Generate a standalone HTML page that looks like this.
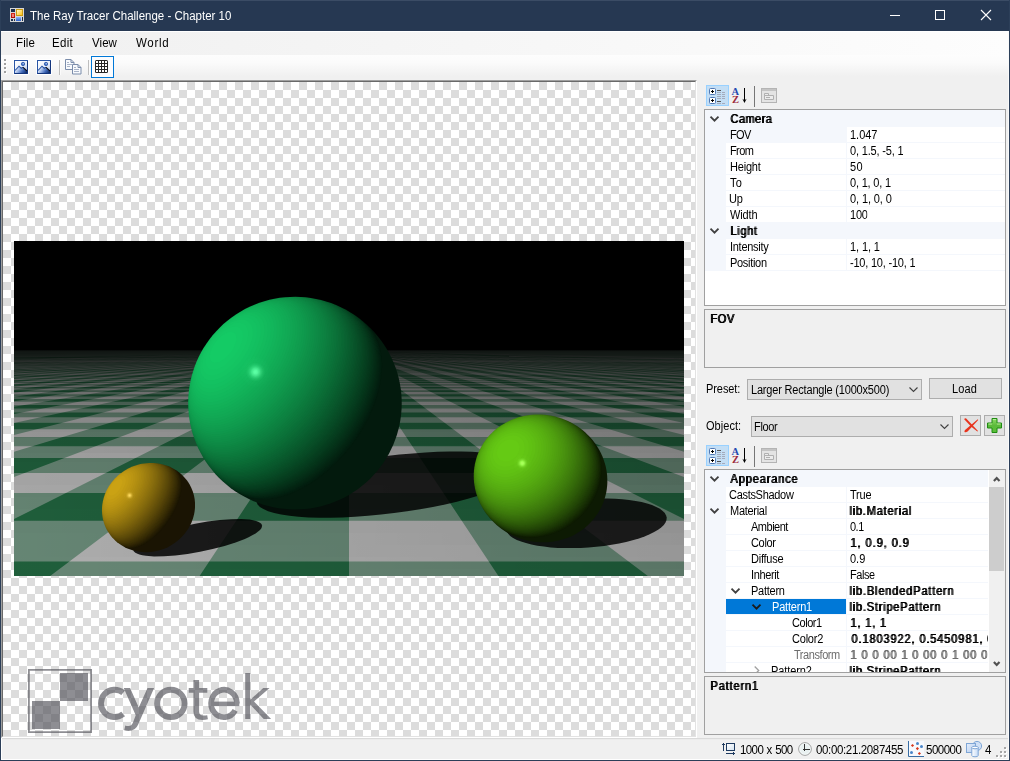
<!DOCTYPE html><html><head><meta charset="utf-8"><title>The Ray Tracer Challenge - Chapter 10</title><style>
html,body{margin:0;padding:0}
body{width:1010px;height:761px;position:relative;overflow:hidden;background:#f0f0f0;font-family:"Liberation Sans",sans-serif;font-size:12px;color:#000}
.a,.t,.g,.v,.l{position:absolute;white-space:nowrap}
.t{font-size:12px;line-height:16px;height:16px;transform:scaleX(.9583);transform-origin:0 0}
.g{font-size:12px;line-height:15px;height:15px;transform:scaleX(.9167);transform-origin:0 0}
.b{text-shadow:1.090px 0 0}
.l{left:730px}
.v{left:850px}
svg{position:absolute;overflow:visible}
.pg{position:absolute;left:704px;width:302px;box-sizing:border-box;border:1px solid #a0a0a0;background:#fff;overflow:hidden}
.dp{position:absolute;left:704px;width:302px;box-sizing:border-box;border:1px solid #a0a0a0;background:#f0f0f0}
.cb{position:absolute;box-sizing:border-box;border:1px solid #adadad;background:#e1e1e1}
.ln{position:absolute;left:0;width:300px;height:1px;background:#f4f7fc}
</style></head><body><div class="a" style="left:0;top:0;width:1010px;height:31px;background:#263852"></div><div class="a" style="left:0;top:0;width:1010px;height:1px;background:#3b4c65"></div><div class="a" style="left:0;top:0;width:1px;height:761px;background:#2c3f59"></div><div class="a" style="left:1009px;top:0;width:1px;height:761px;background:#2c3f59"></div><div class="a" style="left:0;top:760px;width:1010px;height:1px;background:#2c3f59"></div><svg style="left:10px;top:8px" width="14" height="14" viewBox="0 0 14 14"><defs><linearGradient id="iy" x1="0" y1="0" x2="1" y2="1"><stop offset="0" stop-color="#fff8c8"/><stop offset="1" stop-color="#ffc418"/></linearGradient><linearGradient id="ib" x1="0" y1="0" x2="0" y2="1"><stop offset="0" stop-color="#8db8ff"/><stop offset="1" stop-color="#2f62c8"/></linearGradient><linearGradient id="ir" x1="0" y1="0" x2="0" y2="1"><stop offset="0" stop-color="#d82a18"/><stop offset="1" stop-color="#a80c08"/></linearGradient></defs>
<rect width="14" height="14" fill="#d6d6d6"/><rect x="1" y="1" width="4" height="3" fill="#1b2f4e"/><rect x="6" y="1" width="7" height="7" fill="#c99a10"/><rect x="7" y="2" width="5" height="5" fill="url(#iy)"/><rect x="1" y="5" width="4" height="5" fill="url(#ir)"/><rect x="2" y="6" width="2" height="3" fill="#f08078"/><rect x="6" y="9" width="5" height="4" fill="url(#ib)"/><rect x="1" y="11" width="2" height="2" fill="#1b2f4e"/><rect x="4" y="11" width="1" height="2" fill="#1b2f4e"/><rect x="12" y="9" width="1" height="4" fill="#1b2f4e"/></svg><div class="t" style="left:30.06px;top:8px;letter-spacing:-0px;color:#fff">The Ray Tracer Challenge - Chapter 10</div><svg style="left:880px;top:5px" width="120" height="20" viewBox="880 5 120 20" fill="none" stroke="#fff" stroke-width="1"><path d="M890 15.5h10"/><rect x="935.5" y="10.5" width="9" height="9"/><path d="M981 10l10 10M991 10l-10 10" stroke-width="1.1"/></svg><div class="a" style="left:1px;top:31px;width:1008px;height:24px;background:linear-gradient(90deg,#f0f0f0,#fdfdfd)"></div><div class="a" style="left:1px;top:31px;width:1008px;height:1px;background:#fff"></div><div class="t" style="left:15.7px;top:35px;letter-spacing:0.14px;">File</div><div class="t" style="left:52.4px;top:35px;letter-spacing:0.33px;">Edit</div><div class="t" style="left:92.05px;top:35px;letter-spacing:0.07px;">View</div><div class="t" style="left:136.18px;top:35px;letter-spacing:0.71px;">World</div><div class="a" style="left:1px;top:55px;width:1008px;height:25px;background:linear-gradient(#fdfdfd 0,#fbfbfb 30%,#f0f0f0 85%)"></div><div class="a" style="left:1008px;top:59px;width:1px;height:19px;background:#a9a9a9"></div><svg style="left:4px;top:59px" width="3" height="16" viewBox="0 0 3 16"><path d="M1 1h2v2h-2zM1 5h2v2h-2zM1 9h2v2h-2zM1 13h2v2h-2z" fill="#fff"/><path d="M0 0h2v2h-2zM0 4h2v2h-2zM0 8h2v2h-2zM0 12h2v2h-2z" fill="#a0a0a0"/></svg><svg style="left:13px;top:59px" width="16" height="16" viewBox="0 0 16 16"><defs><linearGradient id="ga" x1="0" y1="0" x2="1" y2="1"><stop offset="0" stop-color="#fff"/><stop offset=".55" stop-color="#eaf0fb"/><stop offset="1" stop-color="#9db8e6"/></linearGradient><linearGradient id="gam" x1="0" y1=".55" x2="1" y2=".95"><stop offset="0" stop-color="#eef3fc"/><stop offset=".3" stop-color="#9ab4e4"/><stop offset=".62" stop-color="#3c64b4"/><stop offset="1" stop-color="#0a2660"/></linearGradient></defs><rect width="16" height="16" rx="1" fill="#fff"/><rect x="1.5" y="1.5" width="13" height="13" fill="url(#ga)" stroke="#2a55a5"/><circle cx="10" cy="5" r="1.700" fill="#4a78cc" stroke="#2a55a5" stroke-width=".8"/><path d="M9.400 4.300h1.800l-.9 1.300z" fill="#c9d9f5"/><path d="M2 11.5L6 7.2L8.2 9.2L9.8 8.2L14 12.2V14H2z" fill="url(#gam)"/><path d="M2 11.500L6 7.200L8.200 9.200L9.800 8.200" fill="none" stroke="#2450a2" stroke-width="1.100"/><path d="M9.8 8.2L14 12" stroke="#0a0a14" stroke-width="1.1"/><path d="M14.500 2v12.500h-13" fill="none" stroke="#14357c"/></svg><svg style="left:36px;top:59px" width="16" height="16" viewBox="0 0 16 16"><defs><linearGradient id="gb" x1="0" y1="0" x2="1" y2="1"><stop offset="0" stop-color="#fff"/><stop offset=".55" stop-color="#eaf0fb"/><stop offset="1" stop-color="#9db8e6"/></linearGradient><linearGradient id="gbm" x1="0" y1=".55" x2="1" y2=".95"><stop offset="0" stop-color="#eef3fc"/><stop offset=".3" stop-color="#9ab4e4"/><stop offset=".62" stop-color="#3c64b4"/><stop offset="1" stop-color="#0a2660"/></linearGradient></defs><rect width="16" height="16" rx="1" fill="#fff"/><rect x="1.5" y="1.5" width="13" height="13" fill="url(#gb)" stroke="#2a55a5"/><circle cx="10" cy="5" r="1.700" fill="#4a78cc" stroke="#2a55a5" stroke-width=".8"/><path d="M9.400 4.300h1.800l-.9 1.300z" fill="#c9d9f5"/><path d="M2 11.5L6 7.2L8.2 9.2L9.8 8.2L14 12.2V14H2z" fill="url(#gbm)"/><path d="M2 11.500L6 7.200L8.200 9.200L9.800 8.200" fill="none" stroke="#2450a2" stroke-width="1.100"/><path d="M9.8 8.2L14 12" stroke="#0a0a14" stroke-width="1.1"/><path d="M14.500 2v12.500h-13" fill="none" stroke="#14357c"/></svg><div class="a" style="left:59px;top:60px;width:1px;height:15px;background:#bebebe"></div><div class="a" style="left:60px;top:60px;width:1px;height:15px;background:#fbfbfb"></div><svg style="left:65px;top:59px" width="17" height="17" viewBox="0 0 17 17"><g fill="#f8fafd" stroke="#7b8dab" stroke-width="1"><path d="M.5 .5h5.500l3 3v7h-8.500z"/><path d="M6 .5v3h3" fill="none"/><path d="M7.500 5.500h5.500l3 3v6.500h-8.500z"/><path d="M13 5.500v3h3" fill="none"/></g><path d="M2 3.500h2M2 5.500h5M2 7.500h3M9 8.500h2M9 10.500h5M9 12.500h5" stroke="#a9b4c8" stroke-width="1"/></svg><div class="a" style="left:88px;top:60px;width:1px;height:15px;background:#bebebe"></div><div class="a" style="left:89px;top:60px;width:1px;height:15px;background:#fbfbfb"></div><div class="a" style="left:91px;top:56px;width:23px;height:22px;box-sizing:border-box;border:1px solid #0078d7;background:#fbfcfe"></div><svg style="left:95px;top:60px" width="13" height="13" viewBox="0 0 13 13"><rect width="13" height="13" rx="1.500" fill="#262626"/><path d="M1 1h2v2h-2zM4 1h2v2h-2zM7 1h2v2h-2zM10 1h2v2h-2zM1 4h2v2h-2zM4 4h2v2h-2zM7 4h2v2h-2zM10 4h2v2h-2zM1 7h2v2h-2zM4 7h2v2h-2zM7 7h2v2h-2zM10 7h2v2h-2zM1 10h2v2h-2zM4 10h2v2h-2zM7 10h2v2h-2zM10 10h2v2h-2z" fill="#fff"/></svg><div class="a" style="left:1px;top:80px;width:696px;height:658px;box-sizing:border-box;border:1px solid;border-color:#a0a0a0 #fff #fff #a0a0a0"></div><div class="a" style="left:2px;top:81px;width:694px;height:656px;box-sizing:border-box;border:1px solid;border-color:#696969 #e3e3e3 #e3e3e3 #696969"></div><div class="a" style="left:3px;top:82px;width:692px;height:654px;background:conic-gradient(#dcdcdc 25%,#fff 0 50%,#dcdcdc 0 75%,#fff 0) 0 0/16px 16px"></div><svg width="670" height="335" viewBox="0 0 670 335" style="position:absolute;left:14px;top:241px;background:#000;overflow:hidden"><defs><linearGradient id="L0"><stop offset="0" stop-opacity="0.9"/><stop offset="0.17" stop-opacity="0.9"/><stop offset="0.33" stop-opacity="0.9"/><stop offset="0.5" stop-opacity="0.9"/><stop offset="0.67" stop-opacity="0.9"/><stop offset="0.83" stop-opacity="0.9"/><stop offset="1" stop-opacity="0.9"/></linearGradient><linearGradient id="L1"><stop offset="0" stop-opacity="0.89"/><stop offset="0.17" stop-opacity="0.89"/><stop offset="0.33" stop-opacity="0.89"/><stop offset="0.5" stop-opacity="0.89"/><stop offset="0.67" stop-opacity="0.89"/><stop offset="0.83" stop-opacity="0.89"/><stop offset="1" stop-opacity="0.89"/></linearGradient><linearGradient id="L2"><stop offset="0" stop-opacity="0.88"/><stop offset="0.17" stop-opacity="0.88"/><stop offset="0.33" stop-opacity="0.88"/><stop offset="0.5" stop-opacity="0.88"/><stop offset="0.67" stop-opacity="0.88"/><stop offset="0.83" stop-opacity="0.88"/><stop offset="1" stop-opacity="0.88"/></linearGradient><linearGradient id="L3"><stop offset="0" stop-opacity="0.88"/><stop offset="0.17" stop-opacity="0.87"/><stop offset="0.33" stop-opacity="0.87"/><stop offset="0.5" stop-opacity="0.87"/><stop offset="0.67" stop-opacity="0.87"/><stop offset="0.83" stop-opacity="0.87"/><stop offset="1" stop-opacity="0.88"/></linearGradient><linearGradient id="L4"><stop offset="0" stop-opacity="0.87"/><stop offset="0.17" stop-opacity="0.86"/><stop offset="0.33" stop-opacity="0.86"/><stop offset="0.5" stop-opacity="0.86"/><stop offset="0.67" stop-opacity="0.86"/><stop offset="0.83" stop-opacity="0.87"/><stop offset="1" stop-opacity="0.87"/></linearGradient><linearGradient id="L5"><stop offset="0" stop-opacity="0.86"/><stop offset="0.17" stop-opacity="0.85"/><stop offset="0.33" stop-opacity="0.85"/><stop offset="0.5" stop-opacity="0.85"/><stop offset="0.67" stop-opacity="0.85"/><stop offset="0.83" stop-opacity="0.86"/><stop offset="1" stop-opacity="0.86"/></linearGradient><linearGradient id="L6"><stop offset="0" stop-opacity="0.85"/><stop offset="0.17" stop-opacity="0.85"/><stop offset="0.33" stop-opacity="0.84"/><stop offset="0.5" stop-opacity="0.84"/><stop offset="0.67" stop-opacity="0.84"/><stop offset="0.83" stop-opacity="0.85"/><stop offset="1" stop-opacity="0.85"/></linearGradient><linearGradient id="L7"><stop offset="0" stop-opacity="0.84"/><stop offset="0.17" stop-opacity="0.84"/><stop offset="0.33" stop-opacity="0.83"/><stop offset="0.5" stop-opacity="0.83"/><stop offset="0.67" stop-opacity="0.84"/><stop offset="0.83" stop-opacity="0.84"/><stop offset="1" stop-opacity="0.84"/></linearGradient><linearGradient id="L8"><stop offset="0" stop-opacity="0.83"/><stop offset="0.17" stop-opacity="0.83"/><stop offset="0.33" stop-opacity="0.82"/><stop offset="0.5" stop-opacity="0.82"/><stop offset="0.67" stop-opacity="0.83"/><stop offset="0.83" stop-opacity="0.83"/><stop offset="1" stop-opacity="0.84"/></linearGradient><linearGradient id="L9"><stop offset="0" stop-opacity="0.82"/><stop offset="0.17" stop-opacity="0.82"/><stop offset="0.33" stop-opacity="0.81"/><stop offset="0.5" stop-opacity="0.81"/><stop offset="0.67" stop-opacity="0.82"/><stop offset="0.83" stop-opacity="0.82"/><stop offset="1" stop-opacity="0.83"/></linearGradient><linearGradient id="L10"><stop offset="0" stop-opacity="0.81"/><stop offset="0.17" stop-opacity="0.81"/><stop offset="0.33" stop-opacity="0.81"/><stop offset="0.5" stop-opacity="0.81"/><stop offset="0.67" stop-opacity="0.81"/><stop offset="0.83" stop-opacity="0.81"/><stop offset="1" stop-opacity="0.82"/></linearGradient><linearGradient id="L11"><stop offset="0" stop-opacity="0.8"/><stop offset="0.17" stop-opacity="0.8"/><stop offset="0.33" stop-opacity="0.8"/><stop offset="0.5" stop-opacity="0.8"/><stop offset="0.67" stop-opacity="0.8"/><stop offset="0.83" stop-opacity="0.81"/><stop offset="1" stop-opacity="0.81"/></linearGradient><linearGradient id="L12"><stop offset="0" stop-opacity="0.8"/><stop offset="0.17" stop-opacity="0.79"/><stop offset="0.33" stop-opacity="0.79"/><stop offset="0.5" stop-opacity="0.79"/><stop offset="0.67" stop-opacity="0.79"/><stop offset="0.83" stop-opacity="0.8"/><stop offset="1" stop-opacity="0.81"/></linearGradient><linearGradient id="L13"><stop offset="0" stop-opacity="0.79"/><stop offset="0.17" stop-opacity="0.78"/><stop offset="0.33" stop-opacity="0.78"/><stop offset="0.5" stop-opacity="0.78"/><stop offset="0.67" stop-opacity="0.78"/><stop offset="0.83" stop-opacity="0.79"/><stop offset="1" stop-opacity="0.8"/></linearGradient><linearGradient id="L14"><stop offset="0" stop-opacity="0.78"/><stop offset="0.17" stop-opacity="0.77"/><stop offset="0.33" stop-opacity="0.77"/><stop offset="0.5" stop-opacity="0.77"/><stop offset="0.67" stop-opacity="0.78"/><stop offset="0.83" stop-opacity="0.78"/><stop offset="1" stop-opacity="0.79"/></linearGradient><linearGradient id="L15"><stop offset="0" stop-opacity="0.77"/><stop offset="0.17" stop-opacity="0.76"/><stop offset="0.33" stop-opacity="0.76"/><stop offset="0.5" stop-opacity="0.76"/><stop offset="0.67" stop-opacity="0.77"/><stop offset="0.83" stop-opacity="0.78"/><stop offset="1" stop-opacity="0.79"/></linearGradient><linearGradient id="L16"><stop offset="0" stop-opacity="0.76"/><stop offset="0.17" stop-opacity="0.76"/><stop offset="0.33" stop-opacity="0.75"/><stop offset="0.5" stop-opacity="0.75"/><stop offset="0.67" stop-opacity="0.76"/><stop offset="0.83" stop-opacity="0.77"/><stop offset="1" stop-opacity="0.78"/></linearGradient><linearGradient id="L17"><stop offset="0" stop-opacity="0.75"/><stop offset="0.17" stop-opacity="0.75"/><stop offset="0.33" stop-opacity="0.74"/><stop offset="0.5" stop-opacity="0.75"/><stop offset="0.67" stop-opacity="0.75"/><stop offset="0.83" stop-opacity="0.76"/><stop offset="1" stop-opacity="0.77"/></linearGradient><linearGradient id="L18"><stop offset="0" stop-opacity="0.75"/><stop offset="0.17" stop-opacity="0.74"/><stop offset="0.33" stop-opacity="0.74"/><stop offset="0.5" stop-opacity="0.74"/><stop offset="0.67" stop-opacity="0.75"/><stop offset="0.83" stop-opacity="0.76"/><stop offset="1" stop-opacity="0.77"/></linearGradient><linearGradient id="L19"><stop offset="0" stop-opacity="0.74"/><stop offset="0.17" stop-opacity="0.73"/><stop offset="0.33" stop-opacity="0.73"/><stop offset="0.5" stop-opacity="0.73"/><stop offset="0.67" stop-opacity="0.74"/><stop offset="0.83" stop-opacity="0.75"/><stop offset="1" stop-opacity="0.76"/></linearGradient><linearGradient id="L20"><stop offset="0" stop-opacity="0.73"/><stop offset="0.17" stop-opacity="0.72"/><stop offset="0.33" stop-opacity="0.72"/><stop offset="0.5" stop-opacity="0.72"/><stop offset="0.67" stop-opacity="0.73"/><stop offset="0.83" stop-opacity="0.74"/><stop offset="1" stop-opacity="0.75"/></linearGradient><linearGradient id="L21"><stop offset="0" stop-opacity="0.72"/><stop offset="0.17" stop-opacity="0.71"/><stop offset="0.33" stop-opacity="0.71"/><stop offset="0.5" stop-opacity="0.72"/><stop offset="0.67" stop-opacity="0.72"/><stop offset="0.83" stop-opacity="0.74"/><stop offset="1" stop-opacity="0.75"/></linearGradient><linearGradient id="L22"><stop offset="0" stop-opacity="0.71"/><stop offset="0.17" stop-opacity="0.71"/><stop offset="0.33" stop-opacity="0.71"/><stop offset="0.5" stop-opacity="0.71"/><stop offset="0.67" stop-opacity="0.72"/><stop offset="0.83" stop-opacity="0.73"/><stop offset="1" stop-opacity="0.74"/></linearGradient><linearGradient id="L23"><stop offset="0" stop-opacity="0.7"/><stop offset="0.17" stop-opacity="0.7"/><stop offset="0.33" stop-opacity="0.7"/><stop offset="0.5" stop-opacity="0.7"/><stop offset="0.67" stop-opacity="0.71"/><stop offset="0.83" stop-opacity="0.72"/><stop offset="1" stop-opacity="0.74"/></linearGradient><linearGradient id="L24"><stop offset="0" stop-opacity="0.7"/><stop offset="0.17" stop-opacity="0.69"/><stop offset="0.33" stop-opacity="0.69"/><stop offset="0.5" stop-opacity="0.7"/><stop offset="0.67" stop-opacity="0.7"/><stop offset="0.83" stop-opacity="0.72"/><stop offset="1" stop-opacity="0.73"/></linearGradient><linearGradient id="L25"><stop offset="0" stop-opacity="0.69"/><stop offset="0.17" stop-opacity="0.68"/><stop offset="0.33" stop-opacity="0.68"/><stop offset="0.5" stop-opacity="0.69"/><stop offset="0.67" stop-opacity="0.7"/><stop offset="0.83" stop-opacity="0.71"/><stop offset="1" stop-opacity="0.72"/></linearGradient><linearGradient id="L26"><stop offset="0" stop-opacity="0.68"/><stop offset="0.17" stop-opacity="0.68"/><stop offset="0.33" stop-opacity="0.68"/><stop offset="0.5" stop-opacity="0.68"/><stop offset="0.67" stop-opacity="0.69"/><stop offset="0.83" stop-opacity="0.71"/><stop offset="1" stop-opacity="0.72"/></linearGradient><linearGradient id="L27"><stop offset="0" stop-opacity="0.67"/><stop offset="0.17" stop-opacity="0.67"/><stop offset="0.33" stop-opacity="0.67"/><stop offset="0.5" stop-opacity="0.68"/><stop offset="0.67" stop-opacity="0.69"/><stop offset="0.83" stop-opacity="0.7"/><stop offset="1" stop-opacity="0.71"/></linearGradient><linearGradient id="L28"><stop offset="0" stop-opacity="0.67"/><stop offset="0.17" stop-opacity="0.66"/><stop offset="0.33" stop-opacity="0.66"/><stop offset="0.5" stop-opacity="0.67"/><stop offset="0.67" stop-opacity="0.68"/><stop offset="0.83" stop-opacity="0.69"/><stop offset="1" stop-opacity="0.71"/></linearGradient><linearGradient id="L29"><stop offset="0" stop-opacity="0.66"/><stop offset="0.17" stop-opacity="0.65"/><stop offset="0.33" stop-opacity="0.66"/><stop offset="0.5" stop-opacity="0.66"/><stop offset="0.67" stop-opacity="0.67"/><stop offset="0.83" stop-opacity="0.69"/><stop offset="1" stop-opacity="0.7"/></linearGradient><linearGradient id="L30"><stop offset="0" stop-opacity="0.65"/><stop offset="0.17" stop-opacity="0.64"/><stop offset="0.33" stop-opacity="0.65"/><stop offset="0.5" stop-opacity="0.65"/><stop offset="0.67" stop-opacity="0.67"/><stop offset="0.83" stop-opacity="0.68"/><stop offset="1" stop-opacity="0.7"/></linearGradient><linearGradient id="L31"><stop offset="0" stop-opacity="0.64"/><stop offset="0.17" stop-opacity="0.63"/><stop offset="0.33" stop-opacity="0.63"/><stop offset="0.5" stop-opacity="0.64"/><stop offset="0.67" stop-opacity="0.66"/><stop offset="0.83" stop-opacity="0.67"/><stop offset="1" stop-opacity="0.69"/></linearGradient><linearGradient id="L32"><stop offset="0" stop-opacity="0.62"/><stop offset="0.17" stop-opacity="0.62"/><stop offset="0.33" stop-opacity="0.62"/><stop offset="0.5" stop-opacity="0.63"/><stop offset="0.67" stop-opacity="0.65"/><stop offset="0.83" stop-opacity="0.66"/><stop offset="1" stop-opacity="0.68"/></linearGradient><linearGradient id="L33"><stop offset="0" stop-opacity="0.61"/><stop offset="0.17" stop-opacity="0.61"/><stop offset="0.33" stop-opacity="0.61"/><stop offset="0.5" stop-opacity="0.62"/><stop offset="0.67" stop-opacity="0.64"/><stop offset="0.83" stop-opacity="0.65"/><stop offset="1" stop-opacity="0.67"/></linearGradient><linearGradient id="L34"><stop offset="0" stop-opacity="0.6"/><stop offset="0.17" stop-opacity="0.59"/><stop offset="0.33" stop-opacity="0.6"/><stop offset="0.5" stop-opacity="0.61"/><stop offset="0.67" stop-opacity="0.63"/><stop offset="0.83" stop-opacity="0.64"/><stop offset="1" stop-opacity="0.66"/></linearGradient><linearGradient id="L35"><stop offset="0" stop-opacity="0.58"/><stop offset="0.17" stop-opacity="0.58"/><stop offset="0.33" stop-opacity="0.59"/><stop offset="0.5" stop-opacity="0.6"/><stop offset="0.67" stop-opacity="0.62"/><stop offset="0.83" stop-opacity="0.63"/><stop offset="1" stop-opacity="0.65"/></linearGradient><linearGradient id="L36"><stop offset="0" stop-opacity="0.57"/><stop offset="0.17" stop-opacity="0.57"/><stop offset="0.33" stop-opacity="0.58"/><stop offset="0.5" stop-opacity="0.59"/><stop offset="0.67" stop-opacity="0.61"/><stop offset="0.83" stop-opacity="0.63"/><stop offset="1" stop-opacity="0.64"/></linearGradient><linearGradient id="L37"><stop offset="0" stop-opacity="0.56"/><stop offset="0.17" stop-opacity="0.56"/><stop offset="0.33" stop-opacity="0.57"/><stop offset="0.5" stop-opacity="0.58"/><stop offset="0.67" stop-opacity="0.6"/><stop offset="0.83" stop-opacity="0.62"/><stop offset="1" stop-opacity="0.64"/></linearGradient><linearGradient id="L38"><stop offset="0" stop-opacity="0.55"/><stop offset="0.17" stop-opacity="0.55"/><stop offset="0.33" stop-opacity="0.56"/><stop offset="0.5" stop-opacity="0.57"/><stop offset="0.67" stop-opacity="0.59"/><stop offset="0.83" stop-opacity="0.61"/><stop offset="1" stop-opacity="0.63"/></linearGradient><linearGradient id="L39"><stop offset="0" stop-opacity="0.54"/><stop offset="0.17" stop-opacity="0.54"/><stop offset="0.33" stop-opacity="0.55"/><stop offset="0.5" stop-opacity="0.56"/><stop offset="0.67" stop-opacity="0.58"/><stop offset="0.83" stop-opacity="0.6"/><stop offset="1" stop-opacity="0.62"/></linearGradient><linearGradient id="L40"><stop offset="0" stop-opacity="0.52"/><stop offset="0.17" stop-opacity="0.53"/><stop offset="0.33" stop-opacity="0.54"/><stop offset="0.5" stop-opacity="0.55"/><stop offset="0.67" stop-opacity="0.57"/><stop offset="0.83" stop-opacity="0.59"/><stop offset="1" stop-opacity="0.61"/></linearGradient><linearGradient id="L41"><stop offset="0" stop-opacity="0.51"/><stop offset="0.17" stop-opacity="0.52"/><stop offset="0.33" stop-opacity="0.53"/><stop offset="0.5" stop-opacity="0.54"/><stop offset="0.67" stop-opacity="0.56"/><stop offset="0.83" stop-opacity="0.58"/><stop offset="1" stop-opacity="0.6"/></linearGradient><linearGradient id="L42"><stop offset="0" stop-opacity="0.5"/><stop offset="0.17" stop-opacity="0.5"/><stop offset="0.33" stop-opacity="0.52"/><stop offset="0.5" stop-opacity="0.53"/><stop offset="0.67" stop-opacity="0.55"/><stop offset="0.83" stop-opacity="0.57"/><stop offset="1" stop-opacity="0.59"/></linearGradient><linearGradient id="L43"><stop offset="0" stop-opacity="0.48"/><stop offset="0.17" stop-opacity="0.49"/><stop offset="0.33" stop-opacity="0.5"/><stop offset="0.5" stop-opacity="0.52"/><stop offset="0.67" stop-opacity="0.54"/><stop offset="0.83" stop-opacity="0.56"/><stop offset="1" stop-opacity="0.58"/></linearGradient><linearGradient id="L44"><stop offset="0" stop-opacity="0.47"/><stop offset="0.17" stop-opacity="0.48"/><stop offset="0.33" stop-opacity="0.49"/><stop offset="0.5" stop-opacity="0.51"/><stop offset="0.67" stop-opacity="0.53"/><stop offset="0.83" stop-opacity="0.55"/><stop offset="1" stop-opacity="0.57"/></linearGradient><linearGradient id="L45"><stop offset="0" stop-opacity="0.46"/><stop offset="0.17" stop-opacity="0.47"/><stop offset="0.33" stop-opacity="0.48"/><stop offset="0.5" stop-opacity="0.5"/><stop offset="0.67" stop-opacity="0.52"/><stop offset="0.83" stop-opacity="0.54"/><stop offset="1" stop-opacity="0.56"/></linearGradient><linearGradient id="L46"><stop offset="0" stop-opacity="0.44"/><stop offset="0.17" stop-opacity="0.45"/><stop offset="0.33" stop-opacity="0.47"/><stop offset="0.5" stop-opacity="0.49"/><stop offset="0.67" stop-opacity="0.51"/><stop offset="0.83" stop-opacity="0.53"/><stop offset="1" stop-opacity="0.55"/></linearGradient><linearGradient id="L47"><stop offset="0" stop-opacity="0.43"/><stop offset="0.17" stop-opacity="0.44"/><stop offset="0.33" stop-opacity="0.46"/><stop offset="0.5" stop-opacity="0.48"/><stop offset="0.67" stop-opacity="0.5"/><stop offset="0.83" stop-opacity="0.52"/><stop offset="1" stop-opacity="0.54"/></linearGradient><linearGradient id="L48"><stop offset="0" stop-opacity="0.42"/><stop offset="0.17" stop-opacity="0.43"/><stop offset="0.33" stop-opacity="0.45"/><stop offset="0.5" stop-opacity="0.47"/><stop offset="0.67" stop-opacity="0.49"/><stop offset="0.83" stop-opacity="0.51"/><stop offset="1" stop-opacity="0.53"/></linearGradient><linearGradient id="L49"><stop offset="0" stop-opacity="0.4"/><stop offset="0.17" stop-opacity="0.42"/><stop offset="0.33" stop-opacity="0.44"/><stop offset="0.5" stop-opacity="0.46"/><stop offset="0.67" stop-opacity="0.48"/><stop offset="0.83" stop-opacity="0.5"/><stop offset="1" stop-opacity="0.52"/></linearGradient><linearGradient id="L50"><stop offset="0" stop-opacity="0.39"/><stop offset="0.17" stop-opacity="0.41"/><stop offset="0.33" stop-opacity="0.42"/><stop offset="0.5" stop-opacity="0.44"/><stop offset="0.67" stop-opacity="0.46"/><stop offset="0.83" stop-opacity="0.48"/><stop offset="1" stop-opacity="0.5"/></linearGradient><linearGradient id="L51"><stop offset="0" stop-opacity="0.38"/><stop offset="0.17" stop-opacity="0.39"/><stop offset="0.33" stop-opacity="0.41"/><stop offset="0.5" stop-opacity="0.43"/><stop offset="0.67" stop-opacity="0.45"/><stop offset="0.83" stop-opacity="0.47"/><stop offset="1" stop-opacity="0.49"/></linearGradient><linearGradient id="L52"><stop offset="0" stop-opacity="0.37"/><stop offset="0.17" stop-opacity="0.38"/><stop offset="0.33" stop-opacity="0.4"/><stop offset="0.5" stop-opacity="0.42"/><stop offset="0.67" stop-opacity="0.44"/><stop offset="0.83" stop-opacity="0.46"/><stop offset="1" stop-opacity="0.48"/></linearGradient><linearGradient id="L53"><stop offset="0" stop-opacity="0.36"/><stop offset="0.17" stop-opacity="0.37"/><stop offset="0.33" stop-opacity="0.39"/><stop offset="0.5" stop-opacity="0.41"/><stop offset="0.67" stop-opacity="0.43"/><stop offset="0.83" stop-opacity="0.45"/><stop offset="1" stop-opacity="0.47"/></linearGradient><linearGradient id="L54"><stop offset="0" stop-opacity="0.35"/><stop offset="0.17" stop-opacity="0.36"/><stop offset="0.33" stop-opacity="0.38"/><stop offset="0.5" stop-opacity="0.4"/><stop offset="0.67" stop-opacity="0.42"/><stop offset="0.83" stop-opacity="0.44"/><stop offset="1" stop-opacity="0.45"/></linearGradient><linearGradient id="L55"><stop offset="0" stop-opacity="0.34"/><stop offset="0.17" stop-opacity="0.36"/><stop offset="0.33" stop-opacity="0.37"/><stop offset="0.5" stop-opacity="0.39"/><stop offset="0.67" stop-opacity="0.41"/><stop offset="0.83" stop-opacity="0.43"/><stop offset="1" stop-opacity="0.44"/></linearGradient><linearGradient id="L56"><stop offset="0" stop-opacity="0.33"/><stop offset="0.17" stop-opacity="0.35"/><stop offset="0.33" stop-opacity="0.37"/><stop offset="0.5" stop-opacity="0.38"/><stop offset="0.67" stop-opacity="0.4"/><stop offset="0.83" stop-opacity="0.42"/><stop offset="1" stop-opacity="0.43"/></linearGradient><linearGradient id="L57"><stop offset="0" stop-opacity="0.33"/><stop offset="0.17" stop-opacity="0.34"/><stop offset="0.33" stop-opacity="0.36"/><stop offset="0.5" stop-opacity="0.38"/><stop offset="0.67" stop-opacity="0.39"/><stop offset="0.83" stop-opacity="0.41"/><stop offset="1" stop-opacity="0.43"/></linearGradient><linearGradient id="L58"><stop offset="0" stop-opacity="0.32"/><stop offset="0.17" stop-opacity="0.34"/><stop offset="0.33" stop-opacity="0.36"/><stop offset="0.5" stop-opacity="0.37"/><stop offset="0.67" stop-opacity="0.39"/><stop offset="0.83" stop-opacity="0.4"/><stop offset="1" stop-opacity="0.42"/></linearGradient><linearGradient id="L59"><stop offset="0" stop-opacity="0.32"/><stop offset="0.17" stop-opacity="0.34"/><stop offset="0.33" stop-opacity="0.35"/><stop offset="0.5" stop-opacity="0.37"/><stop offset="0.67" stop-opacity="0.38"/><stop offset="0.83" stop-opacity="0.4"/><stop offset="1" stop-opacity="0.41"/></linearGradient><linearGradient id="L60"><stop offset="0" stop-opacity="0.32"/><stop offset="0.17" stop-opacity="0.33"/><stop offset="0.33" stop-opacity="0.35"/><stop offset="0.5" stop-opacity="0.36"/><stop offset="0.67" stop-opacity="0.38"/><stop offset="0.83" stop-opacity="0.39"/><stop offset="1" stop-opacity="0.41"/></linearGradient><linearGradient id="L61"><stop offset="0" stop-opacity="0.32"/><stop offset="0.17" stop-opacity="0.33"/><stop offset="0.33" stop-opacity="0.34"/><stop offset="0.5" stop-opacity="0.36"/><stop offset="0.67" stop-opacity="0.37"/><stop offset="0.83" stop-opacity="0.39"/><stop offset="1" stop-opacity="0.4"/></linearGradient><radialGradient id="H0" gradientUnits="userSpaceOnUse" cx="241.57" cy="130.99" r="15.59"><stop offset="0" stop-color="#fff" stop-opacity="0.3"/><stop offset="0.12" stop-color="#fff" stop-opacity="0.27"/><stop offset="0.19" stop-color="#fff" stop-opacity="0.22"/><stop offset="0.26" stop-color="#fff" stop-opacity="0.18"/><stop offset="0.32" stop-color="#fff" stop-opacity="0.13"/><stop offset="0.39" stop-color="#fff" stop-opacity="0.09"/><stop offset="0.47" stop-color="#fff" stop-opacity="0.05"/><stop offset="0.54" stop-color="#fff" stop-opacity="0.03"/><stop offset="0.62" stop-color="#fff" stop-opacity="0.01"/><stop offset="0.7" stop-color="#fff" stop-opacity="0.01"/><stop offset="1" stop-color="#fff" stop-opacity="0"/></radialGradient><radialGradient id="H1" gradientUnits="userSpaceOnUse" cx="508.29" cy="222.22" r="9.27"><stop offset="0" stop-color="#fff" stop-opacity="0.3"/><stop offset="0.12" stop-color="#fff" stop-opacity="0.27"/><stop offset="0.19" stop-color="#fff" stop-opacity="0.22"/><stop offset="0.26" stop-color="#fff" stop-opacity="0.18"/><stop offset="0.32" stop-color="#fff" stop-opacity="0.13"/><stop offset="0.39" stop-color="#fff" stop-opacity="0.09"/><stop offset="0.47" stop-color="#fff" stop-opacity="0.05"/><stop offset="0.54" stop-color="#fff" stop-opacity="0.03"/><stop offset="0.62" stop-color="#fff" stop-opacity="0.01"/><stop offset="0.7" stop-color="#fff" stop-opacity="0.01"/><stop offset="1" stop-color="#fff" stop-opacity="0"/></radialGradient><radialGradient id="H2" gradientUnits="userSpaceOnUse" cx="115.66" cy="254.43" r="6.54"><stop offset="0" stop-color="#fff" stop-opacity="0.3"/><stop offset="0.12" stop-color="#fff" stop-opacity="0.27"/><stop offset="0.19" stop-color="#fff" stop-opacity="0.22"/><stop offset="0.25" stop-color="#fff" stop-opacity="0.18"/><stop offset="0.32" stop-color="#fff" stop-opacity="0.13"/><stop offset="0.39" stop-color="#fff" stop-opacity="0.09"/><stop offset="0.47" stop-color="#fff" stop-opacity="0.05"/><stop offset="0.54" stop-color="#fff" stop-opacity="0.03"/><stop offset="0.62" stop-color="#fff" stop-opacity="0.01"/><stop offset="0.7" stop-color="#fff" stop-opacity="0.01"/><stop offset="1" stop-color="#fff" stop-opacity="0"/></radialGradient></defs><rect x="0" y="109.45" width="670" height="225.55" fill="#97c5ab"/><rect x="0" y="115.78" width="670" height="219.22" fill="#fff"/><path fill="#2e8b57" d="M-2 320.57H672V337H-2zM-2 252.01H672V279.63H-2zM-2 217.1H672V232.11H-2zM-2 195.95H672V205.37H-2zM-2 181.76H672V188.22H-2zM-2 171.58H672V176.28H-2zM-2 163.92H672V167.5H-2zM-2 157.95H672V160.77H-2zM-2 153.17H672V155.44H-2zM-2 149.25H672V151.12H-2zM-2 145.98H672V147.54H-2zM-2 143.21H672V144.54H-2zM-2 140.83H672V141.98H-2zM-2 138.77H672V139.76H-2zM-2 136.96H672V137.84H-2zM-2 135.37H672V136.14H-2zM-2 133.95H672V134.64H-2zM-2 132.68H672V133.3H-2zM-2 131.54H672V132.1H-2zM-2 130.51H672V131.01H-2zM-2 129.57H672V130.03H-2zM-2 128.71H672V129.13H-2zM-2 127.92H672V128.31H-2zM-2 127.2H672V127.55H-2zM-2 126.53H672V126.86H-2zM-2 125.91H672V126.21H-2zM-2 125.33H672V125.62H-2zM-2 124.8H672V125.06H-2zM-2 124.3H672V124.54H-2zM-2 123.83H672V124.06H-2zM-2 123.39H672V123.61H-2zM-2 122.98H672V123.18H-2zM-2 122.59H672V122.78H-2zM-2 122.22H672V122.4H-2zM-2 121.88H672V122.05H-2zM-2 121.55H672V121.71H-2zM-2 121.24H672V121.39H-2zM-2 120.95H672V121.09H-2zM-2 120.67H672V120.8H-2zM-2 120.4H672V120.53H-2zM-2 120.15H672V120.27H-2zM-2 119.91H672V120.03H-2zM-2 119.68H672V119.79H-2zM-2 119.46H672V119.56H-2zM-2 119.25H672V119.35H-2zM-2 119.04H672V119.14H-2zM-2 118.85H672V118.95H-2zM-2 118.66H672V118.76H-2zM-2 118.49H672V118.58H-2zM-2 118.32H672V118.4H-2zM-2 118.15H672V118.23H-2zM-2 117.99H672V118.07H-2zM-2 117.84H672V117.92H-2zM-2 117.69H672V117.77H-2zM-2 117.55H672V117.62H-2zM-2 117.42H672V117.48H-2zM-2 117.28H672V117.35H-2zM-2 117.16H672V117.22H-2zM-2 117.03H672V117.09H-2zM-2 116.91H672V116.97H-2zM-2 116.8H672V116.86H-2zM-2 116.69H672V116.74H-2zM-2 116.58H672V116.63H-2zM-2 116.47H672V116.53H-2zM-2 116.37H672V116.42H-2zM-2 116.27H672V116.32H-2zM-2 116.18H672V116.22H-2zM-2 116.08H672V116.13H-2zM-2 115.99H672V116.04H-2zM-2 115.91H672V115.95H-2zM-2 115.82H672V115.86H-2z"/><g opacity=".5"><rect x="0" y="109.45" width="670" height="225.55" fill="#97c5ab"/><path fill="#fff" d="M335 109.75L-10368.07 337H11038.07z"/><path fill="#2e8b57" d="M335 109.75L-10368.07 337H-10217.32zM335 109.75L-10066.57 337H-9915.82zM335 109.75L-9765.08 337H-9614.33zM335 109.75L-9463.58 337H-9312.83zM335 109.75L-9162.09 337H-9011.34zM335 109.75L-8860.59 337H-8709.84zM335 109.75L-8559.1 337H-8408.35zM335 109.75L-8257.6 337H-8106.85zM335 109.75L-7956.11 337H-7805.36zM335 109.75L-7654.61 337H-7503.87zM335 109.75L-7353.12 337H-7202.37zM335 109.75L-7051.62 337H-6900.88zM335 109.75L-6750.13 337H-6599.38zM335 109.75L-6448.63 337H-6297.89zM335 109.75L-6147.14 337H-5996.39zM335 109.75L-5845.64 337H-5694.9zM335 109.75L-5544.15 337H-5393.4zM335 109.75L-5242.65 337H-5091.91zM335 109.75L-4941.16 337H-4790.41zM335 109.75L-4639.66 337H-4488.92zM335 109.75L-4338.17 337H-4187.42zM335 109.75L-4036.67 337H-3885.93zM335 109.75L-3735.18 337H-3584.43zM335 109.75L-3433.69 337H-3282.94zM335 109.75L-3132.19 337H-2981.44zM335 109.75L-2830.7 337H-2679.95zM335 109.75L-2529.2 337H-2378.45zM335 109.75L-2227.71 337H-2076.96zM335 109.75L-1926.21 337H-1775.46zM335 109.75L-1624.72 337H-1473.97zM335 109.75L-1323.22 337H-1172.47zM335 109.75L-1021.73 337H-870.98zM335 109.75L-720.23 337H-569.48zM335 109.75L-418.74 337H-267.99zM335 109.75L-117.24 337H33.51zM335 109.75L184.25 337H335zM335 109.75L485.75 337H636.49zM335 109.75L787.24 337H937.99zM335 109.75L1088.74 337H1239.48zM335 109.75L1390.23 337H1540.98zM335 109.75L1691.73 337H1842.47zM335 109.75L1993.22 337H2143.97zM335 109.75L2294.72 337H2445.46zM335 109.75L2596.21 337H2746.96zM335 109.75L2897.71 337H3048.45zM335 109.75L3199.2 337H3349.95zM335 109.75L3500.7 337H3651.44zM335 109.75L3802.19 337H3952.94zM335 109.75L4103.69 337H4254.43zM335 109.75L4405.18 337H4555.93zM335 109.75L4706.67 337H4857.42zM335 109.75L5008.17 337H5158.92zM335 109.75L5309.66 337H5460.41zM335 109.75L5611.16 337H5761.91zM335 109.75L5912.65 337H6063.4zM335 109.75L6214.15 337H6364.9zM335 109.75L6515.64 337H6666.39zM335 109.75L6817.14 337H6967.89zM335 109.75L7118.63 337H7269.38zM335 109.75L7420.13 337H7570.88zM335 109.75L7721.62 337H7872.37zM335 109.75L8023.12 337H8173.87zM335 109.75L8324.61 337H8475.36zM335 109.75L8626.11 337H8776.85zM335 109.75L8927.6 337H9078.35zM335 109.75L9229.1 337H9379.84zM335 109.75L9530.59 337H9681.34zM335 109.75L9832.09 337H9982.83zM335 109.75L10133.58 337H10284.33zM335 109.75L10435.08 337H10585.82zM335 109.75L10736.57 337H10887.32z"/></g><rect x="0" y="109" width="670" height="1" fill="url(#L0)"/><rect x="0" y="110" width="670" height="1" fill="url(#L1)"/><rect x="0" y="111" width="670" height="1" fill="url(#L2)"/><rect x="0" y="112" width="670" height="1" fill="url(#L3)"/><rect x="0" y="113" width="670" height="1" fill="url(#L4)"/><rect x="0" y="114" width="670" height="1" fill="url(#L5)"/><rect x="0" y="115" width="670" height="1" fill="url(#L6)"/><rect x="0" y="116" width="670" height="1" fill="url(#L7)"/><rect x="0" y="117" width="670" height="1" fill="url(#L8)"/><rect x="0" y="118" width="670" height="1" fill="url(#L9)"/><rect x="0" y="119" width="670" height="1" fill="url(#L10)"/><rect x="0" y="120" width="670" height="1" fill="url(#L11)"/><rect x="0" y="121" width="670" height="1" fill="url(#L12)"/><rect x="0" y="122" width="670" height="1" fill="url(#L13)"/><rect x="0" y="123" width="670" height="1" fill="url(#L14)"/><rect x="0" y="124" width="670" height="1" fill="url(#L15)"/><rect x="0" y="125" width="670" height="1" fill="url(#L16)"/><rect x="0" y="126" width="670" height="1" fill="url(#L17)"/><rect x="0" y="127" width="670" height="1" fill="url(#L18)"/><rect x="0" y="128" width="670" height="1" fill="url(#L19)"/><rect x="0" y="129" width="670" height="1" fill="url(#L20)"/><rect x="0" y="130" width="670" height="1" fill="url(#L21)"/><rect x="0" y="131" width="670" height="1" fill="url(#L22)"/><rect x="0" y="132" width="670" height="1" fill="url(#L23)"/><rect x="0" y="133" width="670" height="1" fill="url(#L24)"/><rect x="0" y="134" width="670" height="1" fill="url(#L25)"/><rect x="0" y="135" width="670" height="1" fill="url(#L26)"/><rect x="0" y="136" width="670" height="1" fill="url(#L27)"/><rect x="0" y="137" width="670" height="1" fill="url(#L28)"/><rect x="0" y="138" width="670" height="1" fill="url(#L29)"/><rect x="0" y="139" width="670" height="2" fill="url(#L30)"/><rect x="0" y="141" width="670" height="2" fill="url(#L31)"/><rect x="0" y="143" width="670" height="2" fill="url(#L32)"/><rect x="0" y="145" width="670" height="2" fill="url(#L33)"/><rect x="0" y="147" width="670" height="2" fill="url(#L34)"/><rect x="0" y="149" width="670" height="2" fill="url(#L35)"/><rect x="0" y="151" width="670" height="2" fill="url(#L36)"/><rect x="0" y="153" width="670" height="2" fill="url(#L37)"/><rect x="0" y="155" width="670" height="2" fill="url(#L38)"/><rect x="0" y="157" width="670" height="3" fill="url(#L39)"/><rect x="0" y="160" width="670" height="3" fill="url(#L40)"/><rect x="0" y="163" width="670" height="3" fill="url(#L41)"/><rect x="0" y="166" width="670" height="3" fill="url(#L42)"/><rect x="0" y="169" width="670" height="4" fill="url(#L43)"/><rect x="0" y="173" width="670" height="4" fill="url(#L44)"/><rect x="0" y="177" width="670" height="4" fill="url(#L45)"/><rect x="0" y="181" width="670" height="5" fill="url(#L46)"/><rect x="0" y="186" width="670" height="5" fill="url(#L47)"/><rect x="0" y="191" width="670" height="6" fill="url(#L48)"/><rect x="0" y="197" width="670" height="7" fill="url(#L49)"/><rect x="0" y="204" width="670" height="8" fill="url(#L50)"/><rect x="0" y="212" width="670" height="9" fill="url(#L51)"/><rect x="0" y="221" width="670" height="11" fill="url(#L52)"/><rect x="0" y="232" width="670" height="12" fill="url(#L53)"/><rect x="0" y="244" width="670" height="12" fill="url(#L54)"/><rect x="0" y="256" width="670" height="12" fill="url(#L55)"/><rect x="0" y="268" width="670" height="12" fill="url(#L56)"/><rect x="0" y="280" width="670" height="12" fill="url(#L57)"/><rect x="0" y="292" width="670" height="12" fill="url(#L58)"/><rect x="0" y="304" width="670" height="12" fill="url(#L59)"/><rect x="0" y="316" width="670" height="12" fill="url(#L60)"/><rect x="0" y="328" width="670" height="7" fill="url(#L61)"/><path d="M242.5 260.6l0-1.5 0.3-1.5 0.6-1.5 1-1.5 1.2-1.5 1.5-1.5 4.1-3.2 5.3-3.3 6.5-3.2 7.5-3.3 8-3 9.9-3.2 10.3-3 10.7-2.8 11.8-2.7 12.1-2.5 12.8-2.4 13-2 13.3-1.9 13-1.5 13.1-1.2 12.9-1 12.2-0.6 12-0.3 11.5 0 10.8 0.3 10 0.7 8.7 0.9 8.3 1.2 7 1.5 6.2 1.9 4.9 2.1 1.8 1 1.7 1.3 1.3 1.2 1 1.3 0.7 1.2 0.4 1.5 0 1.5-0.3 1.5-0.7 1.5-0.9 1.5-1.3 1.5-1.5 1.5-4.1 3.3-5.3 3.2-6.4 3.3-7.5 3.2-8.3 3.1-9.5 3.1-10.2 3-11 2.9-11.8 2.7-12.2 2.5-12.8 2.3-13 2.1-13 1.8-13 1.5-13 1.2-13 1-12.5 0.6-12 0.3-11.5 0-10.7-0.3-10-0.6-9-1-8.3-1.3-7-1.5-6-1.8-4.7-2.1-1.8-1-1.7-1.2-1.4-1.3-0.9-1.2-0.7-1.3z" fill="#000" fill-opacity="0.83"/><path d="M492.1 288.1l0.1-2.2 0.9-2.5 1.7-2.5 2.6-2.5 3.3-2.5 3.8-2.3 4.5-2.2 4.8-2 5.6-2 6.5-2 6.5-1.7 7-1.5 7.3-1.3 7.7-1.2 7.7-0.9 8-0.7 8-0.4 7.8-0.2 7.7 0 7.5 0.3 7.3 0.5 6.7 0.7 6.5 1 6 1.1 5.5 1.4 4.9 1.6 4.3 1.8 3.6 1.9 2.8 2.1 2.1 2.2 1.3 2.3 0.6 2.2-0.2 2.3-1 2.5-1.7 2.5-2.6 2.5-3.1 2.3-4 2.4-4.5 2.2-5 2.1-5.7 2-6.3 1.9-6.5 1.6-7 1.5-7.5 1.4-7.5 1.1-7.7 0.9-7.8 0.7-7.7 0.4-7.8 0.2-7.7 0-7.5-0.2-7.3-0.5-6.7-0.8-6.5-0.9-6-1.2-5.5-1.4-4.8-1.5-4.3-1.7-3.7-2-2.9-2-2.2-2.3-1.3-2.2z" fill="#000" fill-opacity="0.83"/><path d="M119.3 309.1l0.1-1.5 0.6-1.5 1.2-1.5 1.9-1.7 2.4-1.8 2.9-1.7 3.4-1.8 4.4-2 9.7-3.7 10.7-3.4 12-3.1 12.5-2.7 12.5-2.1 12.3-1.6 11.5-0.8 10-0.1 4.2 0.2 4 0.3 3.5 0.6 3 0.7 2.5 1 1.7 1 1.2 1.2 0.5 1.3-0.1 1.5-0.7 1.5-1.2 1.5-1.9 1.7-2.5 1.8-2.9 1.7-3.6 1.9-4.2 1.9-9.3 3.6-11 3.4-12 3.2-12.5 2.6-12.5 2.2-12.2 1.5-11.3 0.8-10 0.2-8.2-0.6-3.5-0.5-3-0.7-2.5-1-1.8-1-1.2-1.2z" fill="#000" fill-opacity="0.85"/><clipPath id="S0"><path d="M285.62 268.36l-5.24 0.09-5.26-0.16-5.24-0.42-5.26-0.68-5.24-0.95-5.01-1.15-4.99-1.42-5.01-1.68-4.77-1.86-4.73-2.12-4.69-2.39-4.55-2.59-4.51-2.88-4.24-3.02-4.15-3.26-3.85-3.35-3.76-3.59-3.6-3.8-3.43-4.01-3.21-4.14-3.01-4.28-2.72-4.32-2.53-4.51-2.38-4.74-2.12-4.8-1.89-4.96-1.63-4.99-1.36-5.01-1.1-4.99-0.9-5.26-0.59-4.99-0.38-5.26-0.11-5.24 0.15-5.26 0.42-5.24 0.64-5.01 0.93-5.24 1.15-5.01 1.4-4.99 1.68-5.01 1.85-4.75 2.13-4.75 2.42-4.75 2.58-4.5 2.87-4.47 2.99-4.21 3.26-4.12 3.44-3.94 3.55-3.7 3.78-3.56 3.98-3.39 4.24-3.28 4.26-2.96 4.49-2.81 4.57-2.56 4.68-2.32 4.76-2.07 4.99-1.9 5.01-1.62 4.99-1.35 5.01-1.1 5.24-0.89 5.26-0.62 5.24-0.36 5.26-0.1 5.24 0.15 5.26 0.42 4.99 0.63 5.26 0.93 4.99 1.14 5.01 1.39 5.04 1.67 4.95 1.93 4.76 2.12 4.74 2.4 4.51 2.56 4.49 2.87 4.26 3.01 3.99 3.13 4.04 3.49 3.91 3.75 3.55 3.75 3.43 4 3.11 4 2.99 4.25 2.83 4.5 2.54 4.5 2.38 4.75 2.09 4.75 1.89 4.91 1.65 5.08 1.35 4.92 1.12 5.09 0.89 5.24 0.6 5.01 0.37 5.24 0.11 5.26-0.15 5.24-0.41 5.26-0.64 4.99-0.94 5.26-1.14 4.99-1.41 5.01-1.68 4.99-1.85 4.76-2.13 4.74-2.42 4.76-2.58 4.49-2.88 4.51-3.04 4.24-3.16 4.01-3.49 3.99-3.61 3.76-3.82 3.59-3.99 3.4-4.23 3.26-4.27 2.96-4.51 2.81-4.49 2.5-4.76 2.35-4.74 2.07-5.01 1.89-4.99 1.61-5.01 1.35-4.99 1.09-5.26 0.88-5.24 0.61z"/></clipPath><g clip-path="url(#S0)"><rect x="164" y="44" width="237" height="237" fill="#031a0d"/><path d="M164.1 280.9l-0.1-236.8 236.9 0 0 3-12.8 8.1-12.2 8.6-12 9.1-11.8 9.7 0 0.3 2.8 2.7 2.5 3 1.9 2.8 1.8 3 1.8 3.5 1.3 3.2 1.2 3.8 1 4 0.8 4 0.5 4.2 0.3 4.5 0.1 4.5-0.7 9.3-1.6 9.7-2.6 10-3.5 10.3-4.3 10-5.2 10-6 9.7-6.6 9.3-7.2 8.9-7.8 8.3-6.3 6-6.4 5.5-6.7 5-6.6 4.5-6.7 4-6.8 3.4-6.8 2.9-6.7 2.3-6.7 1.7-6.3 1-6.2 0.5-6.3-0.2-5.7-0.8-5.3-1.3-5.1-2-5.2-2.7-6.8 14.7-6 14.8z" fill="#031b0d"/><path d="M164.1 280.9l-0.1-236.8 236.9 0 0 0.6-14.3 9.4-13.7 9.9-11 8.7-10.8 9.1 3.4 3.6 2.1 2.5 2 2.7 1.8 3 1.6 3.3 1.5 3.5 1.3 3.7 0.9 3.8 0.8 4 0.6 4.2 0.3 4.5 0 4.5-0.2 4.8-0.4 4.7-1.6 9.8-2.6 10.1-3.5 10.1-4.3 10-5.2 10-6 9.8-6.7 9.5-7.3 9-7.7 8.3-6.3 5.9-6.5 5.5-6.5 5-6.7 4.5-6.8 4-6.9 3.5-6.8 2.9-6.8 2.3-6.5 1.6-6.5 1.1-6.2 0.4-6-0.1-5.8-0.8-5.3-1.4-4.5-1.7-5.7-3-0.5 0-7.1 15-6.3 15z" fill="#031d0f"/><path d="M164.1 280.9l-0.1-236.8 232.6 0-12.2 8.4-12 9-11.5 9.4-11.1 9.7 0.3 0.5 3.1 3 2.1 2.5 2.1 2.8 1.7 2.7 1.7 3.3 1.5 3.5 1.3 3.7 1.1 3.8 0.8 4 0.6 4.2 0.3 4.5 0.1 4.5-0.5 9.3-1.5 9.7-2.5 10-3.3 10-4.3 10.2-5 9.8-5.9 9.8-6.6 9.5-7.3 9.1-7.7 8.4-6.3 6.1-6.5 5.6-6.7 5.2-6.8 4.7-6.9 4.1-6.9 3.5-6.9 3-7 2.4-6.8 1.8-6.5 1-6.2 0.5-6.3-0.2-5.5-0.8-5.5-1.4-4.5-1.8-3-1.5-3-1.8-0.5 0-7.5 15.3-7 15.8z" fill="#031f10"/><path d="M164.1 280.9l-0.1-236.8 227.7 0-11.3 8.3-11 8.6-10.8 9.2-10.2 9.3 5.2 5.4 2.3 2.9 2 3 1.7 3.2 1.5 3.4 1.3 3.5 1.2 4 0.8 4 0.7 4 0.4 4.2 0.1 4.5-0.4 9.3-1.4 9.5-2.3 10-3.2 10-4.2 10.1-5 10-5.7 9.8-6.5 9.6-7.1 9-7.6 8.5-6.4 6.2-6.8 6-6.9 5.5-6.9 4.8-7.1 4.2-7.2 3.8-7 3-7 2.4-7 1.8-6.5 1.1-6.5 0.4-6.3-0.2-6-1-5.5-1.5-5.2-2.3-5.2-3-8.2 16-7.5 16.3z" fill="#032211"/><path d="M164.1 280.9l-0.1-236.8 223 0-10.4 8.1-10.2 8.4-9.8 8.7-9.6 9.1 0.6 0.7 2.5 2.3 2.6 2.7 2.2 2.8 1.6 2.5 1.9 3.2 1.5 3.3 1.3 3.5 1.2 3.7 0.9 4 0.7 4 0.4 4.3 0.3 4.5-0.1 4.5-0.3 4.7-1.2 9.5-2.2 9.8-3.2 10-4 10-4.8 10-5.6 9.7-6.4 9.6-7 9.1-7.6 8.6-6.4 6.5-6.8 6.1-7 5.6-7 4.9-7.2 4.5-7.3 3.8-7 3.1-7.2 2.6-7.3 1.9-6.7 1.1-6.8 0.4-6.2-0.3-6-0.9-5.4-1.6-5.2-2.2-4.9-3.1-0.7-0.2-8.9 16.5-8 16.8z" fill="#042412"/><path d="M164.1 280.9l-0.1-236.8 218.7 0-9.6 7.8-9.5 8.2-9.2 8.6-8.9 8.7 5.4 5 2.3 2.7 1.9 2.8 1.8 3 1.7 3.5 1.4 3.5 1.2 3.7 1 4 0.7 4 0.5 4.3 0.3 4.2-0.2 9-1.2 9.5-2.1 9.8-3 10-3.8 9.8-4.8 10-5.5 9.8-6.2 9.5-6.9 9.1-7.5 8.8-5.4 5.5-5.7 5.4-5.9 5.1-5.9 4.5-6 4.2-6.2 3.8-6.3 3.4-6.2 2.9-8.4 3.2-8.4 2.2-8 1.3-4 0.3-3.7 0-3.8-0.3-3.5-0.4-3.2-0.7-3.5-0.9-3.4-1.3-2.7-1.2-6.4-3.8-3.4 5.5-5.6 10.3-4.8 9.2-4.5 9.3z" fill="#042613"/><path d="M164.1 280.9l-0.1-236.8 214.6 0-9 7.6-8.7 8-8.5 8.1-8.3 8.5 5.6 5.1 2.1 2.5 2 2.7 1.9 3 1.7 3.4 1.5 3.6 1.2 3.5 0.9 3.8 0.8 4 0.6 4.2 0.3 4.3-0.1 9-1.1 9.2-2 9.8-2.9 9.9-3.7 9.9-4.6 9.9-5.4 9.8-6.3 9.7-6.7 9.1-7.3 8.7-5.5 5.7-5.7 5.5-5.7 5-6.1 4.8-6 4.2-6.3 4-6.3 3.5-6.3 3-8.8 3.4-8.5 2.3-4.3 0.8-4 0.5-4 0.3-4 0-3.7-0.2-3.8-0.5-3.6-0.8-3.4-1-5.8-2.5-6.5-4-5 8.5-5.1 9-4.8 9-4.6 9z" fill="#042914"/><path d="M164.1 280.9l-0.1-236.8 210.6 0-8.2 7.4-8.3 7.8-7.7 7.8-7.8 8.2 3.5 2.8 2.1 2 2.2 2.5 2.1 2.8 1.9 3 1.7 3.2 1.5 3.5 1.3 3.5 1 3.8 0.8 4 0.6 4.2 0.3 4.3 0.1 4.5-0.1 4.5-1 9.2-1.9 9.8-2.8 9.7-3.7 10-4.5 9.8-5.3 9.7-6 9.6-6.7 9.2-7.3 8.7-5.5 5.9-5.8 5.6-5.7 5.1-6 4.8-6.1 4.4-6.3 4-6.2 3.5-6.2 3-8.7 3.5-8.8 2.5-4.2 0.8-4.3 0.6-4.2 0.3-4 0.1-4-0.3-3.8-0.5-3.6-0.8-3.3-1-3.2-1.2-3.1-1.5-2.9-1.8-2.9-2-0.7-0.3-5.6 9.1-5.3 9-5 9-5 9.5z" fill="#042b16"/><path d="M164.1 280.9l-0.1-236.8 206.9 0-7.8 7.3-7.5 7.4-7.2 7.6-7.1 7.7 0.3 0.5 3.1 2.5 2.4 2.3 2.3 2.5 1.9 2.5 1.8 2.7 1.8 3.3 1.4 3.2 1.3 3.6 1.1 3.7 0.9 4 0.6 4 0.4 4.2 0 8.8-0.8 9.2-1.9 9.8-2.7 9.7-3.6 10-4.3 9.8-5.2 9.7-5.9 9.5-6.7 9.3-7.1 8.7-6.7 7.3-7.1 6.7-7.3 6.3-7.4 5.6-7.6 4.9-7.7 4.3-7.7 3.6-7.8 2.9-7.5 2-7.2 1.3-7 0.4-6.8-0.3-6.5-1.2-5.9-2-5.1-2.5-3-2-2-1.6-0.6-0.2-6 9.3-5.6 9.2-5.4 9.5-5.3 9.8z" fill="#052d17"/><path d="M164.1 280.9l-0.1-236.8 203.3 0-7.2 7-7 7.2-6.7 7.4-6.6 7.4 0.3 0.5 3.3 2.5 2.4 2.3 2.1 2.2 2 2.5 2 3 1.7 3 1.5 3.3 1.3 3.5 1.1 3.7 0.9 3.8 0.6 4 0.5 4.2 0.1 8.8-0.7 9-1.7 9.5-2.6 9.5-3.5 10-4.2 9.8-5.2 9.9-5.8 9.5-6.5 9.3-7 8.7-6.9 7.5-7.1 7-7.3 6.3-7.7 5.8-7.8 5.2-8 4.5-7.7 3.6-7.8 2.8-7.5 2.1-7.5 1.3-7.2 0.4-6.8-0.4-6.5-1.3-5.9-2-4.8-2.5-5.7-4-6.2 9.2-6.2 9.8-5.8 9.7-5.7 10.3z" fill="#053018"/><path d="M164.1 280.9l0-236.8 199.7 0-13.2 13.9-12.2 14.1-0.1 0.3 3.3 2.5 2.9 2.5 2.1 2.2 2 2.5 1.9 2.8 1.8 3 1.5 3.2 1.3 3.3 1.2 3.7 0.9 3.8 0.7 4 0.5 4 0.2 4.2 0 4.5-0.7 9-1.5 9.3-2.5 9.7-3.5 10-4.1 9.8-5 9.7-5.7 9.5-6.4 9.3-6.9 8.7-6.9 7.7-7.2 7.1-7.4 6.5-7.7 6-7.9 5.2-7.8 4.5-8 3.8-8 3-7.8 2.2-7.5 1.3-7.2 0.4-7-0.5-6.5-1.3-6-2.1-3-1.5-2.5-1.5-5-3.8-6.8 9.8-6.5 10-6.3 10.2-6 10.3z" fill="#053219"/><path d="M164.1 280.9l0-236.8 196.4 0-12.4 13.6-11.4 13.7 3.8 2.7 2.8 2.5 2.8 3 2.3 3 2.2 3.5 1.9 3.8 1.6 4 1.3 4.2 1 4.5 0.7 4.8 0.4 5 0 5-0.2 5.2-0.6 5.5-0.9 5.5-1.3 5.8-2.1 7.7-2.8 8-3.3 8-3.9 8.1-4.4 7.9-4.9 7.7-5.3 7.6-5.7 7.2-6.8 7.8-7.2 7.2-7.5 6.8-8 6.2-8 5.4-8 4.6-8 3.8-8 3.1-7.7 2.2-7.8 1.3-7.5 0.4-7-0.4-6.5-1.4-3-1-3-1.2-3-1.5-2.4-1.5-5.2-4-7.1 10-7 10.2-6.7 10.5-6.4 10.8z" fill="#05351a"/><path d="M164.1 280.9l0-236.8 193.1 0-11.3 13-10.7 13.3 0.2 0.2 4.2 3 2.3 2 2.7 2.8 2.4 3 2.1 3.2 2 3.8 1.6 3.7 1.4 4.3 1 4.5 0.8 4.5 0.4 5 0.2 5-0.2 5.2-0.5 5.3-0.8 5.2-1.1 5.6-2.1 7.9-2.7 8-3.2 8.1-3.9 8.2-4.3 8-4.8 7.8-5.3 7.7-5.7 7.3-6.9 7.9-7.3 7.5-7.6 6.9-8 6.3-8.2 5.6-8 4.7-8.3 4-8 3-8 2.2-7.5 1.3-7.5 0.5-7-0.5-6.2-1.3-3-1-3-1.2-3-1.5-2.5-1.5-5.8-4.3-7.5 10.1-7.3 10.5-7.3 11-6.7 11z" fill="#05371b"/><path d="M164.1 280.9l0-236.8 190 0-11 13.1-9.5 12.4 3.5 2.3 2.8 2.2 2.8 2.8 2.6 3 2.4 3.5 1.9 3.5 1.7 3.7 1.4 4 1.1 4.3 0.8 4.5 0.5 4.7 0.2 5 0 5-0.5 5.3-0.6 5.2-1.1 5.5-1.9 8-2.6 8-3.2 8.3-3.8 8.2-4.2 8-4.9 8-5.2 7.8-5.7 7.4-6.9 8.1-7.3 7.6-7.8 7.1-7.9 6.3-8.1 5.6-8.2 4.9-8.3 4-8.2 3.2-8 2.3-8 1.4-7.5 0.4-7-0.5-3.5-0.7-3.3-0.8-3-1-3-1.3-2.8-1.5-2.7-1.8-5.2-4.2-8.1 10.5-7.7 10.7-7.7 11.3-7.3 11.5z" fill="#06391d"/><path d="M164.1 280.9l0-236.8 187 0-9.7 12.1-9.3 12.4 4 2.8 2.6 2 2.6 2.5 2.6 3 2.3 3.2 1.9 3.3 1.7 3.7 1.5 4 1.2 4.3 0.9 4.5 0.5 4.5 0.3 4.7 0 5-0.3 5-0.7 5.3-0.9 5.2-1.8 8-2.5 8.3-3.1 8.2-3.7 8.3-4.3 8.2-4.8 8-5.1 7.8-5.6 7.4-7 8.3-7.4 7.8-7.8 7.2-8.1 6.5-8.2 5.8-8.4 5-8.4 4.1-8.2 3.2-8.3 2.3-7.7 1.4-7.5 0.4-3.8-0.2-3.5-0.4-3.2-0.6-3.3-0.8-3.2-1.2-2.9-1.2-5.1-3.1-5.8-4.7-8.6 10.8-8.4 11.2-8 11.5-7.7 11.8z" fill="#063c1e"/><path d="M164.1 280.9l0-236.8 184 0-9 11.7-8.6 12.1 3.6 2.2 2.7 2 2.8 2.5 2.5 2.8 2.3 3 2.1 3.5 1.9 3.7 1.4 3.8 1.2 4 1 4.2 0.6 4.5 0.4 4.8 0.1 4.7-0.3 5-0.5 5.3-0.8 5.2-1.7 8-2.4 8.3-3 8.2-3.6 8.3-4.2 8.2-4.7 8.2-5.1 7.8-5.7 7.7-7 8.5-7.4 7.8-7.8 7.4-8.1 6.6-8.4 6-8.4 5-8.5 4.3-8.4 3.3-8.2 2.4-8 1.4-7.5 0.4-3.8-0.2-3.5-0.4-3.5-0.7-3-0.8-3.2-1.1-3-1.4-2.8-1.5-2.5-1.7-5.7-4.8-9.2 11.1-8.8 11.5-8.5 11.7-8.3 12.3z" fill="#063e1f"/><path d="M164.1 280.9l0-236.8 181.2 0-8.9 12-7.5 11 3.4 2 2.9 2 2.9 2.5 2.5 2.8 2.4 3 2 3.2 1.8 3.5 1.6 3.8 1.2 4 1 4.2 0.8 4.5 0.4 4.5 0.1 4.8-0.1 4.7-0.5 5-0.7 5.3-1.6 8-2.3 8.2-2.9 8.3-3.5 8.2-4.2 8.4-4.6 8.1-5.1 8-5.6 7.8-7.2 8.7-7.4 8-7.9 7.5-8.2 6.8-8.4 6-8.6 5.2-8.5 4.3-8.5 3.3-8.2 2.4-8 1.4-4 0.3-3.8 0.1-3.7-0.2-3.5-0.4-3.5-0.7-3.5-1-3.3-1.2-2.7-1.3-3-1.7-2.5-1.8-5.3-4.6-9.5 11.1-9.2 11.5-8.4 11.3z" fill="#064020"/><path d="M164.1 276.1l0-232 178.4 0-7.9 11.1-7.3 10.9 0.1 0.3 3.5 2 3.2 2.2 2.6 2.3 2.7 2.7 2.1 2.8 2.2 3.2 1.7 3.3 1.6 3.7 1.3 4 1 4 0.8 4.5 0.4 4.5 0.2 4.8-0.1 4.7-0.4 5-0.6 5-1.7 8.3-2.2 8.2-3 8.5-3.6 8.5-4.2 8.5-4.6 8.3-5.2 8-5.7 7.9-7.1 8.6-7.4 8-8 7.5-8.2 6.7-8.4 6-8.7 5.3-8.5 4.2-8.5 3.3-8.2 2.4-8 1.3-4 0.3-3.8 0-3.7-0.2-3.5-0.5-3.3-0.6-3.3-1-3.2-1.2-3-1.5-2.7-1.6-2.5-1.8-2.3-1.9-3-3-0.2 0-9.3 10.5-9.1 11-8.8 11.3z" fill="#074321"/><path d="M164.1 271.5l0-227.4 175.6 0-7.1 10.4-6.9 10.9 0.1 0.2 4.1 2.3 2.5 1.7 2.7 2.3 2.5 2.5 2.3 2.7 2.2 3.3 1.8 3.2 1.7 3.8 1.3 3.7 1.1 4.3 0.8 4.2 0.5 4.5 0.2 4.8-0.1 4.7-0.3 5-0.6 5-1.6 8.3-2.3 8.5-3 8.6-3.6 8.6-4.2 8.5-4.8 8.5-5.4 8.3-5.7 7.9-7.1 8.6-7.5 8-8 7.5-8.3 6.7-8.4 5.9-8.5 5.1-8.6 4.3-8.5 3.2-8.4 2.3-8 1.3-3.7 0.2-3.8 0-3.7-0.2-3.5-0.5-3.5-0.8-3.3-1-3-1.3-3-1.5-2.7-1.7-2.8-2.1-4.8-4.7-8.9 9.8-8.9 10.2-8.6 10.5z" fill="#074522"/><path d="M164.1 267l0-222.9 173 0-6.7 10.2-6.4 10.3 0.1 0.3 3.8 2 3.1 2 2.5 2 2.6 2.5 2.3 2.7 2.3 3.3 1.8 3.2 1.6 3.5 1.4 3.8 1.1 4 0.8 4.2 0.6 4.5 0.2 4.5 0 4.8-0.3 5-0.5 5-1.6 8.5-2.2 8.5-3 8.7-3.6 8.8-4.3 8.7-4.9 8.5-5.4 8.4-5.9 8.1-7.1 8.5-7.5 8-8 7.5-8.3 6.8-8.5 5.9-8.5 5.1-8.7 4.2-8.5 3.2-8.3 2.2-4 0.7-4 0.5-3.7 0.2-3.8 0-3.7-0.3-3.5-0.6-3.5-0.8-3.3-1.1-3-1.2-2.7-1.5-2.8-1.8-2.2-1.7-2.3-2-3-3.2-8.7 9.2-8.3 9.2-8.3 9.8z" fill="#074724"/><path d="M164.1 262.8l0-218.7 170.3 0-7.2 11.5-4.8 8.5 4 2 2.7 1.8 3 2.2 2.3 2.3 2.5 2.7 2.1 3 2 3.3 1.6 3.5 1.4 3.7 1.2 4 0.9 4.3 0.6 4.2 0.3 4.5 0 4.8-0.3 5-0.5 5-1.5 8.5-2.3 8.7-2.9 8.8-3.6 8.7-4.3 8.8-5 8.8-5.4 8.4-6.1 8.3-7.1 8.5-7.6 8.1-8 7.4-8.3 6.7-8.5 5.9-8.5 5-8.5 4.2-8.5 3.2-8.2 2.1-4 0.7-4 0.5-3.8 0.2-3.7 0-3.8-0.4-3.5-0.5-3.2-0.8-3.3-1.1-3.2-1.4-2.8-1.5-2.7-1.9-2.3-1.8-3-2.9-1.7-2-0.5-0.2-8.1 8.2-8.2 8.8-8 9z" fill="#074a25"/><path d="M164.1 258.7l0-214.6 167.7 0-5.9 10-5.3 9.3 3.7 1.7 2.9 1.8 2.8 2 2.8 2.5 2.3 2.5 2.3 3 2 3.2 1.7 3.5 1.5 3.8 1.1 3.7 1 4.3 0.6 4.2 0.4 4.5 0 4.8-0.2 4.7-0.4 5-1.5 8.5-2.2 8.8-2.9 9-3.7 9-4.4 9-4.9 8.7-5.6 8.7-6.2 8.3-5.8 7.1-6.1 6.7-6.4 6.3-6.8 5.9-7 5.5-6.9 4.8-7.1 4.2-7 3.6-5 2.2-5 1.9-5 1.5-4.7 1.2-4.8 0.8-4.7 0.5-4.5 0-4.3-0.2-4-0.6-4-1-3.7-1.3-3.5-1.7-3.3-1.9-3-2.3-2.2-2.1-3.6-3.8-7.9 7.7-8 8.3-7.7 8.2z" fill="#084c26"/><path d="M164.1 254.8l0-210.7 165.2 0-5.4 9.5-5 9 4.1 2 2.6 1.5 2.9 2 2.8 2.5 2.6 2.8 2.1 2.7 1.9 3 1.8 3.5 1.4 3.6 1.3 3.9 0.9 4 0.7 4.3 0.3 4.5 0.2 4.5-0.2 4.7-0.4 5-1.5 8.8-2.1 8.7-3 9-3.7 9.2-4.4 9.1-5.1 8.9-5.7 8.8-6.1 8.3-5.9 7.2-6.3 6.8-6.7 6.5-6.9 6-7.1 5.5-7 4.7-7.3 4.2-7.1 3.6-4.9 2-5 1.8-4.7 1.4-4.8 1.1-4.7 0.7-4.5 0.3-4.3 0-4.2-0.3-4-0.7-4-1-3.5-1.4-3.5-1.7-3-1.9-3-2.4-2.3-2.1-3.2-3.8-0.2 0-7.7 7.2-7.5 7.5-7.5 7.8z" fill="#084e27"/><path d="M164.1 251.1l0-207 162.7 0-9.5 17.8 0 0.2 4 1.8 3.1 1.7 2.8 2 2.6 2.3 2.4 2.5 2.2 2.7 2 3 1.8 3.5 1.5 3.5 1.3 4 0.9 4 0.7 4.3 0.4 4.5 0.2 4.5-0.2 4.7-0.4 4.8-1.3 8.5-2.2 9-3 9.1-3.7 9.3-4.4 9.1-5.1 9-5.7 8.7-6.3 8.5-6 7.3-6.5 7-6.8 6.5-6.9 6-7.3 5.5-7.1 4.7-7.4 4.3-7.3 3.5-4.7 1.9-4.8 1.6-4.7 1.3-4.8 1-4.5 0.7-4.5 0.3-4.2-0.1-4.3-0.4-4-0.8-3.7-1-3.8-1.5-3.2-1.8-3-2-2.8-2.2-2.2-2.3-3.3-3.7-14.7 13.7z" fill="#085128"/><path d="M164.1 247.5l0-203.4 160.2 0-8.8 17.3 4.4 2 2.8 1.5 2.9 2 2.4 2 2.5 2.5 2.3 2.7 2 3 1.8 3.3 1.5 3.5 1.3 3.7 1 4 0.8 4.3 0.4 4.5 0.2 4.5-0.1 4.7-0.3 4.8-1.4 8.7-2.1 9-2.9 9-3.7 9.3-4.4 9.2-5.1 9-5.9 9-6.3 8.6-6.2 7.4-6.5 7-6.8 6.5-7.2 6.2-7.3 5.5-7.4 4.8-7.6 4.3-7.2 3.4-4.8 1.8-5 1.6-4.7 1.3-4.5 0.8-4.5 0.6-4.3 0.2-4.2-0.2-4-0.4-4-0.9-3.8-1.2-3.5-1.5-3.2-1.8-3-2.1-2.8-2.4-2.2-2.4-2.8-3.4-14 12.6z" fill="#08532a"/><path d="M164.1 244l0-199.9 157.8 0-8.2 16.8 3.7 1.5 3 1.5 3.2 2 2.6 2 2.6 2.5 2.3 2.7 2.1 3 1.8 3.3 1.6 3.5 1.3 3.7 1.1 4 0.7 4 0.5 4.3 0.3 4.5-0.1 4.7-0.3 4.8-1.3 8.7-2.1 9-2.9 9.3-3.7 9.2-4.4 9.3-5.2 9.2-5.8 9-6.5 8.8-6.3 7.5-6.5 7-7 6.7-7.3 6.1-7.5 5.6-7.5 4.8-7.5 4.1-7.5 3.4-4.7 1.8-4.8 1.5-4.7 1.1-4.5 0.8-4.5 0.5-4.3 0.1-4-0.2-4-0.5-3.7-0.9-3.6-1.2-3.4-1.5-3.3-1.9-2.7-2-2.8-2.5-2.2-2.4-2.8-3.6-13.5 11.7z" fill="#09552b"/><path d="M164.1 240.6l0-196.5 155.4 0-7.5 16 0 0.3 3.4 1.2 3.2 1.5 3.3 2 2.6 2 2.5 2.3 2.4 2.7 2.2 3 1.9 3.3 1.6 3.5 1.3 3.5 1.1 4 0.8 4 0.5 4.2 0.3 4.5 0 4.8-0.3 4.7-1.3 8.8-2 9-2.9 9.2-3.8 9.5-4.4 9.3-5.3 9.4-5.7 8.8-6.5 8.8-6.3 7.5-6.8 7.2-7.1 6.8-7.3 6.1-7.5 5.6-7.6 4.8-7.7 4.1-7.5 3.4-4.7 1.7-4.8 1.4-4.5 1-4.5 0.8-4.2 0.4-4.3 0-4-0.2-4-0.6-3.7-0.9-3.5-1.3-3.4-1.6-3.1-1.8-2.8-2.1-2.5-2.3-2.2-2.6-2.5-3.2 0-0.2-0.4-0.3-13.1 11z" fill="#09582c"/><path d="M164.1 237.3l0-193.2 153 0-6.9 15.5 0.1 0.3 4.1 1.5 3.2 1.5 2.9 1.7 2.6 2 2.5 2.3 2.3 2.5 2 2.7 2 3.3 1.6 3.5 1.4 3.5 1.1 4 0.8 4 0.6 4.2 0.3 4.5 0 4.5-0.3 4.8-1.2 8.7-2 9.3-2.9 9.2-3.8 9.5-4.5 9.5-5.3 9.3-5.8 9-6.5 8.7-6.5 7.8-6.8 7.1-7 6.6-7.5 6.3-7.6 5.5-7.6 4.8-7.8 4.1-7.7 3.3-4.8 1.7-4.5 1.3-4.5 0.9-4.5 0.7-4.2 0.3-4.3 0-4-0.3-3.7-0.7-3.8-1-3.5-1.3-3.2-1.7-3-1.9-2.8-2.2-2.5-2.5-2.5-3-2-2.9-12.6 10.1z" fill="#095a2d"/><path d="M164.1 234.1l0-190 150.6 0-4.1 9.5-2.2 5.8 0.7 0.1 6 2.4 3.1 1.7 2.9 2 2.6 2.3 2.4 2.5 2.3 3 1.8 3 1.6 3.2 1.5 3.8 1.1 3.7 0.9 4 0.6 4.3 0.3 4.2 0.1 4.5-0.2 4.8-1.1 8.7-2.1 9.3-2.9 9.5-3.7 9.5-4.6 9.5-5.1 9.2-6 9.2-6.6 8.8-6.5 7.8-6.9 7.3-7.2 6.7-7.5 6.2-7.8 5.6-7.7 4.8-7.8 4-7.7 3.3-4.8 1.6-4.5 1.2-4.5 0.9-4.2 0.6-4.3 0.2-4 0-4-0.4-3.7-0.7-3.5-1.1-3.3-1.2-3.2-1.7-3-2-2.8-2.2-2.5-2.6-2.2-2.8-2.3-3.3-12 9.3z" fill="#095c2e"/><path d="M164.1 230.9l0-186.8 148.3 0-4.3 10.5-1.5 4.3 3.9 1.2 3 1.3 2.8 1.5 3 2 2.7 2.2 2.4 2.5 2.2 2.8 1.9 3 1.7 3.2 1.5 3.5 1.1 3.8 1 4 0.6 4.2 0.4 4.3 0.1 4.5-0.2 4.7-1.1 8.8-2 9.2-2.9 9.5-3.7 9.5-4.5 9.5-5.3 9.5-6 9.3-6.5 8.7-6.6 7.8-7.1 7.5-7.2 6.7-7.6 6.3-7.7 5.5-7.9 4.8-7.7 3.9-7.9 3.3-4.6 1.5-4.5 1.1-4.3 0.9-4.2 0.5-4.3 0.2-4-0.1-3.7-0.4-3.8-0.8-3.5-1-3.5-1.5-3-1.6-3-2.1-2.5-2.1-2.5-2.6-4.5-6.2-11.6 8.7z" fill="#095f2f"/><path d="M164.1 227.8l0-183.7 146 0-5.5 14.3 4.1 1.2 3.1 1.3 2.9 1.5 3.1 2 2.4 2 2.5 2.5 2.3 2.7 2 3 1.7 3.3 1.4 3.5 1.3 3.7 0.8 3.8 0.7 4.2 0.4 4.3 0.1 4.5-0.2 4.5-1 8.7-1.9 9.3-2.9 9.5-3.7 9.5-4.6 9.7-5.2 9.4-6 9.3-6.6 8.8-6.7 7.9-7 7.4-7.5 6.9-7.7 6.3-7.8 5.5-7.9 4.8-7.8 3.9-7.8 3.1-4.5 1.4-4.5 1.1-4.2 0.8-4.3 0.5-4 0.1-4-0.1-3.7-0.5-3.8-0.8-3.5-1.1-3.2-1.5-3-1.7-2.8-1.9-2.5-2.2-2.2-2.4-2.3-2.9-2.2-3.6-0.3 0-10.9 7.8z" fill="#0a6131"/><path d="M164.1 224.8l0-180.7 143.6 0-4.9 13.8 0.3 0.2 0.8 0.1 2.9 0.9 3.3 1.3 3 1.5 2.8 1.7 2.5 2 2.6 2.5 2.1 2.5 2.1 3 1.7 3 1.5 3.5 1.2 3.5 1 4 0.8 4.3 0.4 4.2 0.1 4.5-0.1 4.5-1 9-1.9 9.2-2.8 9.3-3.7 9.7-4.5 9.6-5.3 9.5-6 9.2-6.7 9-6.8 8-7 7.3-7.5 7-7.7 6.3-8 5.6-8 4.7-8 4-7.8 3-4.5 1.3-4.2 1-4.3 0.7-4.2 0.5-4 0.1-4-0.3-3.8-0.5-3.5-0.9-3.2-1.1-3.3-1.5-3-1.8-2.7-2-2.5-2.3-2.3-2.5-2-2.8-2.2-3.7-10.7 7.4z" fill="#0a6332"/><path d="M164.1 221.9l0-177.8 141.3 0-4.6 13.5 0.8 0.1 6 1.9 3.3 1.5 3 1.8 2.7 2 2.4 2.2 2.2 2.5 2.2 3 1.7 3 1.6 3.5 1.4 3.8 0.9 3.7 0.8 4 0.4 4.3 0.2 4.5-0.1 4.5-0.9 8.7-1.9 9.3-2.7 9.5-3.7 9.5-4.5 9.6-5.3 9.6-6 9.3-6.7 9-6.7 8-7.3 7.6-7.5 6.9-7.7 6.3-8 5.5-8 4.8-8 3.9-8 3-4.5 1.3-4.3 1-4.2 0.6-4 0.4-4 0-3.8-0.2-3.7-0.6-3.5-0.9-3.3-1.2-3-1.4-3-1.8-2.7-2.1-2.3-2.1-2.2-2.6-2.3-3.2-2-3.5-0.2 0-10.3 6.8z" fill="#0a6633"/><path d="M164.1 219l0-174.9 139 0-4.1 13 0.4 0.3 3.2 0.7 3.7 1.3 2.8 1.2 3.1 1.8 2.7 2 2.5 2.2 2.3 2.5 2 2.8 1.9 3.2 1.5 3.3 1.3 3.5 1 3.7 0.8 4 0.5 4.3 0.2 4.2-0.1 4.5-0.8 8.8-1.9 9.2-2.7 9.5-3.7 9.8-4.6 9.7-5.2 9.5-6 9.3-6.8 9.1-6.9 8.1-7.2 7.5-7.6 7-7.8 6.2-8 5.5-8 4.7-8 3.9-8 2.9-4.5 1.3-4.2 0.9-4.3 0.6-4 0.3-4-0.1-3.7-0.3-3.5-0.6-3.5-1-3.3-1.2-3-1.5-2.7-1.8-2.8-2.2-2.5-2.5-2-2.5-1.7-2.6-2-3.7-0.3-0.2-9.6 6.2z" fill="#0a6834"/><path d="M164.1 216.1l0-172 136.7 0-3.8 12.8 4.1 1 3.2 1 3 1.2 3.1 1.8 2.5 1.7 2.7 2.3 2.3 2.5 2.1 2.7 1.8 3 1.6 3.3 1.3 3.5 1.1 3.7 0.8 4 0.5 4.3 0.2 4.2 0 4.5-0.8 8.8-1.8 9.2-2.8 9.5-3.7 9.8-4.5 9.7-5.3 9.5-6 9.3-6.7 9-6.8 8-7.4 7.7-7.7 7-7.8 6.3-8.1 5.5-8 4.6-8 3.8-8 2.9-4.3 1.1-4.2 0.9-4.3 0.6-4 0.2-3.7 0-3.8-0.4-3.5-0.7-3.5-1-3.2-1.3-3-1.6-2.8-1.9-2.7-2.3-2.3-2.4-2-2.5-1.7-2.8-2-3.8-9.5 5.8z" fill="#0b6b35"/><path d="M164.1 213.3l0-169.2 134.4 0-3.5 12.5 4.6 1 2.5 0.8 3.2 1.2 2.9 1.5 2.7 1.8 2.7 2.2 2.5 2.5 2.1 2.8 1.9 3 1.6 3.2 1.4 3.5 1 3.5 0.8 4 0.6 4 0.2 4.3 0 4.5-0.7 8.7-1.8 9.3-2.7 9.5-3.6 9.6-4.5 9.7-5.3 9.7-6 9.2-6.7 9.1-7 8.2-7.3 7.6-7.7 7-8 6.4-8.1 5.5-8.2 4.6-8 3.7-8 2.8-4.2 1.1-4.3 0.9-4 0.5-4 0.1-3.7-0.1-3.8-0.4-3.5-0.7-3.5-1.1-3-1.3-3-1.7-2.7-2-2.5-2.2-2.3-2.4-2-2.7-3.4-6.1-0.1-0.4z" fill="#0b6d36"/><path d="M164.1 210.5l0-166.4 132.1 0-3.2 12.3 3.9 0.7 3.7 1 3.2 1.3 2.5 1.2 2.8 1.8 2.8 2.2 2.3 2.3 2.2 2.7 1.9 3 1.6 3 1.4 3.5 1.1 3.5 0.9 4 0.5 4 0.3 4.3 0 4.2-0.7 8.8-1.7 9.2-2.6 9.3-3.6 9.7-4.4 9.6-5.3 9.7-6.1 9.5-6.6 9-7 8.2-7.5 7.8-7.7 7-7.9 6.2-8.1 5.6-8.3 4.7-8 3.6-8 2.8-4.2 1-4.3 0.8-4 0.5-4 0.1-3.7-0.1-3.8-0.5-3.5-0.8-3.2-1.1-3-1.4-3-1.8-2.5-1.8-2.5-2.3-2-2.3-2-2.7-1.8-3.1-1.7-3.7-8.1 4.5z" fill="#0b6f38"/><path d="M164.1 207.8l0-163.7 129.8 0-2.9 12 5.3 1 2.7 0.8 2.7 1 3.1 1.5 2.8 1.7 2.5 2 2.3 2.3 2.1 2.5 1.9 2.7 1.7 3.3 1.5 3.5 1.1 3.5 0.9 3.7 0.6 4 0.3 4.3 0 4.2-0.2 4.3-0.4 4.5-1.7 9.2-2.7 9.5-3.5 9.5-4.5 9.8-5.2 9.5-5.9 9.2-6.8 9.2-7 8.2-7.5 7.8-7.7 7-8 6.3-8.2 5.5-8.1 4.6-8.2 3.7-8 2.7-4.3 1-4 0.7-4 0.4-4 0.1-3.7-0.3-3.5-0.5-3.5-0.8-3.3-1.2-3-1.4-2.7-1.7-2.5-1.9-2.5-2.4-2.3-2.7-1.7-2.6-1.5-2.7-1.8-3.9z" fill="#0b7239"/><path d="M164.1 205.1l0-161 127.5 0-2.6 11.8 0.4 0.2 3.7 0.5 3.3 0.8 3 1 3.3 1.5 2.6 1.5 2.7 2 2.4 2.2 2.2 2.5 1.9 2.8 1.8 3.2 1.5 3.3 1.1 3.5 0.9 3.7 0.6 3.8 0.4 4.2 0.1 4.3-0.2 4.2-0.4 4.5-1.6 9-2.6 9.5-3.5 9.8-4.5 9.7-5.2 9.6-6.1 9.4-6.7 9-7 8.3-7.4 7.7-7.8 7-8 6.4-8.3 5.5-8.2 4.6-8.1 3.5-7.9 2.6-4.3 1-4 0.7-4 0.3-3.7 0.1-3.8-0.3-3.5-0.5-3.2-0.9-3.3-1.2-3-1.5-2.7-1.7-2.5-2-2.3-2.2-2-2.4-2-3.1-1.5-2.8-1.7-3.9z" fill="#0c743a"/><path d="M164.1 202.4l0-158.3 125.2 0-2.4 11.8 4 0.5 3.6 0.7 3.2 1 2.9 1.3 2.7 1.5 2.8 2 2.3 2 2.2 2.5 2 2.7 1.8 3 1.5 3.3 1.2 3.5 1 3.7 0.6 3.8 0.4 4.2 0.1 4.3-0.1 4.2-0.4 4.5-1.6 9-2.6 9.5-3.4 9.5-4.4 9.8-5.2 9.5-5.9 9.2-6.7 9.1-7 8.3-7.5 7.8-7.8 7-8 6.3-8.2 5.5-8.3 4.6-8.2 3.6-8 2.6-4.3 0.9-4 0.7-4 0.3-3.7 0-3.5-0.3-3.5-0.6-3.3-0.9-3.2-1.3-2.8-1.4-2.7-1.8-2.5-2.1-2.3-2.3-2-2.6-1.7-2.8-1.8-3.6-0.9-2.5-0.3-0.2 0-0.5-0.3-0.1z" fill="#0c763b"/><path d="M164.1 199.7l0-155.6 122.8 0-2.1 11.5 0.4 0.3 2.7 0.2 4.5 0.8 3.4 1 3 1.2 2.8 1.5 2.5 1.8 2.4 2 2.3 2.5 2.1 2.7 1.8 3 1.5 3.3 1.1 3.2 0.9 3.5 0.7 3.8 0.5 4 0.1 4.2-0.1 4.3-0.3 4.2-1.5 9-2.5 9.5-3.5 9.7-4.3 9.6-5.3 9.7-5.9 9.3-6.7 9.1-7.1 8.4-7.5 7.7-7.9 7.2-8.1 6.3-8.4 5.5-8.2 4.5-8.2 3.5-7.9 2.5-4 0.8-4 0.6-4 0.3-3.7-0.1-3.5-0.4-3.5-0.7-3.3-0.9-3-1.3-2.7-1.5-2.8-1.9-2.2-2-2.3-2.5-2-2.7-1.7-3-1.3-2.6-1.5-4z" fill="#0c793c"/><path d="M164.1 197l0-152.9 120.5 0-1.9 11.5 7.4 1 3 0.8 3.4 1.2 2.9 1.5 2.7 1.8 2.4 2 2.2 2.2 2 2.5 1.9 3 1.5 3.1 1.3 3.4 1 3.5 0.7 3.8 0.5 4 0.2 4.2-0.1 4.3-0.3 4.2-1.5 9-2.4 9.3-3.4 9.6-4.3 9.6-5.2 9.6-5.9 9.4-6.6 9-7 8.3-7.5 7.7-8 7.3-8 6.2-8.2 5.5-8.3 4.5-8.2 3.5-4 1.4-4 1.1-4 0.8-4 0.6-3.8 0.2-3.7-0.1-3.5-0.4-3.5-0.7-3.3-1-3-1.3-2.7-1.6-2.5-1.8-2.3-2-2.2-2.5-1.8-2.5-1.7-3-1.5-3.3-1.3-3.6-0.2-0.2z" fill="#0c7b3d"/><path d="M164.1 194.3l0-150.2 118.1 0-1.7 11.5 5.5 0.5 2.9 0.5 2.8 0.8 2.8 1 2.6 1.2 2.9 1.8 2.5 2 2.3 2.2 2 2.5 1.8 2.8 1.6 3 1.4 3.5 1 3.5 0.7 3.7 0.5 4 0.2 4 0 4.3-0.3 4.2-1.4 9-2.4 9.3-3.4 9.5-4.2 9.5-5.2 9.6-5.9 9.4-6.6 8.9-7 8.3-7.5 7.8-8 7.2-8 6.3-8.4 5.5-8.3 4.5-8 3.4-4 1.3-4 1-4 0.8-3.8 0.5-3.7 0.2-3.8-0.1-3.5-0.4-3.2-0.7-3.3-1.1-3-1.4-2.7-1.6-2.5-1.9-2.3-2.1-2.2-2.7-1.8-2.6-1.5-2.8-2.7-7.1z" fill="#0d7d3f"/><path d="M164.1 191.6l0-147.5 115.7 0-1.5 11.5 7.9 0.8 3.3 0.7 3 1 2.7 1.3 3 1.7 2.6 2 2.3 2.3 1.8 2.2 1.6 2.3 1.5 2.7 1.2 2.8 1.8 6 1 6.7 0.2 7.3-0.6 7.7-1.5 8.3-2.4 8.5-3.1 8.5-3.9 8.7-4.6 8.7-5.1 8.3-5.8 8.3-6.2 7.7-6.9 7.5-7 6.8-6.6 5.7-6.7 5-6.9 4.5-6.8 3.8-6.7 3.1-6.8 2.4-6.5 1.6-6.2 0.9-6.3 0-3-0.3-3-0.6-2.7-0.8-2.8-1.1-2.5-1.3-2.2-1.4-2.3-1.8-2-1.9-1.7-2-1.8-2.5-2.5-4.8-2.2-6.5z" fill="#0d8040"/><path d="M164.1 189l0-144.9 113.2 0-1.2 11.8 1.3-0.1 5.4 0.3 4.2 0.8 3.3 1 2.9 1.2 3.1 1.8 2.6 2 2.6 2.5 1.8 2.2 1.5 2.3 1.4 2.5 1.2 2.7 1.1 3 0.7 3 1.1 6.8 0.1 7.2-0.7 7.8-1.5 8-2.4 8.5-3.1 8.5-3.8 8.5-4.5 8.5-5.3 8.5-5.8 8.2-6.3 7.8-6.9 7.5-7 6.7-6.5 5.5-6.8 5-6.9 4.5-6.8 3.7-6.7 3-6.8 2.3-6.5 1.5-6 0.7-6.2-0.2-3-0.4-2.8-0.6-2.7-0.9-2.5-1-2.5-1.4-2.3-1.5-2-1.7-2-2-1.7-2.2-1.5-2.3-2.5-5.1-2-6.3z" fill="#0d8241"/><path d="M191.6 204.7l-3-1.8-2.5-2-2.5-2.5-2-2.6-1.7-2.8-1.5-3.2-1.3-3.5-0.9-3.2-0.1-0.7-0.2-0.4-11.8 4.3 0-142.2 110.8 0-1.1 11.8 7 0.2 5.5 1 4.8 1.8 2.4 1.2 2.2 1.5 2.2 1.8 1.8 1.7 1.8 2.3 1.5 2.2 1.4 2.5 1.2 2.8 1.1 3 0.7 3 1 6 0.2 6.5-0.5 6.7-1.1 7.3-1.8 7.5-2.6 7.7-3.1 7.8-3.7 7.7-4.8 8.5-5.3 8.3-5.9 8-6.4 7.6-6.8 7-7.1 6.6-7.4 5.9-7.3 5.1-7.4 4.3-7.5 3.6-7.3 2.6-7 1.7-6.7 0.8-6.3-0.2-3-0.5-2.7-0.6-2.8-1z" fill="#0d8442"/><path d="M191.4 203.1l-3-1.7-2.8-2.2-2.5-2.5-2-2.6-2-3.5-1.5-3.4-1.6-5.3-0.4-2.3-11.5 4 0-139.5 108.3 0-0.9 12 6.8 0 5.1 0.8 2.8 0.7 2.6 1 2.6 1.3 2 1.2 2.3 1.8 1.8 1.7 1.8 2 1.6 2.3 1.4 2.5 1.2 2.5 1.9 5.7 1 6 0.3 6.3-0.3 6.7-1 7-1.8 7.5-2.4 7.5-3 7.8-3.6 7.7-4.7 8.5-5.3 8.2-5.9 8.1-6.2 7.5-6.6 7-7 6.6-7.3 5.9-7.4 5.2-7.6 4.5-7.2 3.5-7.3 2.7-7 1.7-6.5 0.8-6.2-0.1-3-0.4-2.8-0.7-2.7-0.9z" fill="#0d8743"/><path d="M190.9 201.4l-3-1.8-2.8-2.1-2.5-2.6-2-2.7-1.7-3-1.5-3.5-1-3.1-1.3-5.3-11 3.6 0-136.8 105.7 0-0.6 12.3 0.7-0.2 5.7 0 2.6 0.2 3.2 0.5 5 1.5 2.8 1.2 2.1 1.3 2 1.5 2 1.7 1.8 2 1.7 2.3 1.5 2.5 1.2 2.5 1.9 5.5 1 5.7 0.4 6.3-0.3 6.5-0.9 7-1.7 7.2-2.3 7.5-2.9 7.5-3.5 7.8-4.6 8.3-5.1 8.2-5.8 8-6.2 7.5-6.6 7.1-7 6.6-7.3 6-7.2 5.1-7.3 4.4-7.5 3.7-7 2.6-7 1.8-6.5 0.9-3.2 0-3-0.1-3-0.5-2.8-0.6-2.7-0.9z" fill="#0e8945"/><path d="M190.6 199.8l-3-1.8-2.7-2.1-2.5-2.6-2.3-3-1.7-3.2-1.5-3.6-1-3.5-1-5.1-10.8 3.2 0-134 103.1 0-0.4 12.5 7.1-0.3 5.2 0.6 3 0.7 2.4 0.8 2.3 1 2.3 1.2 3.9 3 1.9 2 1.6 2 1.4 2.3 1.3 2.5 1.2 2.7 0.9 2.8 1.1 5.5 0.5 6.2-0.2 6.5-0.9 6.8-1.6 7.2-2.1 7.3-2.8 7.5-3.4 7.5-4.5 8.3-5.1 8.2-5.7 8-6 7.4-6.5 7-6.8 6.6-7.2 6-7.2 5.2-7.4 4.5-7.4 3.7-7 2.7-7 1.8-6.5 0.9-3.2 0.1-3-0.1-3-0.4-2.8-0.6-2.5-0.9z" fill="#0e8b46"/><path d="M190.4 198.1l-3.3-1.9-2.7-2.2-2.5-2.6-2.3-3.1-1.7-3.3-1.5-4-1-3.9-0.8-4.6-10.5 2.9 0-131.3 100.4 0-0.1 12.8 7-0.4 5.1 0.4 2.6 0.5 2.7 0.7 2.5 1 2.5 1.3 2.2 1.5 1.9 1.5 1.7 1.7 1.7 2 1.5 2.3 1.2 2.2 2.1 5.3 1.2 5.5 0.6 6-0.1 6.2-0.8 6.8-1.4 7-2.1 7.2-2.7 7.3-3.3 7.5-4.3 8.2-5.1 8.3-5.5 7.8-6 7.5-6.5 7.2-6.7 6.5-7.1 6-7.2 5.2-7.2 4.5-7 3.6-7 2.8-7 1.9-6.5 1-3.3 0.1-3-0.1-3-0.4-2.7-0.6-2.5-0.8z" fill="#0e8e47"/><path d="M190.1 196.3l-3.2-1.8-3-2.4-2.5-2.7-2.3-3.3-1.7-3.4-1.3-3.5-1-4.1-0.7-5.2-10.3 2.7 0-128.5 97.7 0 0.1 13.3 7-0.6 5.2 0.2 2.5 0.4 2.9 0.7 2.6 1 2.2 1 2.1 1.3 2 1.5 1.9 1.7 1.7 2 2.8 4.3 2.1 5 1.3 5.2 0.6 5.8 0 6.2-0.7 6.8-1.3 6.7-2 7.3-2.5 7.2-3.2 7.3-4.2 8.2-4.8 7.9-5.4 7.9-5.9 7.5-6.4 7.2-6.7 6.5-7 6-7.1 5.3-7.1 4.5-7.2 3.7-7.2 2.9-6.7 2-6.5 1-6 0-3-0.3-2.8-0.6-2.5-0.7z" fill="#0e9048"/><path d="M190.1 194.6l-3.5-1.9-3-2.4-2.5-2.6-2.2-3.3-1.8-3.6-1.2-3.6-1-4.4-0.8-5.4-10 2.3 0-125.6 94.9 0 0.4 13.8 5.9-0.8 6.1 0 3 0.4 2.7 0.6 4.6 1.8 4 2.5 2.1 1.7 1.6 1.8 1.6 2 1.4 2.2 1.3 2.5 0.9 2.5 1.4 5.3 0.7 5.5 0.1 6-0.5 6.2-1.2 6.8-1.9 7-2.4 7-3 7.2-4.1 8.3-4.7 8-5.3 7.7-5.8 7.5-6.3 7.1-6.6 6.7-6.9 6-6.9 5.2-7.1 4.6-7 3.7-7 2.9-6.7 2.1-6.5 1.1-6 0.1-3-0.2-2.8-0.6-2.5-0.7z" fill="#0f9249"/><path d="M189.9 192.8l-3.5-1.9-3-2.4-2.5-2.7-2.3-3.3-1.7-3.7-1.5-4.7-0.8-4-0.5-5.4-10 2.1 0-122.7 92 0 0.7 14.3 7.3-1 5 0 5.2 0.7 4.6 1.5 2.5 1.3 1.9 1.2 1.9 1.5 1.8 1.8 1.6 2 1.4 2 2.3 4.7 1.5 5 0.8 5.3 0.2 6-0.5 6.2-1 6.5-1.7 6.8-2.3 7-2.9 7.1-4 8.1-4.6 8-5.2 7.8-5.7 7.5-6.1 7-6.4 6.5-6.8 6-7 5.4-7 4.6-7 3.8-7 3.1-6.7 2-6.5 1.2-6 0.2-2.8-0.3-2.7-0.5-2.5-0.6z" fill="#0f954a"/><path d="M189.9 191l-3.5-1.9-3.3-2.5-2.7-3-2.3-3.5-1.7-4-1.3-4.5-0.7-5-0.3-4.7-10 2 0-119.8 89 0 1 15 0.3-0.2 6.7-1 5-0.2 5.3 0.5 2.7 0.6 2.3 0.8 2.2 1 2.1 1.3 2 1.5 1.7 1.5 1.8 2 1.4 2 2.3 4.5 1.6 4.7 0.9 5.3 0.3 5.5-0.3 6-1 6.5-1.5 6.5-2.1 6.7-2.8 7-3.8 8-4.3 7.8-5 7.7-5.6 7.5-5.9 7-6.5 6.8-6.8 6.1-6.8 5.4-6.9 4.6-7 3.9-6.8 3-6.7 2.2-6.5 1.3-6 0.3-2.8-0.2-2.7-0.5-2.5-0.6z" fill="#0f974c"/><path d="M189.6 189l-3.5-1.8-3.2-2.5-2.8-3.1-2.2-3.7-1.5-3.4-1.3-4.4-0.7-5.1-0.3-5.9-10 1.7 0-116.7 86 0 1.3 15.5 1 0.1 0.2-0.2 6.1-1.1 5.2-0.4 5 0.4 4.8 1.2 4.3 2 2.1 1.5 1.8 1.5 1.7 1.8 1.5 2 2.4 4.2 1.6 4.5 1 5 0.4 5.5-0.2 6-0.9 6.3-1.3 6.2-2.1 6.8-2.5 6.7-3.8 8-4.2 7.8-5 7.7-5.4 7.4-5.9 7.1-6.3 6.6-6.5 6-6.8 5.4-7 4.8-6.7 3.8-6.8 3.1-6.7 2.2-6.3 1.3-6 0.3-2.7-0.1-2.8-0.5-2.5-0.6z" fill="#0f9a4d"/><path d="M189.6 187.1l-3.7-1.9-3.3-2.6-2.7-3.1-2.3-3.8-1.7-4.5-1-4.2-0.5-4.1-0.3-6.7-10 1.5 0-113.6 82.8 0 1.7 16.5 6.5-1.5 5.8-0.6 5 0.2 5 1 2.2 0.8 2.3 1.1 3.7 2.5 1.8 1.8 1.5 1.7 1.3 2 1.3 2.3 1.6 4.2 1.1 4.8 0.6 5.2-0.1 5.8-0.7 6-1.3 6.2-1.8 6.5-2.4 6.5-3.4 7.8-4.2 7.9-4.8 7.6-5.3 7.5-5.7 7-6.3 6.7-6.4 6-6.8 5.5-6.8 4.8-6.9 4-6.8 3.1-6.5 2.3-6.2 1.3-6 0.4-2.8-0.1-2.7-0.4-2.5-0.6z" fill="#109c4e"/><path d="M189.9 185.2l-3.8-1.8-3.5-2.7-2.7-3.1-2.3-3.7-1.7-4.6-1-4.4-0.5-5.1 0-6.7-10.3 1.3 0-110.3 79.4 0 2.2 17.5 6.5-1.7 5.4-0.8 5.5-0.1 5.1 0.9 4.4 1.6 3.8 2.4 1.7 1.5 1.6 1.7 1.5 2 1.2 2.1 1.8 4.2 1.1 4.5 0.6 5 0.1 5.5-0.5 5.7-1.1 6-1.7 6.3-2.2 6.2-3.3 7.8-4 7.7-4.6 7.7-5.1 7.3-5.6 7-6 6.6-6.4 6.2-6.6 5.5-6.6 4.7-6.7 4.1-6.7 3.3-6.5 2.3-6.3 1.5-5.7 0.6-2.8-0.1-2.7-0.3-2.5-0.5z" fill="#109e4f"/><path d="M189.9 183.1l-4-1.9-3.5-2.7-2.8-3.2-2.2-4-1.5-4.1-1-4.8-0.4-4.8 0.1-7.7-10.5 1.2 0-107 75.9 0 2.7 18.5 0.4 0 0.3-0.2 6.3-1.8 5.7-0.9 5.2-0.2 4.7 0.6 2.3 0.6 2.3 0.9 3.9 2.3 3.3 3 2.6 3.7 1.9 4 1.2 4.3 0.8 4.7 0.1 5-0.3 5.5-1 5.8-1.4 6-2 6.2-3.1 7.5-3.8 7.7-4.4 7.6-4.9 7.2-5.4 7-6 6.8-6.3 6.1-6.5 5.6-6.5 4.8-6.7 4.2-6.5 3.3-6.5 2.5-6.3 1.6-5.7 0.6-2.8 0-2.7-0.3-2.5-0.4z" fill="#10a150"/><path d="M213.9 179.4l-4.3 1.3-4 1-3.7 0.5-3.8 0.1-3.5-0.2-3.5-0.8-3-1-2.7-1.5-3-2.4-2.5-2.8-2-3.3-1.5-3.7-1-3.9-0.6-4.8-0.1-4.3 0.4-7-11 1 0-103.5 72.3 0 1.5 10.3 1.7 9.5 7.9-2.5 5.6-1.1 3-0.2 3 0 2.8 0.3 2.7 0.6 2.5 0.8 2.3 1.1 2.2 1.4 2 1.6 1.8 1.9 1.5 2.1 1.4 2.5 1 2.5 0.9 2.7 0.6 3 0.6 6.3-0.4 7-1.3 7.5-2.2 7.7-3.1 8.2-3.9 8.1-4.6 7.9-5.3 7.8-5.9 7.5-6.3 7-6.6 6.3-6.9 5.6-7 4.9-7 3.9z" fill="#10a351"/><path d="M212.9 177.1l-4.3 1.4-4 0.9-3.7 0.5-3.8 0.1-3.5-0.4-3.2-0.7-3-1.2-2.5-1.4-3-2.6-2.5-3.1-1.8-3.2-1.5-4.2-0.8-4.1-0.4-4.7 0.2-5.5 0.4-4 0.2-0.5-0.1-1.3-11.5 0.8 0-99.8 68.4 0 1.8 10.8 2.1 10.5 7.4-2.8 6.4-1.5 3.2-0.3 3-0.1 2.7 0.2 2.8 0.5 2.5 0.7 2.5 1.1 2.2 1.3 2 1.6 1.8 1.8 1.6 2.2 1.4 2.4 1.1 2.6 0.9 2.8 0.5 2.7 0.4 3 0.2 3.3-0.4 6.7-1.3 7.3-2.2 7.7-3 7.8-3.8 8-4.5 7.7-5.2 7.6-5.7 7.3-6.2 6.9-6.6 6.2-6.7 5.5-6.9 4.8-6.9 3.8z" fill="#11a553"/><path d="M212.1 174.8l-4 1.3-4 0.9-3.7 0.5-3.8 0.1-3.5-0.4-3.2-0.8-3-1.2-2.5-1.6-3-2.7-2.3-3-1.7-3.5-1.3-4-0.7-4.7-0.2-4.6 0.2-3.7 0.8-6.8 0.2-0.2 0-1-12.3 0.6 0-95.9 64.2 0 2.2 11.5 2.4 11.3 0.5 0 2.2-1.1 4.9-1.9 6.4-1.8 3.2-0.5 3.3-0.2 3 0.1 2.7 0.4 2.9 0.7 2.4 1 2.2 1.3 2 1.5 1.8 1.7 1.7 2.3 1.3 2.2 1.2 2.8 0.8 2.7 0.6 2.8 0.5 6-0.4 6.7-1.3 7-2.1 7.5-2.9 7.5-3.8 7.8-4.3 7.5-5.1 7.4-5.5 7.1-6.2 6.7-6.2 6-6.6 5.4-6.7 4.6-6.8 3.8z" fill="#11a854"/><path d="M211.4 172.3l-4 1.3-4 0.9-3.8 0.5-3.7 0.1-3.5-0.5-3-0.8-3-1.3-2.5-1.6-2.8-2.7-2.2-3.3-1.7-3.8-1.1-4.2-0.5-4.5 0-5.3 0.5-4.7 0.9-5 0.2-0.3 0-0.7 0.2-0.3 0-0.7-13.3 0.4 0-91.7 59.8 0 2.6 12.5 2.9 12.3 4.2-2.1 4-1.7 6.6-2 3.2-0.6 3.2-0.3 3 0 2.8 0.3 2.8 0.6 2.4 0.9 2.5 1.3 2 1.5 1.9 1.8 1.6 2 1.3 2.3 1.2 2.7 0.8 2.5 0.6 2.8 0.5 6-0.4 6.5-1.2 6.7-2.1 7.3-2.9 7.5-3.7 7.5-4.2 7.2-4.9 7.3-5.5 6.9-5.7 6.4-6.3 5.9-6.4 5.3-6.5 4.5-6.6 3.7z" fill="#11aa55"/><path d="M210.6 169.8l-4 1.3-4 0.9-3.7 0.5-3.5 0-3.5-0.5-3-0.8-2.8-1.3-2.5-1.8-2.7-2.7-2-3.2-1.6-3.8-1-4.8-0.3-4.5 0.1-5 0.8-5.3 1.7-7.7-14.5 0.2 0-87.2 55.1 0 3 13.8 3.2 13 0.5 0 4.7-2.5 3.8-1.8 6.5-2.2 3.2-0.8 3.3-0.4 3-0.2 2.7 0.2 2.8 0.4 2.7 0.9 2.5 1.1 2.2 1.5 2 1.8 1.6 2 1.5 2.4 1.1 2.6 1.3 5 0.5 5.7-0.3 6.3-1.2 6.7-2 7-2.8 7.3-3.5 7.2-4.1 7.2-4.8 7-5.2 6.6-5.8 6.4-6 5.7-6.2 5.2-6.3 4.3-6.2 3.6z" fill="#11ac56"/><path d="M209.9 167.2l-4 1.3-3.8 0.9-3.7 0.4-3.5 0-3.3-0.5-3-0.8-2.7-1.4-2.5-1.8-1.5-1.5-1.3-1.6-2-3.6-1.3-4-0.7-4.7-0.1-5.3 0.6-6.1 1.2-5.6 1.4-5 0.2-0.3 0-0.5 0.2-0.2 0-0.6-16 0.1 0-82.3 49.9 0 3.4 15 3.8 14.5 0.4 0 2.5-1.6 5.8-3.1 6.6-2.8 3.3-1 3.6-0.7 3.2-0.4 3.3 0 3 0.3 2.7 0.7 2.6 1.1 2.2 1.4 2 1.6 1.9 2.3 1.4 2.2 1.2 2.8 1.3 4.7 0.5 5.5-0.4 6-1.1 6.5-1.9 6.8-2.7 7-3.4 7-4.1 7.1-4.7 6.9-5 6.4-5.5 6.1-5.8 5.5-6 4.9-6.1 4.3-6.1 3.5z" fill="#11af57"/><path d="M209.1 164.6l-4 1.2-3.7 0.9-3.8 0.4-3.5-0.1-3.2-0.5-2.8-1-2.7-1.5-2.3-1.8-2.5-3.1-1-1.7-1-2.3-1.1-4.5-0.5-5 0.2-5.2 0.9-5.9 1.7-6.4 2.6-7.3-18.3 0.2 0-76.9 44.2 0 3.7 16 4.4 17 8.2-5.2 3.7-2 3.9-1.8 3.4-1.2 3.8-1.1 3.7-0.6 3.3-0.2 3 0.1 3 0.6 2.6 0.9 2.4 1.3 2.1 1.7 1.9 2.1 1.6 2.4 1.2 2.8 1.3 4.7 0.4 5.3-0.3 5.7-1.1 6.3-1.9 6.5-2.6 6.7-3.3 6.8-3.9 6.7-4.4 6.5-4.9 6.3-5.4 6-5.5 5.3-5.7 4.7-6 4.2-6 3.4z" fill="#12b158"/><path d="M208.6 161.7l-4 1.3-3.7 0.8-3.5 0.4-3.5-0.1-3.3-0.6-2.7-0.9-2.5-1.5-2.3-2-1.5-1.7-1.1-1.8-1-2-0.8-2.2-0.9-5-0.1-5.5 0.7-6 1.5-6.4 2.4-7.1 1.4-3.5 1.2-2.3 0.5-1.5-21.3 0.6 0-70.6 37.8 0 8.7 37.5 0.8-0.2 3.5-2.9 5.5-3.9 3.7-2.2 3.3-1.8 4-1.7 3.6-1.3 3.9-1 3.5-0.4 3.5-0.1 3 0.4 3 0.9 2.5 1.2 2.2 1.7 2 2.1 1.5 2.2 1.3 2.8 1.2 4.5 0.4 5-0.3 5.5-1 6-1.8 6.2-2.5 6.5-3.1 6.5-3.7 6.5-4.3 6.3-4.7 6-5.1 5.7-5.4 5.3-5.5 4.5-5.7 4-5.8 3.3z" fill="#12b35a"/><path d="M208.1 158.7l-5 1.6-4.5 0.8-4.2 0.1-4-0.7-3.3-1.4-3-2.1-2.4-2.9-1.7-3.5-1.2-4.5-0.4-5 0.3-5.5 1.2-6 2-6.6 2.7-6.6 3.6-7.3 3.7-5.9-4.7 1.4-5.8 1.1-7.5 0.9-9.8 0.7 0-63.2 30.6 0 4.2 20 2 11.3 0.9 8.5 0.1 3.5-0.2 3 8.9-8.3 5-4 4-2.7 4.2-2.5 4-2 3.8-1.5 4.3-1.3 4-0.6 3.7-0.1 3.5 0.4 3 1 2.7 1.6 2.3 2 1.9 2.5 1.4 3 1.2 4.2 0.5 4.8-0.3 5.2-1 5.8-1.6 6-2.4 6.2-3 6.3-3.6 6.2-4.1 6.1-4.5 5.8-4.8 5.4-5.2 5-5.3 4.5-5.4 3.8-5.5 3.2z" fill="#12b65b"/><path d="M164.1 98l0-53.9 22.2 0 2.6 15.5 1.1 10.8 0 4.5-0.2 3.7-0.6 3.3-1 3-1.3 2.6-1.8 2.3-2.1 1.8-2.6 1.7-3 1.4-3.8 1.3-4.5 1.1zM185.9 155.1l-2-1.8-1.6-2.2-1.4-2.7-0.9-2.8-0.6-3.2-0.2-3.5 0.2-3.5 0.6-4 0.9-4.2 1.2-4.1 1.8-4.7 2-4.4 2-3.9 2.9-5 3-4.5 3-4 6.3-7.2 4.3-4.3 4-3.5 3.5-2.7 3.7-2.5 3.3-2 3.8-2 3.7-1.5 3.9-1.3 3.3-0.6 3.3-0.3 3 0.2 2.7 0.5 2.5 1 2.4 1.5 1.9 1.7 1.7 2.3 1.2 2.5 1 3 0.5 3.2 0.2 3.5-0.2 3.8-0.6 3.7-0.9 4-1.2 4.3-1.7 4.4-1.9 4.3-2.4 4.5-2.5 4.3-2.8 4.2-3.1 4.3-3.3 4-3.5 3.8-3.5 3.5-3.8 3.3-3.7 3-3.8 2.7-3.7 2.2-3.8 2-3.7 1.6-3.5 1.1-3.5 0.7-3.3 0.3-3-0.1-3-0.6-2.5-1z" fill="#12b85c"/><path d="M164.1 84.7l0-40.6 12.2 0 0.9 9 0.2 7.3-0.4 6-1.1 5-1.7 4.2-2.4 3.5-1.5 1.5-1.8 1.5zM186.4 151.9l-2-1.9-1.5-2.1-1.2-2.5-0.8-2.6-0.5-3-0.2-3.4 0.2-3.5 0.6-3.8 0.9-3.8 1.2-4 1.5-4 2-4.4 2-3.8 2.5-4.2 3-4.5 3-4 4-4.7 2.8-3 3.7-3.6 3.5-3 3.3-2.5 3.7-2.5 3.4-2 3.5-1.7 3.9-1.5 3-0.9 3.2-0.6 3-0.2 2.8 0.2 2.7 0.7 2.3 0.9 2 1.4 1.8 1.7 1.4 2.1 1.2 2.4 0.8 2.8 0.5 3 0.2 3.5-0.3 3.5-0.5 3.7-0.9 3.8-1.3 4-1.5 4-1.9 4.2-2.3 4.3-2.4 4-2.6 4-3 3.9-3.1 3.8-3.2 3.5-3.4 3.4-3.5 3.1-3.5 2.8-3.6 2.5-3.7 2.2-3.5 1.8-3.5 1.4-3.5 1.1-3.2 0.7-3 0.2-2.8-0.1-2.7-0.6-2.5-0.9z" fill="#13ba5d"/><path d="M187.1 148.6l-1.7-1.6-1.5-2-1.2-2.4-0.7-2.5-0.5-2.7-0.1-3.3 0.2-3.5 0.5-3.2 0.8-3.5 1.2-4 1.5-3.9 1.8-3.9 2.2-4.2 2.3-3.8 4.7-6.7 6-7 3.3-3.3 3.3-3 3.1-2.5 3.6-2.5 3.7-2.2 3.4-1.8 3.1-1.3 3.3-1 3.2-0.7 2.8-0.2 2.7 0.2 2.5 0.5 2.3 1 2 1.3 1.5 1.5 1.5 2 1.1 2.2 0.8 2.8 0.5 3 0.1 3-0.2 3.2-0.6 3.5-0.8 3.5-1.2 3.8-1.5 3.9-1.7 3.9-4.3 7.7-5.3 7.5-5.9 6.8-6.5 6.1-3.3 2.6-3.5 2.4-3.3 2.1-3.4 1.7-3.3 1.4-3 0.9-3 0.7-3 0.3-2.7-0.2-2.5-0.5-2.3-0.8z" fill="#13bd5e"/><path d="M188.1 145.2l-1.7-1.6-1.3-1.7-1-1.9-0.7-2.4-0.5-2.6-0.2-2.9 0.2-3.2 0.4-3.3 0.8-3.4 1-3.3 3-7.3 4-7.2 4.8-6.8 5.7-6.7 5.8-5.5 3.5-2.8 3.2-2.2 3.3-2 2.9-1.5 3.1-1.3 3-0.9 2.7-0.6 2.8-0.2 2.5 0.1 2.2 0.5 2.3 0.9 1.7 1.1 1.7 1.6 1.2 1.8 1 2 0.8 2.5 0.4 2.7 0.1 2.8-0.2 3-0.5 3.2-0.7 3.3-1.1 3.5-3 7.2-4.1 7.3-4.8 6.9-5.5 6.3-6 5.7-6.3 4.7-3 1.9-3.2 1.6-3 1.3-3 1-2.8 0.6-2.7 0.3-2.5-0.1-2.3-0.5-2-0.7z" fill="#13bf60"/><path d="M189.1 141.4l-1.5-1.4-1.2-1.6-0.8-1.8-0.8-2.2-0.4-2.5-0.1-2.5 0.1-2.8 0.5-3.1 0.7-3.2 1-3.2 2.8-6.6 3.7-6.7 4.5-6.4 5.3-6 5.3-5 5.7-4.3 5.7-3.2 3-1.3 2.5-0.8 2.5-0.5 2.5-0.2 2.3 0.1 2.2 0.4 1.9 0.8 1.6 1 1.5 1.4 1.2 1.6 1 2 0.7 2.2 0.4 2.5 0.1 2.5-0.2 2.8-0.4 3-1.8 6.2-2.7 6.5-3.6 6.5-4.5 6.5-5.2 6-5.5 5.2-5.7 4.3-5.8 3.3-2.7 1.1-2.8 0.9-2.5 0.5-2.5 0.3-2.2-0.1-2.3-0.5-1.7-0.7z" fill="#13c161"/><path d="M190.6 137.4l-1.4-1.3-1.1-1.5-0.8-1.5-0.6-2-0.4-2.2-0.1-2.3 0.1-2.5 0.4-2.7 1.4-5.5 2.5-6 3.5-6.3 4-5.7 4.8-5.5 4.8-4.5 5.4-4 4.9-2.8 4.9-1.8 2.2-0.4 2.3-0.2 2 0 2 0.4 1.7 0.7 1.5 1 1.3 1.2 1 1.4 0.9 1.7 0.6 2 0.3 2.3 0.1 2.2-0.1 2.5-0.4 2.8-1.6 5.7-2.5 5.8-3.2 5.7-4 5.8-4.5 5.2-4.9 4.7-5 3.8-5.2 3-5 2-2.3 0.5-2.2 0.2-2 0-2-0.4-1.8-0.6z" fill="#14c462"/><path d="M192.4 132.8l-1.1-0.9-1-1.3-0.8-1.5-0.6-1.7-0.3-2-0.1-2 0.5-4.5 1.3-5 2.1-5 3-5.4 3.5-5 4-4.6 4.2-4 4.5-3.4 4.5-2.6 4.3-1.6 2-0.4 2-0.2 1.7 0.1 1.8 0.4 1.5 0.6 1.2 0.8 1.1 1 0.9 1.3 0.7 1.5 0.6 1.7 0.3 2 0 2-0.5 4.5-1.3 4.8-2.2 5.2-2.8 5-3.5 5-4 4.7-4.3 4-4.4 3.3-4.3 2.5-4.3 1.7-4 0.6-1.7 0-1.8-0.3-1.5-0.6z" fill="#14c663"/><path d="M194.6 127.4l-1-0.9-0.7-1-1-2.4-0.4-3.2 0.4-3.8 1-3.8 1.7-4.3 2.3-4.1 3-4.3 3.2-3.8 3.6-3.4 3.7-2.8 3.7-2.2 3.5-1.3 3.3-0.5 2.7 0.3 1.3 0.5 1.1 0.7 1.6 1.9 1.1 2.6 0.3 3.3-0.5 3.7-1.1 4-1.8 4.3-2.4 4.2-2.8 4-3.3 3.7-3.5 3.3-3.6 2.8-3.6 2-3.5 1.4-3.3 0.5-2.7-0.3z" fill="#14c864"/><path d="M198 120.6l-1.2-1.2-0.8-2-0.2-2.3 0.3-2.7 0.8-2.8 1.3-3 1.7-3 2-2.8 2.5-2.9 2.5-2.3 2.6-2 2.6-1.4 2.5-0.9 2.3-0.3 2 0.3 1.5 0.8 1.2 1.5 0.6 1.8 0.2 2.2-0.3 2.5-0.8 2.8-1.2 3-1.7 3-2.1 3-2.4 2.7-2.4 2.3-2.6 1.9-2.5 1.5-2.5 0.9-2.3 0.4-2-0.2z" fill="#14cb65"/><circle cx="241.57" cy="130.99" r="15.59" fill="url(#H0)" style="mix-blend-mode:plus-lighter"/></g><clipPath id="S1"><path d="M544.75 299.49l-3 0.63-3.17 0.52-3 0.35-3.16 0.23-3.17 0.08-3.17-0.06-3.16-0.21-3.17-0.35-3.17-0.49-2.99-0.61-3.17-0.79-3-0.89-3-1.03-3-1.2-2.84-1.27-2.94-1.48-2.72-1.54-2.67-1.66-2.63-1.8-2.54-1.92-2.5-2.08-2.33-2.12-2.22-2.22-2.11-2.31-2-2.4-1.87-2.45-1.72-2.5-1.66-2.67-1.5-2.67-1.41-2.83-1.25-2.83-1.1-2.84-0.94-2.83-0.84-3-0.68-3-0.53-2.99-0.39-3.01-0.23-3-0.09-3 0.06-3 0.21-3 0.36-3 0.52-3 0.63-2.83 0.83-3 0.94-2.84 1.1-2.83 1.22-2.73 1.34-2.62 1.52-2.65 1.6-2.5 1.78-2.5 1.93-2.42 1.97-2.25 2.1-2.16 2.26-2.12 2.34-1.97 2.33-1.79 2.5-1.73 2.67-1.67 2.66-1.49 2.84-1.41 2.83-1.24 2.83-1.09 3.17-1.04 3.17-0.88 3.33-0.74 3.33-0.57 3.34-0.4 3.33-0.24 3.33-0.08 3.5 0.09 3.5 0.27 3.34 0.41 3.33 0.58 3.33 0.75 3.34 0.91 3.16 1.04 3.17 1.2 3.17 1.38 3.01 1.49 3 1.67 2.99 1.85 2.83 1.96 2.67 2.04 2.66 2.26 2.5 2.34 2.31 2.38 2.2 2.5 2.12 2.67 1.91 2.67 1.83 2.83 1.63 2.83 1.53 3 1.35 3 1.23 3.17 1.03 3.17 0.86 3.16 0.69 3.17 0.52 3.17 0.35 3.16 0.19 3.34 0.01 3.33-0.16 3.17-0.35 3.33-0.5 3.17-0.68 3.16-0.87 3.17-0.99 3-1.18 3-1.37 3-1.48 2.83-1.68 2.84-1.79 2.66-1.87 2.51-2.08 2.49-2.26 2.43-2.3 2.24-2.49 2.17-2.54 1.99-2.67 1.88-2.83 1.78-2.83 1.58-3 1.48-3 1.3-3.17 1.18-3.17 1.01z"/></clipPath><g clip-path="url(#S1)"><rect x="451" y="164" width="146" height="145" fill="#0d1a03"/><path d="M451.1 308.9l0-144.9 145.8 0.1 0 17.2-5.8 2.9-5.8 3.2-5.7 3.3-5.5 3.3 3.8 4.6 2.7 3.9 2.3 4.3 2 4.9 1.5 5.2 0.9 5.2 0.3 5.5-0.2 5.6-0.7 5.7-1.4 5.7-1.9 5.6-2.3 5.4-2.8 5.2-3.4 5-3.8 4.9-4.2 4.5-4.4 4-4.8 3.7-4.9 3.4-5.4 2.9-5.3 2.4-5.6 2-5.7 1.5-5.5 0.9-5.5 0.5-5.5 0-5.5-0.6-5.2-1-5-1.5-4.8-2-3.7-2-3.5-2.3-1.9-1.4-0.3 0-3.2 5.7-3 5.9-2.8 5.8-2.6 5.8z" fill="#0e1b03"/><path d="M451.1 308.9l0-144.9 145.8 0.1 0 14.7-6.3 3.4-6 3.4-5.8 3.5-5.9 3.8 4 4.5 2.8 4 2.5 4.4 2.1 4.8 1.5 5.1 1 5.4 0.4 5.5-0.1 5.6-0.7 5.7-1.3 5.7-1.9 5.6-2.4 5.7-2.9 5.3-3.4 5.2-3.8 4.9-4.3 4.6-4.5 4.1-4.8 3.8-5.1 3.3-5.2 2.9-5.6 2.4-5.6 2-5.7 1.4-5.7 1-5.6 0.4-5.7-0.1-5.7-0.7-5.3-1.1-5-1.7-4.5-2-4.3-2.5-3.7-2.6-0.6-0.6-0.5-0.2-3.6 5.9-3.3 6-3.1 6.1-3 6.2z" fill="#0f1e03"/><path d="M451.1 308.9l0-144.9 145.8 0.1 0 11.5-6.7 3.7-6.3 3.8-6.3 4.1-6.2 4.3 4 4.3 3.2 4.1 2.7 4.5 2.1 4.8 1.7 5.2 1.1 5.4 0.5 5.6-0.1 5.7-0.7 5.8-1.3 5.9-1.8 5.7-2.4 5.5-2.9 5.4-3.4 5.3-3.8 4.9-4.4 4.7-4.7 4.3-4.8 3.7-5.2 3.5-5.5 2.9-5.5 2.4-5.8 2-5.8 1.4-5.8 0.9-5.7 0.3-5.7-0.2-5.6-0.7-5.2-1.3-5.2-1.8-4.8-2.3-4.4-2.6-4.5-3.5-4 6.3-3.7 6.3-3.6 6.5-3.2 6.5z" fill="#112103"/><path d="M451.1 308.9l0-144.9 145.8 0.1 0 8.1-7 4.2-6.8 4.3-6.7 4.6-6.5 4.8 0 0.1 4.4 4.4 3.3 4.1 2.6 4.4 1.2 2.3 1.2 2.6 1.7 5.1 1.2 5.5 0.6 5.6-0.1 5.7-0.6 5.9-1.2 5.8-1.8 5.8-2.4 5.7-2.9 5.5-3.4 5.3-4 5.1-4.3 4.8-4.7 4.2-5 3.9-5.1 3.4-5.6 3-5.8 2.5-5.8 1.9-5.8 1.4-6 0.8-5.8 0.3-5.9-0.3-5.6-0.8-5.3-1.4-4.9-1.8-2.5-1.1-2.5-1.4-4.3-2.8-3.7-3-0.9-0.6-4.4 6.4-4.2 6.7-4 6.8-3.7 7z" fill="#122504"/><path d="M451.1 308.9l0-144.9 145.8 0.1 0 4.6-7.5 4.7-7.3 5-7 5.1-6.8 5.3 0.1 0.3 1.3 1.1 3 2.9 1.7 1.9 1.8 2.2 2.9 4.4 2.4 4.8 1.1 2.7 0.8 2.5 0.7 2.6 0.6 2.9 0.7 5.6 0.1 5.9-0.6 6-1.2 5.9-1.7 5.9-2.4 5.9-3 5.6-3.5 5.5-4 5.2-4.3 4.7-4.8 4.3-5.1 3.9-5.3 3.5-5.6 2.9-5.9 2.5-5.8 1.9-6 1.4-6 0.8-5.9 0.2-5.8-0.4-5.7-0.9-5.4-1.5-5-2-4.8-2.5-4.1-2.8-4.8-4-5 6.8-4.7 7-4.4 7.2-4.2 7.3z" fill="#142804"/><path d="M451.1 308.9l0-144.9 145.8 0.1 0 1-8 5.3-7.7 5.4-7.5 5.8-7.1 6 4.5 4 3.5 3.8 1.6 2.2 1.6 2.3 1.4 2.5 1.2 2.4 1.1 2.6 0.9 2.5 0.8 2.8 0.7 2.9 0.5 2.9 0.3 2.9 0.2 3 0 3-0.5 6-0.5 3-0.7 3.1-1.7 6.1-2.4 5.8-3 5.9-3.5 5.4-4 5.2-4.5 4.9-4.7 4.3-5.2 4-5.5 3.5-5.7 3-5.9 2.4-5.9 1.9-6.1 1.4-6 0.7-6 0.1-5.8-0.4-5.7-1-5.5-1.6-5.2-2.2-4.7-2.6-4-2.9-4.8-4.2-5.5 7-5.3 7.4-4.9 7.5-4.7 7.8z" fill="#162b04"/><path d="M451.1 308.9l-0.1-144.8 141.9 0-7.3 5.2-7.2 5.5-6.8 5.6-6.7 5.9 4.7 3.9 3.7 3.9 1.8 2.3 1.5 2.2 1.5 2.4 1.3 2.5 1.2 2.6 1 2.6 1.5 5.4 0.5 2.8 0.4 3 0.3 5.9-0.4 5.9-0.4 3.2-0.6 3-1.7 6-2.3 6-2.8 5.7-3.5 5.6-4 5.4-4.3 4.8-4.9 4.5-5.2 4.2-5.6 3.6-5.7 3.1-6 2.5-6.2 2-6.3 1.4-6.2 0.7-6.1 0.2-6-0.5-3-0.5-2.9-0.7-5.4-1.6-2.8-1.2-2.5-1.2-2.4-1.3-2.4-1.5-4.1-3.2-4.5-4.2-6.2 7.4-5.8 7.6-5.5 8-5.2 8.2z" fill="#172e05"/><path d="M451.1 306.8l-0.1-142.7 136.7 0-6.5 5-6.1 5.2-6 5.3-5.8 5.5 0.1 0.3 0.2 0 4.7 3.9 3.7 3.6 1.8 2.2 1.6 2.1 1.5 2.4 1.3 2.4 1.2 2.5 1.2 2.8 0.8 2.5 0.8 2.8 0.6 2.8 0.4 2.9 0.3 2.8 0.1 3 0 3-0.2 3-0.4 3.1-0.6 3.1-1.5 5.9-2.2 6.1-2.8 5.8-3.3 5.6-4 5.5-4.4 5-4.9 4.7-5.2 4.2-5.7 3.8-5.9 3.2-6.2 2.6-6.2 2-6.3 1.4-3.2 0.5-3.2 0.3-6.2 0.1-3.1-0.2-3-0.4-3-0.5-2.9-0.7-2.8-0.8-2.8-1-2.7-1.1-2.4-1.2-2.6-1.5-2.3-1.5-4.2-3.3-3.6-3.8-1-0.8-6.5 7.2-6 7.5-5.8 7.9z" fill="#193105"/><path d="M451.1 301.3l-0.1-137.2 132 0-5.8 4.8-5.5 5-5.1 4.9-5.2 5.3 4.8 3.5 2.1 1.8 2.1 2 2 2.4 1.7 2.1 1.5 2.2 1.5 2.5 1.3 2.6 1.1 2.6 1 2.6 0.8 2.9 0.6 2.6 0.5 3 0.4 3 0.1 3 0 3-0.2 3.2-0.3 3.1-0.5 3.1-0.8 3.1-0.8 3-1 3.2-1.2 3-2.8 6-3.4 5.6-4 5.4-4.5 5.2-5 4.7-5.3 4.2-2.9 2-3 1.9-5.9 3.1-6.2 2.7-6.3 1.9-6.4 1.3-3.3 0.5-3.2 0.2-3.2 0.1-3-0.1-3.1-0.2-3-0.4-3-0.6-2.9-0.7-3-1-2.6-1-2.6-1.1-2.6-1.4-2.4-1.5-2.4-1.7-2.5-2-1.9-1.6-4.2-4.5-6 6.3-5.7 6.5-5.5 6.9z" fill="#1a3505"/><path d="M451.1 296.3l-0.1-132.2 127.6 0-5 4.6-4.8 4.7-4.7 4.8-4.4 4.7 0 0.2 2.5 1.6 3 2.2 3.9 3.5 1.9 2 1.7 2.2 1.7 2.3 1.5 2.4 1.3 2.5 1.2 2.6 1.1 2.9 0.9 2.8 0.7 2.8 0.5 3 0.4 3 0.2 3 0 3-0.1 3.2-0.4 3-0.5 3.1-0.6 3.2-0.9 3.2-1 3-1.2 3.1-1.3 3.1-1.5 2.9-1.7 3.1-1.8 2.8-4 5.5-4.5 5.1-2.6 2.5-2.5 2.4-5.5 4.3-5.7 3.7-3 1.6-3.2 1.6-3.1 1.4-3.2 1.2-6.3 1.9-3.3 0.8-3.2 0.5-3.3 0.4-3.2 0.2-3.2 0.1-3.1-0.1-3.2-0.4-3-0.4-3-0.6-3-0.9-3-1-2.7-1.1-2.5-1.2-2.7-1.5-2.3-1.5-2.5-1.9-2.3-2-2-1.9-3.1-3.5-0.1-0.2-0.5-0.5 0-0.2-5.6 5.5-5.5 5.9-5.2 6z" fill="#1c3806"/><path d="M451.1 291.8l-0.1-127.7 123.5 0-8.6 8.7-8 9.1 0 0.2 0.5 0.2 2.5 1.6 3.3 2.4 2.4 1.9 2.4 2.4 2.2 2.5 2.1 2.8 1.8 2.9 1.7 3 1.3 3.1 1.2 3.4 0.9 3.4 0.7 3.6 0.4 3.4 0.2 3.7-0.1 3.7-0.3 3.8-0.9 5.2-1.3 5.1-1.8 5.2-2.2 5-2.7 4.9-3.1 4.8-3.5 4.5-3.7 4.1-2.6 2.5-2.5 2.4-2.7 2.2-2.8 2.1-5.9 3.7-3 1.7-3.2 1.5-3.1 1.4-3.2 1.2-3.2 1-3.3 0.9-3.3 0.7-3.2 0.6-3.2 0.3-3.3 0.2-3.3 0-3.2-0.2-3.1-0.3-3-0.5-3-0.7-2.9-0.8-2.8-1-2.7-1.2-2.6-1.3-2.4-1.4-2.5-1.6-2.3-1.8-2.2-1.9-2-2-2.2-2.5-1.8-2.3-0.3-0.2-5.2 4.9-5.1 5-4.9 5.1z" fill="#1d3b06"/><path d="M562.2 267l-4.1 4.1-4.5 3.9-4.7 3.4-5.2 3.2-5.2 2.6-5.3 2.2-5.5 1.8-5.4 1.2-4 0.6-3.9 0.4-4 0.1-3.8-0.2-3.7-0.4-3.6-0.7-3.7-0.9-3.5-1.2-3.2-1.4-3.3-1.6-3-1.9-3-2.1-2.5-2.2-2.4-2.4-2.5-2.9-2.1-2.9-4.9 4.2-4.9 4.5-4.7 4.5-4.5 4.7-0.1-123.5 119.6 0-7.5 8.3-7.1 8.5 0.1 0.2 3.2 1.8 2.9 2 2.6 2 2.5 2.4 2.2 2.3 2.2 2.6 1.9 2.8 1.7 2.9 1.4 3 1.3 3.2 1 3.3 0.8 3.4 0.5 3.4 0.4 3.6 0 3.6-0.1 3.7-0.7 5.1-1.2 5.4-1.6 5.3-2.2 5.2-2.5 5-3 4.8-3.4 4.7z" fill="#1f3e06"/><path d="M561.6 266.2l-4.4 4.4-4.7 4-4.9 3.5-5.2 3.1-5.4 2.7-5.6 2.2-5.7 1.7-5.8 1.2-4 0.5-3.8 0.2-3.8 0-3.7-0.2-3.7-0.5-3.6-0.8-3.5-1-3.5-1.3-3.2-1.4-3.1-1.8-2.8-1.8-2.8-2.1-2.5-2.3-2.3-2.4-2.5-3.2-1.8-2.6-0.4-0.3-9.1 7.6-4.4 4-4.3 4.1-0.1-119.6 116 0-6.8 7.9-6.2 8.1 3.4 1.8 3 1.9 2.7 1.9 2.3 2.1 2.4 2.3 2.2 2.5 1.9 2.6 1.8 2.9 1.7 3.1 1.3 3.2 1.1 3.2 0.9 3.3 0.7 3.5 0.4 3.5 0.2 3.5-0.1 3.7-0.6 5.3-1 5.5-1.6 5.4-2.1 5.3-2.7 5.3-3 5-3.5 4.9z" fill="#214107"/><path d="M560.8 265.7l-4.5 4.5-4.9 4-5.2 3.7-5.5 3.2-5.6 2.7-5.8 2.1-5.9 1.6-5.8 1.1-3.8 0.3-3.9 0.2-3.8-0.2-3.7-0.3-3.6-0.7-3.6-0.8-3.5-1.1-3.3-1.4-3.1-1.6-3.1-1.8-2.8-1.9-2.6-2.3-2.5-2.4-2.4-2.7-2.2-3-1.4-2.1-0.2-0.6-0.2 0-7.7 6-4.6 3.9-4.5 3.9-0.1-115.9 112.5 0-6.1 7.7-5.3 7.4 0.7 0.3 5.6 3.1 2.7 1.8 2.5 2 2.5 2.4 2.3 2.4 2 2.6 1.9 2.8 1.6 2.8 1.5 3.2 1.2 3.1 1 3.4 0.7 3.3 0.5 3.5 0.3 3.5 0 3.7-0.4 5.5-1 5.6-1.6 5.7-2 5.5-2.7 5.4-3.1 5.3-3.5 4.9z" fill="#224507"/><path d="M559.9 265.1l-4.5 4.5-5 4.1-5.3 3.7-5.7 3.3-5.8 2.7-6 2.1-6 1.5-6 1-3.8 0.3-3.9 0-3.6-0.2-3.7-0.5-3.7-0.7-3.3-0.9-3.4-1.1-3.3-1.5-3.1-1.7-2.9-1.8-2.8-2.1-2.7-2.3-2.3-2.4-2.2-2.7-2.2-3.1-1.6-2.8-0.2 0-7.1 5.1-8.7 6.9-0.1-112.4 109.1 0-5.2 7.1-4.8 7.2 0.3 0.1 0.8 0.4 0.7 0.3 4.3 2.2 2.9 1.9 2.7 1.9 2.5 2.2 2.3 2.4 2.2 2.4 2 2.9 1.7 2.8 1.5 3 1.3 3.2 1.1 3.2 0.8 3.4 0.6 3.4 0.4 3.5 0.1 3.6-0.3 5.7-0.9 5.9-1.5 5.8-2.1 5.6-2.6 5.6-3.2 5.3-3.7 5.1z" fill="#244807"/><path d="M559.1 264.5l-4.8 4.7-5.2 4.2-5.3 3.7-5.9 3.3-6 2.6-6.1 2.1-6.2 1.4-6.2 0.9-3.8 0.1-3.9 0-3.6-0.3-3.7-0.6-3.5-0.8-3.4-1-3.4-1.4-3-1.4-3-1.7-2.9-2-2.6-2.1-2.5-2.4-2.4-2.5-2.1-2.9-2-3.1-1.5-2.7-7.7 5.1-7.3 5.5 0-109.1 105.7 0-4.4 6.6-4.3 6.9 4.1 1.8 2.6 1.4 2.8 1.6 2.6 1.9 2.4 1.9 2.5 2.4 2.2 2.5 2 2.6 1.8 2.9 1.7 3 1.3 3 1.1 3.1 0.9 3.4 0.7 3.3 0.5 3.5 0.2 3.5-0.2 5.9-0.4 2.9-0.5 3.1-1.4 5.9-2.1 5.8-2.7 5.7-3.2 5.6-3.8 5.3z" fill="#254b07"/><path d="M558.2 263.8l-4.8 4.8-5.3 4.3-5.7 3.8-5.8 3.2-6.2 2.7-3.2 1.1-3.1 0.9-3.2 0.8-3.2 0.6-3.1 0.4-3.2 0.3-3.8 0.1-3.7-0.2-3.6-0.4-3.5-0.6-3.5-0.9-3.4-1.1-3.2-1.4-3.2-1.6-3-1.9-2.8-1.9-2.5-2.2-2.5-2.5-2.1-2.6-2-2.8-1.7-2.8-1.6-3.2-6.6 4-7.6 5.3 0-105.9 102.6 0-4 6.3-3.7 6.5 3.4 1.3 3.3 1.6 2.7 1.4 2.8 1.9 2.6 2 2.6 2.3 2.4 2.5 2 2.5 1.9 2.9 1.6 2.8 1.5 3 1.2 3.1 1 3.4 0.8 3.3 0.5 3.4 0.2 3.4 0.1 3.1-0.1 2.9-0.3 3.1-0.5 2.9-1.3 6.1-2.1 5.9-2.6 5.9-3.3 5.7-3.8 5.4z" fill="#274e08"/><path d="M557.4 263.1l-4.9 4.8-2.6 2.2-2.8 2.2-5.7 3.8-3 1.7-3.2 1.6-3.1 1.4-3.2 1.3-3.2 1-3.3 1-3.2 0.7-3.3 0.6-3.2 0.3-3.1 0.2-3.7 0-3.6-0.2-3.7-0.5-3.5-0.7-3.4-0.9-3.3-1.2-3.3-1.5-3-1.6-2.9-1.9-2.8-2.2-2.5-2.3-2.3-2.5-2-2.5-1.9-2.7-2-3.6-1.2-2.5-0.1-0.3-6.6 3.8-6.7 4.3 0-102.8 99.5 0-3.5 6.1-3.2 6.1 3.7 1.3 3.1 1.3 2.9 1.5 2.8 1.7 2.7 2 2.6 2.1 2.3 2.4 2.2 2.5 1.9 2.6 1.8 2.9 1.5 3 1.3 3.1 1.1 3.2 0.8 3.4 0.6 3.3 0.4 3.5 0.1 3-0.1 3-0.2 3-0.4 3.1-0.6 3.1-0.7 3.1-1 3.1-1.1 3.1-1.2 3-1.4 3-1.6 2.9-1.7 2.9-3.9 5.5z" fill="#295108"/><path d="M556.5 262.4l-2.4 2.5-2.7 2.5-2.7 2.2-2.8 2.2-2.8 2-3 1.9-3.2 1.7-3 1.5-3.2 1.4-3.3 1.3-3.2 1-3.3 0.9-3.3 0.7-3.3 0.5-3.4 0.3-3.1 0.1-3.7-0.1-3.7-0.3-3.6-0.5-3.5-0.9-3.4-1-3.1-1.2-3.2-1.6-3-1.7-2.7-1.9-2.6-2.1-2.5-2.4-2.2-2.5-2-2.7-1.9-2.9-1.7-3.2-1.4-3.3-6.4 3.4-6.1 3.6 0-99.7 96.5 0-3 5.7-2.8 5.8 0.1 0.2 0.5 0 0.7 0.3 1.5 0.4 4 1.6 2.8 1.3 3 1.7 2.7 1.8 2.7 2.2 2.4 2.1 2.3 2.6 2 2.6 1.9 2.9 1.6 2.9 1.4 3.1 1.1 3.1 1 3.4 0.6 3.3 0.5 3.5 0.1 3 0 3.1-0.1 3.1-0.4 3.1-0.6 3.2-0.7 3.1-0.9 3.2-1.1 3.1-1.2 3.1-1.4 3-1.6 3-1.8 2.9-3.8 5.6-2.2 2.6z" fill="#2a5408"/><path d="M555.6 261.8l-2.5 2.5-2.7 2.5-2.7 2.3-2.9 2.1-2.9 2-3.2 2-3.1 1.7-3.2 1.5-3.2 1.4-3.3 1.2-3.3 1-3.3 0.8-3.4 0.7-3.3 0.4-3.3 0.3-3.4 0.1-3.6-0.2-3.7-0.4-3.5-0.6-3.5-0.9-3.5-1.2-3.2-1.4-3-1.6-2.8-1.8-2.7-2-2.6-2.3-2.4-2.4-2.1-2.7-1.9-2.6-1.6-2.9-1.6-3.2-1.1-2.9-0.2-0.1 0-0.3-6 2.9-5.8 3.2 0-96.8 93.5 0-2.6 5.5-2.5 5.5 3.9 1.1 3.3 1.2 3 1.4 2.9 1.4 2.8 1.9 2.7 2 2.5 2.1 2.2 2.4 2.1 2.5 2 2.8 1.6 2.9 1.5 2.9 1.2 3.2 1 3.2 0.8 3.3 0.5 3.5 0.2 3 0.1 3.2-0.1 3.1-0.3 3.2-0.5 3.2-0.8 3.3-0.8 3.2-1.1 3.1-1.2 3.2-1.4 3-1.7 3.2-1.7 3-2 2.9-2 2.8-2.2 2.8z" fill="#2c5809"/><path d="M554.8 261l-2.6 2.6-2.7 2.5-2.8 2.3-2.9 2.2-3 2-3.2 2-3.1 1.6-3.2 1.6-3.4 1.4-3.3 1.1-3.3 1-3.5 0.8-3.5 0.6-3.4 0.5-3.3 0.2-3.4 0-3.6-0.3-3.7-0.5-3.5-0.7-3.4-1-3.2-1.2-3.2-1.4-3-1.7-2.9-1.9-2.6-2.1-2.5-2.3-2.4-2.6-2-2.6-1.8-2.9-1.5-2.8-1.5-3.5-1.1-3.2-5.6 2.6-5.6 2.7 0-93.9 90.6 0-4.4 10.5 0.2 0.1 0.6 0.1 3.5 0.9 3.1 1.1 2.8 1.1 3.1 1.5 2.8 1.7 2.9 2 2.4 2 2.4 2.3 2.2 2.5 2 2.7 1.7 2.8 1.6 3 1.3 3.2 1.1 3.1 0.8 3.4 0.6 3.3 0.3 3.2 0.1 3.1-0.1 3.2-0.2 3.2-0.5 3.3-0.6 3.2-0.9 3.3-1.1 3.3-1.2 3.2-1.5 3.1-1.5 3.1-1.8 3-1.9 3-2.1 2.8-2.2 2.9z" fill="#2d5b09"/><path d="M553.8 260.3l-2.6 2.6-2.8 2.5-2.8 2.4-3 2.2-3.1 2.1-3.1 1.8-3.3 1.8-3.3 1.5-3.4 1.4-3.5 1.1-3.3 1-3.4 0.7-3.5 0.6-3.3 0.3-3.5 0.2-3.3-0.1-3.7-0.3-3.6-0.6-3.5-0.8-3.4-1.1-3.1-1.2-3.2-1.6-2.9-1.7-2.8-2-2.5-2.1-2.3-2.3-2.2-2.5-2-2.8-1.6-2.7-1.5-3-1.2-2.8-1.2-3.5-0.1-0.1 0-0.6-0.2-0.1-10.5 4.6 0-91.1 87.7 0-3.9 10.1 3.8 0.9 3.7 1 3.2 1.1 2.9 1.4 2.8 1.5 2.8 1.8 2.6 2 2.6 2.4 2.3 2.4 2 2.6 1.9 2.8 1.6 3 1.5 3.1 1.1 3.2 0.9 3.4 0.6 3.3 0.4 3.1 0.2 3.2 0 3.2-0.3 3.3-0.4 3.4-0.7 3.3-0.8 3.3-1 3.2-1.3 3.3-1.4 3.2-1.6 3.1-1.7 3.1-2 2.9-2.1 3.1-2.3 2.8z" fill="#2f5e09"/><path d="M552.8 259.6l-2.7 2.6-2.7 2.5-3 2.5-3 2.2-3 2-3.3 1.9-3.4 1.8-3.3 1.5-3.4 1.3-3.4 1.1-3.5 0.9-3.5 0.8-3.5 0.5-3.4 0.3-3.5 0-3.3-0.1-3.6-0.4-3.5-0.6-3.5-0.9-3.4-1.2-3.1-1.3-3-1.6-2.9-1.8-2.8-2.2-2.5-2.2-2.2-2.3-2.1-2.7-1.9-2.8-1.6-3-1.4-2.9-1.2-3.2-1.1-3.9-10 3.9 0-88.2 84.8 0-3.4 9.8 2.8 0.5 4.5 1 3.1 1 3.3 1.4 3 1.4 3.1 1.9 2.7 2 2.5 2.1 2.3 2.4 2.1 2.5 2 2.8 1.7 2.9 1.5 3 1.3 3.3 0.9 3.3 0.8 3.4 0.4 3.1 0.2 3.2 0.1 3.3-0.2 3.4-0.4 3.3-0.7 3.3-0.8 3.4-1 3.3-1.2 3.3-1.4 3.2-1.6 3.1-1.8 3.2-2 3-2.1 3-2.3 2.9z" fill="#31610a"/><path d="M551.9 258.8l-2.8 2.7-2.8 2.6-2.9 2.3-3.2 2.3-3.1 2.1-3.3 1.9-3.4 1.7-3.3 1.5-3.5 1.3-3.5 1.1-3.5 0.9-3.5 0.7-3.5 0.4-3.5 0.2-3.5 0.1-3.4-0.3-3.6-0.4-3.5-0.8-3.4-0.9-3.3-1.2-3.1-1.5-3-1.7-2.9-2-2.6-2.1-2.5-2.5-2.2-2.5-1.9-2.4-1.8-3-1.5-3-1.1-2.8-1.4-4.4-0.6-2.2 0-0.6-0.2-0.2-9.5 3.4 0-85.4 81.9 0-2.9 9.5 0.3 0.2 2.5 0.2 5.2 1.1 3.4 1 3.4 1.3 3.1 1.5 3.1 1.9 2.8 1.9 2.7 2.4 3.2 3.3 2.9 3.9 2.3 3.9 1.9 4.4 1.4 4.5 0.9 4.8 0.5 5-0.1 5-0.6 5.2-1 5-1.6 5.1-2 5.1-2.5 4.8-3 4.8-3.3 4.5z" fill="#32640a"/><path d="M550.8 258.1l-4.2 4.1-4.6 3.7-4.8 3.4-5.1 3-5.2 2.4-5.3 2-5.3 1.4-5.5 1-5.5 0.5-5.4-0.1-5.1-0.7-5-1.1-4.7-1.7-4.5-2.2-4.2-2.7-3.6-3-2.4-2.4-2.1-2.6-2-2.9-1.7-3-1.4-2.8-1.1-3.2-1-3.6-0.9-3.8-9.1 2.9 0-82.6 79 0-2.5 9.3 0.7 0.2 1.5 0.1 3 0.4 3.4 0.6 3.7 1.1 3.2 1.1 3.6 1.7 3.2 1.8 3 2.2 2.9 2.5 3.2 3.3 2.7 3.7 2.3 4 1.9 4.3 1.4 4.5 0.9 4.9 0.4 4.8-0.1 5-0.6 5-1.1 5.1-1.5 5.1-2.1 4.9-2.5 4.9-3 4.8-3.3 4.5z" fill="#34680a"/><path d="M549.8 257.2l-4.2 4.1-4.6 3.8-4.8 3.3-5 2.9-5.1 2.5-5.3 1.9-5.4 1.5-5.5 0.9-5.3 0.4-5.4-0.1-5.1-0.6-4.9-1.2-4.8-1.7-4.3-2.1-4-2.6-3.7-3.1-2.5-2.6-2.1-2.7-2-3-1.7-3.1-1.4-3-1.1-3.5-0.9-3.4-0.6-3.1 0-0.9-0.2-0.5-8.8 2.5 0-79.7 76 0-2.1 9.3 4.6 0.3 4.5 0.7 4 1 3.5 1.2 3.7 1.6 3.3 1.9 3.3 2.3 2.9 2.5 3.2 3.4 2.7 3.6 2.3 4 1.9 4.4 1.3 4.4 0.9 4.7 0.4 4.9-0.1 4.9-0.6 5.1-1.1 4.9-1.6 5.1-2.1 4.9-2.4 4.8-2.8 4.6-3.4 4.5z" fill="#356b0b"/><path d="M548.8 256.4l-4.2 4.1-4.5 3.7-4.7 3.2-5 2.9-5.1 2.5-5.2 1.9-5.3 1.4-5.4 1-5.3 0.4-5.2-0.1-5.1-0.6-4.9-1.2-4.6-1.6-4.4-2.1-4-2.6-3.6-3.1-2.5-2.6-2.4-2.9-2-3.1-1.8-3.5-1.4-3.3-1.1-3.9-0.9-4.3-0.5-3.8-8.6 2.2 0-76.9 73 0-1.8 9.3 4.5 0.2 4.7 0.5 4.1 0.8 4.3 1.4 3.6 1.4 3.7 2.1 3.5 2.3 3.1 2.6 3.1 3.4 2.8 3.6 2.2 4 1.8 4.2 1.4 4.5 0.8 4.7 0.4 4.8-0.1 4.9-0.6 4.9-1.1 5.1-1.6 4.9-2 4.9-2.5 4.8-2.8 4.5-3.2 4.4z" fill="#376e0b"/><path d="M547.7 255.6l-4.1 4-4.5 3.6-4.7 3.3-4.8 2.8-5.2 2.5-5.2 1.9-5.2 1.4-5.2 0.9-5.2 0.4-5.2-0.1-5-0.6-4.8-1.1-4.5-1.6-4.4-2.1-4-2.6-3.6-3-2.7-2.8-2.5-3.2-2-3.2-1.8-3.8-1.4-3.6-1-3.7-0.6-3.9-0.3-3.9-0.2-1-8.5 1.8 0-73.9 69.9 0-1.5 9.5 0.8-0.1 4.8 0 4.4 0.4 4.5 0.9 4.1 1.1 4.2 1.7 3.8 2 3.4 2.3 3.4 2.9 3 3.2 2.7 3.6 2.2 3.8 1.8 4.3 1.3 4.4 0.8 4.5 0.4 4.8-0.1 4.9-0.6 4.9-1.1 4.9-1.5 5-2 4.8-2.4 4.7-2.9 4.5-3.2 4.3z" fill="#39710b"/><path d="M546.6 254.8l-4 3.8-4.4 3.6-4.6 3.3-4.8 2.8-5 2.3-5.3 2-5.2 1.4-5.2 0.9-5.2 0.4-5.1-0.1-5-0.6-4.7-1.1-4.5-1.6-4.4-2.1-3.8-2.5-3.5-3-2.8-2.9-2.5-3.3-2.2-3.7-1.6-3.6-1.4-3.8-1-4.3-0.5-3.8-0.3-5.4-8.5 1.5 0-70.9 66.7 0-1.2 9.6 5-0.1 5.2 0.1 4.7 0.7 4.7 1.2 4.4 1.6 4 2.1 3.8 2.4 3.4 2.9 3 3.2 2.6 3.6 2.2 3.9 1.8 4.1 1.3 4.4 0.8 4.4 0.4 4.7-0.1 4.9-0.6 4.8-1.1 5-1.5 4.8-2 4.9-2.4 4.6-2.9 4.5-3.2 4.4z" fill="#3a740c"/><path d="M545.4 254l-4 3.8-4.4 3.6-4.6 3.2-4.8 2.8-5 2.3-5 1.8-5.2 1.4-5.2 0.9-5.1 0.4-5-0.1-4.9-0.7-4.6-1.1-4.5-1.6-4.2-2.1-3.8-2.5-3.5-2.9-3-3.3-2.5-3.4-2.2-3.8-1.6-3.9-1.2-3.8-0.9-4.1-0.3-2.8-0.1-2.4 0-5.1-8.7 1.3 0-67.8 63.4 0-0.9 10 1.2 0 0.1-0.1 3.8-0.3 3.4-0.1 2.9 0.1 5.3 0.7 4.2 1 4.7 1.7 4.1 2 3.9 2.5 3.5 3 3 3.1 2.6 3.6 2.2 3.8 1.7 4.1 1.3 4.4 0.8 4.5 0.4 4.6-0.2 4.7-0.6 4.9-1 4.8-1.6 4.8-1.9 4.7-2.5 4.7-2.8 4.4-3.2 4.3z" fill="#3c780c"/><path d="M544.3 253.1l-4 3.8-4.3 3.5-4.6 3.2-4.7 2.7-4.9 2.3-5 1.8-5 1.4-5.2 0.8-5 0.4-5-0.1-4.9-0.6-4.6-1.2-4.4-1.5-4.1-2.1-3.9-2.5-3.3-2.9-3-3.2-2.6-3.8-2.2-4-1.7-4.2-1.1-4.2-0.7-4.1-0.3-4.9 0.1-3.1 0.2-3-9 1 0-64.5 59.9 0-0.3 5.3-0.2 5.4 0.4-0.2 0.7 0 0.1-0.1 5-0.6 5.1-0.1 4.9 0.3 3.2 0.5 2.2 0.5 4.8 1.5 2.4 1 2.3 1.1 2.3 1.4 2 1.3 1.9 1.5 1.9 1.7 2.9 3.1 2.6 3.6 2.1 3.8 1.7 4 1.2 4.1 0.8 4.6 0.4 4.6-0.2 4.7-0.6 4.8-1 4.7-1.5 4.6-2 4.8-2.4 4.6-2.8 4.3-3.2 4.2z" fill="#3d7b0c"/><path d="M543.1 252.2l-3.9 3.7-4.3 3.5-4.3 3-4.7 2.7-4.8 2.3-5 1.8-5 1.4-5 0.8-5 0.4-4.9-0.1-4.8-0.6-4.5-1.1-4.3-1.5-4-2-3.7-2.4-3.5-2.9-3.1-3.5-1.5-2-1.4-2-2.1-4.2-1.7-4.6-0.7-2.5-0.5-2.7-0.5-4.9 0-3.4 0.4-5.5 0.1-0.1 0-0.9 0.2-0.5-9.5 0.7 0-61 56.2 0-0.2 5.6 0.1 5.7 5.9-1 2.6-0.3 3.2-0.2 3 0 2.7 0.2 2.7 0.3 2.7 0.5 2.7 0.7 2.6 0.8 2.5 1 2.4 1.2 2.3 1.3 2 1.4 2.2 1.6 1.9 1.7 2.9 3.1 2.4 3.4 2.2 3.8 1.7 4 1.2 4.2 0.7 4.3 0.4 4.5-0.2 4.7-0.6 4.6-1 4.8-1.5 4.6-2 4.6-2.3 4.6-2.8 4.3-3.1 4.1z" fill="#3f7e0d"/><path d="M541.9 251.3l-3.8 3.6-4.2 3.4-4.4 3.1-4.6 2.6-4.8 2.2-4.8 1.8-5 1.4-4.9 0.8-5 0.4-4.8-0.1-4.7-0.7-4.5-1-4.1-1.5-4-2-3.7-2.5-3.4-2.8-1.6-1.7-1.7-2-1.5-2-1.3-2.2-1.2-2.2-1-2.2-1-2.8-0.6-2.3-0.5-2.3-0.5-2.9-0.3-5 0.1-3 0.3-3.1 0.9-5.3-10.2 0.4 0-57.3 52.3 0 0 6.1 0.2 6.2 0.4 0 1.9-0.6 4.4-0.9 3.2-0.5 2.9-0.2 2.8-0.1 2.9 0 3 0.3 2.7 0.4 2.8 0.6 2.8 0.8 2.3 0.9 2.6 1.1 2.5 1.4 2.3 1.5 2.2 1.6 2.1 1.9 2.8 3 2.5 3.5 2.1 3.6 1.6 3.9 1.2 4.1 0.8 4.6 0.3 4.4-0.2 4.6-0.6 4.6-1 4.7-1.6 4.6-1.9 4.5-2.3 4.4-2.7 4.3-3.1 4z" fill="#41810d"/><path d="M540.8 250.3l-3.8 3.6-4.1 3.4-4.4 3-4.6 2.6-4.7 2.1-4.8 1.8-4.8 1.3-4.9 0.8-4.8 0.4-4.6-0.1-4.7-0.6-4.4-1-4.1-1.5-4-2-3.6-2.4-3.2-2.7-1.9-1.9-1.6-2-1.5-2.1-1.4-2.2-1.3-2.7-1-2.4-0.9-2.5-0.6-2.7-0.5-2.7-0.3-3.1-0.2-2.8 0.1-2.6 0.2-2.7 0.5-3.4 0.9-4.3 0.1-0.1 0.2-1.1 0.2-0.1 0-0.4-5.5 0-5.7 0.2 0-53.3 48 0 0.2 7 0.4 6.6 0.4 0.1 0.1-0.2 0.4 0 0.1-0.2 6-1.7 3.1-0.6 3.3-0.5 3.3-0.3 3 0 3.3 0.1 2.8 0.4 2.9 0.5 3.1 0.8 2.4 0.8 2.8 1.2 2.5 1.3 2.4 1.5 2.3 1.7 2.3 2 2.8 3 2.4 3.3 2.1 3.7 1.6 3.8 1.2 4.1 0.7 4.2 0.3 4.6-0.1 4.4-0.6 4.6-1.1 4.6-1.5 4.5-1.9 4.5-2.3 4.4-2.6 4.1-3 4z" fill="#42840d"/><path d="M539.4 249.4l-3.7 3.5-4.1 3.4-4.2 2.8-4.5 2.6-4.7 2.2-4.6 1.7-4.7 1.2-4.8 0.8-4.9 0.4-4.6-0.1-4.5-0.6-4.4-1.1-4.1-1.5-3.9-1.9-3.5-2.4-3.1-2.7-2-2.1-1.7-2.1-1.6-2.4-1.4-2.4-1.1-2.5-1-2.7-0.9-3-0.5-2.6-0.4-2.8-0.2-3 0.1-3 0.2-3 0.5-3.4 0.6-2.9 1.4-5.1 0.2-0.1 0-0.4 0.1-0.1 0-0.4 0.4-0.4 0-0.3-6.4-0.2-6.3 0.1 0-48.8 43.2 0 0.4 7.8 0.7 7.7 0.4 0 2-1 5-1.7 3.5-1 3.2-0.6 3.6-0.6 3.2-0.2 3.3 0 3.3 0.2 3.4 0.6 2.9 0.6 3.2 1 2.8 1.2 2.7 1.3 2.7 1.7 2.2 1.6 2.3 2.1 2.7 2.9 2.4 3.4 2 3.5 1.5 3.8 1.2 4 0.7 4.2 0.3 4.3-0.2 4.5-0.6 4.5-1.1 4.5-1.4 4.5-1.9 4.4-2.3 4.3-2.7 4.1-3 4z" fill="#44870e"/><path d="M538.1 248.4l-3.7 3.6-4 3.2-4.2 2.8-4.3 2.5-4.5 2.1-4.6 1.6-4.7 1.3-4.7 0.8-4.6 0.3-4.5-0.1-4.5-0.6-4.2-1-4-1.4-3.9-1.9-3.5-2.3-3.1-2.8-2.2-2.3-1.8-2.3-1.7-2.6-1.3-2.6-1.2-2.7-1-3.1-0.6-2.9-0.5-3.4-0.2-3 0-3.4 0.3-3.7 0.5-3 0.9-3.6 0.9-3.1 1.5-3.9 1.4-3-7.7-0.1-7.3 0 0-43.7 37.9 0 0.4 8.8 0.9 9.4 0.3 0 0.3-0.4 1.2-0.5 1-0.6 4.3-1.9 4-1.5 3.3-1 3.8-0.8 3.3-0.5 4-0.3 3.8 0 3.5 0.3 3.4 0.6 3.2 0.9 3.2 1.1 3.2 1.6 2.8 1.6 2.5 1.9 2.5 2.1 2.7 3 2.3 3.2 1.9 3.5 1.6 3.8 1 3.9 0.7 4.1 0.3 4.4-0.2 4.3-0.6 4.5-1 4.3-1.5 4.4-1.8 4.3-2.3 4.1-2.6 4.2-3 3.9z" fill="#458b0e"/><path d="M536.8 247.4l-3.7 3.5-3.8 3.1-4 2.8-4.4 2.4-4.5 2.1-4.5 1.6-4.5 1.2-4.6 0.8-4.5 0.3-4.5-0.1-4.4-0.5-4.1-1-4-1.5-3.7-1.9-3.5-2.3-3-2.6-2.4-2.5-2-2.7-1.6-2.7-1.5-3.2-1.2-3.2-0.8-3.3-0.6-3.6-0.2-3.9 0.1-3.6 0.4-3.3 0.6-3.6 1.2-4.3 1.5-4 1.6-3.6 2-3.7 1.1-1.9 0.3-0.3 0-0.1 0.3-0.4 0-0.1 0.4-0.4 0-0.1-5.9 0.4-13.3 0.6 0-37.7 31.6 0 0.6 17.1 0 5.7 0.5-0.1 1.6-1.3 2.5-1.7 3.7-2.1 4-2 3.7-1.4 3.5-1.2 4-1 4.1-0.7 4.2-0.3 4 0 4 0.5 3.7 0.7 3.5 1.1 3.6 1.5 3 1.7 2.9 2 2.7 2.3 2.6 2.9 2.3 3.1 1.9 3.5 1.5 3.7 1.1 3.8 0.7 4.2 0.3 4.1-0.2 4.4-0.6 4.3-1 4.4-1.5 4.3-1.8 4.3-2.3 4.2-2.6 4-2.9 3.8z" fill="#478e0e"/><path d="M451.1 194.2l0-30.1 24 0-0.5 9-0.3 3.3-0.5 2.7-0.5 2.3-0.8 2.2-0.9 1.8-1 1.5-1.4 1.5-1.5 1.1-1.8 1.1-2 0.9-2.4 0.8-2.8 0.6zM475.9 257.9l-3.3-2.5-2.9-2.7-2.5-3.2-2.1-3.5-1.7-3.8-1.2-3.8-0.8-4.2-0.3-4.3 0.1-4.3 0.5-4.2 1-4.4 1.5-4.6 1.9-4.2 2.5-4.6 2.6-4 3.1-4 4.3-4.5 3.1-2.7 3.5-2.7 4.4-2.8 4.4-2.3 4.7-2 4.7-1.5 4.5-1 4.5-0.5 4.5-0.2 4.3 0.4 4.3 0.8 3.9 1.1 3.8 1.7 3.4 2 3.3 2.5 2.7 2.7 2.3 2.8 2 3.2 1.7 3.5 1.3 3.6 0.8 3.9 0.5 4 0.1 4-0.4 4.1-0.7 4.2-1.1 4.2-1.5 4.1-2 4.2-2.2 3.9-2.6 3.8-2.9 3.6-3.1 3.4-3.5 3.1-3.6 2.9-3.9 2.6-4 2.3-4.2 1.9-4.2 1.5-4.1 1.2-4.4 0.8-4.1 0.4-4.2 0-4.2-0.4-3.8-0.8-3.9-1.2-3.5-1.5z" fill="#49910f"/><path d="M451.1 183.6l0-19.5 14.3 0-0.8 3.8-1.1 3.4-1.3 2.8-1.5 2.5-1.9 2.1-2.2 1.9-2.5 1.6zM475.9 256.6l-3.1-2.4-2.9-2.7-2.5-3.2-2-3.2-1.6-3.7-1.3-4-0.8-4-0.3-4.3 0.2-4.7 0.6-4.5 1-4.1 1.5-4.3 1.9-4.1 2.1-4 2.7-4 3.3-4.1 3.5-3.7 3.4-3 4.2-3.2 3.9-2.5 4.2-2.1 4.4-1.9 4.1-1.3 4.4-1 4.6-0.6 4.4-0.2 4.3 0.3 4.2 0.8 3.9 1.2 3.7 1.6 3.5 2 3.1 2.4 2.7 2.6 2.3 2.9 2 3.1 1.6 3.4 1.2 3.5 0.9 3.8 0.4 3.9 0.1 3.9-0.4 4.1-0.7 4.1-1.1 4.2-1.5 4-1.9 4-2.2 3.8-2.5 3.7-2.8 3.5-3.1 3.3-3.4 3.2-3.6 2.8-3.8 2.5-3.8 2.2-4 1.8-4.2 1.5-4.1 1.2-4.2 0.8-4.1 0.4-4.2 0-4-0.4-3.9-0.8-3.6-1.1-3.5-1.6z" fill="#4a940f"/><path d="M451.1 165.5l0-1.4 0.9 0zM475.8 255.1l-3.1-2.4-2.8-2.7-2.3-2.9-2-3.4-1.6-3.6-1.2-3.7-0.7-4-0.3-4 0.1-4.1 0.5-4.1 1-4.2 1.5-4.5 1.9-4.2 2.3-4.2 2.6-4 2.7-3.4 3.1-3.3 3.4-3.1 4.3-3.4 4.2-2.6 4.2-2.2 4.3-1.9 4.2-1.3 4.5-1 4.3-0.5 4.4-0.1 4 0.3 4.1 0.7 3.8 1.2 3.6 1.6 3.4 2 3 2.3 2.6 2.5 2.3 2.9 1.8 2.9 1.6 3.4 1.2 3.5 0.8 3.6 0.5 3.9 0 3.8-0.3 4-0.8 4-1.1 4-1.5 4-1.8 3.9-2.2 3.8-2.5 3.6-2.7 3.5-3.1 3.2-3.3 3-3.5 2.7-3.6 2.5-3.8 2.1-4 1.9-4 1.4-4.2 1.2-4.2 0.7-4 0.3-4 0-3.8-0.4-3.7-0.7-3.6-1.2-3.4-1.5z" fill="#4c970f"/><path d="M476.1 253.8l-3-2.2-2.7-2.6-2.3-2.8-2-3.3-1.6-3.5-1.2-3.6-0.8-3.9-0.3-4 0.1-4 0.5-4 1-4.2 1.3-4.1 1.6-3.9 2.2-4.1 2.5-3.8 3-3.9 3.2-3.4 3.3-3.1 3.9-3 3.8-2.5 4-2.1 4.2-1.9 4.6-1.5 4.2-0.9 4.1-0.6 4.4-0.1 4.2 0.3 3.8 0.6 3.9 1.2 3.5 1.5 3.1 1.9 3.1 2.3 2.5 2.5 2.2 2.6 1.9 3.1 1.5 3.1 1.2 3.4 0.8 3.4 0.4 3.7 0.1 3.9-0.3 3.8-0.7 3.8-1 4-1.4 3.9-1.8 3.8-2.1 3.6-2.4 3.7-2.7 3.4-2.9 3.1-3.2 3-3.5 2.7-3.5 2.4-3.7 2.1-3.9 1.8-4 1.5-4 1.1-4 0.8-4 0.3-3.8 0.1-3.8-0.4-3.7-0.7-3.5-1.1-3.3-1.5z" fill="#4d9b0f"/><path d="M476.2 252.4l-3-2.2-2.6-2.6-2.3-2.9-1.9-3-1.5-3.3-1.1-3.6-0.8-3.7-0.3-4 0.1-3.9 0.5-3.9 1-4.3 1.3-4 1.6-3.8 2.2-4 2.4-3.6 3-3.8 3.1-3.4 3.3-3 3.4-2.6 3.9-2.6 4-2.1 3.8-1.7 4-1.3 4.5-1.1 4.3-0.6 4-0.1 4 0.3 3.8 0.6 3.5 1.1 3.5 1.4 3.2 1.9 2.9 2.1 2.5 2.4 2.2 2.6 1.8 2.9 1.5 3.1 1.2 3.4 0.8 3.3 0.4 3.7 0.1 3.6-0.3 3.7-0.6 3.9-1 3.8-1.4 3.8-1.7 3.7-2.1 3.6-2.3 3.5-2.5 3.2-2.8 3.1-3.2 2.9-3.3 2.7-3.5 2.3-3.5 2.1-3.9 1.8-3.8 1.4-3.9 1.1-3.8 0.8-3.8 0.4-3.9 0-3.6-0.3-3.5-0.7-3.5-1-3.4-1.4z" fill="#4f9e10"/><path d="M476.1 250.6l-2.9-2.1-2.5-2.5-2.1-2.7-1.9-3-1.5-3.4-1-3.3-0.7-3.7-0.3-3.8 0.1-3.9 0.6-3.9 0.9-3.7 1.3-4 1.7-3.9 2-3.6 2.5-3.8 2.6-3.4 3-3.2 3.2-2.9 3.5-2.7 3.8-2.5 3.7-2 3.8-1.7 4-1.3 4.3-1 3.9-0.6 4-0.1 3.8 0.2 3.8 0.7 3.5 1 3.4 1.4 3.2 1.9 2.9 2.1 2.3 2.4 2.1 2.5 1.8 2.8 1.4 3 1.1 3.2 0.8 3.5 0.4 3.5 0 3.6-0.3 3.7-0.6 3.7-1 3.6-1.4 3.7-1.7 3.7-2 3.5-2.3 3.3-2.5 3.2-2.9 3-3 2.7-3.3 2.6-3.3 2.3-3.5 1.9-3.7 1.7-3.7 1.4-3.8 1.1-3.9 0.7-3.6 0.3-3.7 0-3.6-0.4-3.4-0.7-3.3-1-3.2-1.4z" fill="#50a110"/><path d="M476.4 249.1l-2.6-1.9-2.6-2.4-2.1-2.7-1.9-3-1.4-3.4-1-3.2-0.7-3.6-0.3-3.5 0.1-3.6 0.5-3.9 0.9-3.6 1.3-4 1.6-3.8 2-3.7 2.4-3.5 2.6-3.4 3-3.1 3.1-2.9 3.3-2.5 3.6-2.3 3.7-2 3.8-1.7 4-1.3 3.7-0.9 4-0.5 3.9-0.1 3.6 0.2 3.6 0.6 3.5 1 3.1 1.4 3.2 1.7 2.7 2.1 2.2 2.1 2.1 2.6 1.7 2.6 1.4 3 1.1 3.2 0.8 3.1 0.4 3.4 0 3.5-0.2 3.5-0.7 3.6-0.9 3.6-1.3 3.5-1.7 3.6-1.9 3.4-2.1 3.1-2.5 3.2-2.8 3-2.8 2.6-3.2 2.6-3.2 2.1-3.5 2-3.5 1.7-3.6 1.3-3.7 1.1-3.7 0.7-3.6 0.3-3.5 0-3.5-0.3-3.4-0.7-3.1-0.9-3-1.3z" fill="#52a410"/><path d="M476.6 247.4l-2.7-2-2.3-2.2-2.1-2.6-1.7-2.9-1.4-3-1-3.2-0.6-3.4-0.3-3.5 0.1-3.7 0.5-3.6 0.8-3.7 1.3-3.9 1.5-3.4 2-3.6 2.2-3.3 2.5-3.2 2.9-3 3-2.8 3.2-2.5 3.5-2.3 3.4-1.9 3.9-1.6 4-1.3 3.6-0.9 3.8-0.5 3.7-0.1 3.5 0.2 3.5 0.6 3.3 1 3.1 1.3 2.9 1.7 2.7 2 2.2 2.1 1.9 2.4 1.7 2.6 1.4 2.9 1 3 0.7 3.1 0.4 3.4 0 3.3-0.3 3.5-0.6 3.5-1 3.5-1.2 3.4-1.6 3.3-1.8 3.1-2.1 3.2-2.4 3-2.6 2.9-2.8 2.5-3 2.4-3.2 2.2-3.3 1.9-3.4 1.5-3.5 1.3-3.5 1-3.5 0.7-3.5 0.4-3.5 0-3.3-0.3-3.2-0.6-3.1-1-3-1.3z" fill="#54a711"/><path d="M476.4 245.4l-2.5-2-2.1-2.1-2-2.6-1.6-2.6-1.3-3.1-0.9-3.1-0.6-3.3-0.2-3.4 0.2-3.4 0.5-3.6 0.9-3.5 1.1-3.3 1.5-3.5 2-3.5 2.2-3.2 2.5-3.2 2.6-2.8 3-2.6 3-2.4 3.4-2.1 3.4-1.9 3.5-1.4 3.6-1.2 3.8-0.9 3.5-0.5 3.5-0.1 3.5 0.2 3.3 0.6 3.2 1 3 1.2 2.8 1.6 2.6 2.1 2.1 2 1.8 2.3 1.7 2.6 1.2 2.7 1 3 0.7 3 0.3 3.2 0.1 3.1-0.3 3.4-0.7 3.3-0.9 3.4-1.2 3.3-1.5 3.1-1.9 3.2-2.1 3.1-2.3 2.9-2.6 2.7-2.8 2.5-2.9 2.3-3.1 2-3.2 1.8-3.3 1.5-3.3 1.2-3.5 1-3.5 0.6-3.4 0.2-3.3 0-3.1-0.3-3-0.7-3-1-2.9-1.3z" fill="#55ab11"/><path d="M477.2 243.9l-2.5-1.8-2.1-2.1-1.9-2.4-1.6-2.7-1.2-2.6-1-3.1-0.6-3.1-0.2-3.4 0.1-3.3 0.4-3.3 0.8-3.4 1.2-3.5 1.5-3.4 1.7-3.1 2.1-3.2 2.4-2.9 2.6-2.9 2.7-2.4 3-2.4 3.3-2.1 3.2-1.7 3.4-1.5 3.5-1.2 3.5-0.8 3.6-0.5 3.3-0.1 3.4 0.2 3.1 0.6 3.2 0.9 2.8 1.2 2.6 1.5 2.4 1.9 2.1 1.9 1.7 2.2 1.5 2.4 1.3 2.6 0.9 2.7 0.7 3 0.4 3 0 3-0.3 3.1-0.5 3.2-0.9 3.2-1.1 3.1-1.5 3.2-1.7 3-1.9 2.9-2.2 2.8-2.5 2.6-2.5 2.4-2.7 2.1-3 2.1-3 1.7-3.1 1.5-3.2 1.2-3.3 1-3.4 0.7-3.1 0.3-3.2 0-3.1-0.3-3-0.5-2.9-0.9-2.6-1.2z" fill="#57ae11"/><path d="M477.2 241.7l-2.3-1.8-2-2-1.7-2.1-1.5-2.6-1.1-2.6-0.9-3-0.5-3-0.2-3.2 0.1-3.1 0.5-3.2 0.8-3.3 1.2-3.3 1.5-3.2 1.6-3.1 2-2.9 2.2-2.7 2.5-2.6 2.7-2.4 2.8-2.2 3.1-2 3.1-1.6 3.1-1.4 3.4-1.1 3.3-0.8 3.4-0.4 3.1-0.1 3.2 0.2 3.1 0.6 2.8 0.8 2.8 1.2 2.5 1.4 2.4 1.9 1.9 1.8 1.7 2.2 1.4 2.3 1.2 2.5 0.9 2.7 0.6 2.8 0.3 2.9 0 2.9-0.3 3.1-0.5 2.9-0.9 3.2-1.2 3-1.4 2.9-1.7 2.9-1.8 2.7-2.2 2.7-2.3 2.4-2.5 2.3-2.7 2.1-2.8 1.9-2.9 1.6-3.1 1.4-3 1.1-3.1 0.9-3.2 0.5-3 0.3-3 0-3-0.4-2.9-0.6-2.6-0.8-2.5-1.2z" fill="#58b112"/><path d="M478 239.9l-2.1-1.6-2-1.9-1.7-2.1-1.5-2.4-1.1-2.6-0.8-2.7-0.5-2.8-0.3-2.9 0.1-3 0.5-3.1 0.7-3.1 1-2.9 1.3-3.1 1.6-3 1.9-2.8 2.1-2.7 2.4-2.5 2.5-2.3 2.8-2.1 2.8-1.9 3-1.6 3.2-1.4 3-1 3.2-0.7 3-0.5 3.1-0.1 3 0.2 2.9 0.5 2.8 0.8 2.7 1.1 2.3 1.4 2.2 1.6 1.9 1.9 1.6 2 1.3 2.1 1.1 2.4 0.9 2.5 0.6 2.6 0.3 2.7 0 2.9-0.2 2.8-0.5 2.8-0.8 2.9-1.1 2.9-1.4 2.9-1.5 2.6-1.7 2.6-2 2.5-2.2 2.3-2.3 2.2-2.5 2-2.7 1.8-2.8 1.6-2.9 1.3-2.8 1.1-3 0.9-3 0.5-2.8 0.3-2.9 0-2.8-0.2-2.6-0.5-2.7-0.9-2.4-1z" fill="#5ab412"/><path d="M478.4 237.7l-2-1.6-1.9-1.9-1.6-2-1.3-2.3-1-2.4-0.8-2.6-0.4-2.6-0.2-2.7 0.1-2.9 0.5-2.8 0.7-2.8 0.9-2.9 1.4-2.9 1.5-2.7 1.8-2.7 2-2.5 2.2-2.3 2.4-2.2 2.5-1.9 2.7-1.8 2.9-1.5 3-1.3 2.8-0.9 3-0.7 3-0.4 2.8 0 2.9 0.2 2.6 0.5 2.5 0.7 2.5 1.1 2.3 1.4 2 1.4 1.6 1.7 1.5 1.9 1.3 2 1.1 2.3 0.7 2.3 0.6 2.5 0.3 2.5 0 2.7-0.3 2.6-0.5 2.7-0.8 2.8-1 2.7-1.2 2.7-1.5 2.5-1.7 2.5-1.9 2.3-2 2.2-2.3 2.1-2.3 1.8-2.5 1.7-2.7 1.5-2.7 1.2-2.7 1-2.8 0.8-2.8 0.5-2.7 0.2-2.6 0-2.5-0.2-2.5-0.5-2.5-0.8-2.2-1z" fill="#5cb712"/><path d="M479.2 235.5l-2-1.6-1.6-1.6-1.5-1.9-1.2-2-1-2.1-0.7-2.4-0.4-2.5-0.2-2.6 0.1-2.7 0.3-2.7 0.7-2.6 0.9-2.7 1.2-2.7 1.5-2.6 1.6-2.5 1.9-2.3 2.1-2.2 2.2-2 2.4-1.9 2.4-1.5 2.7-1.5 2.6-1.1 2.7-0.9 2.7-0.6 2.8-0.4 2.7-0.1 2.6 0.1 2.5 0.5 2.4 0.7 2.3 1 2.1 1.1 1.9 1.5 1.6 1.6 1.4 1.8 1.2 1.8 0.9 2 0.8 2.2 0.5 2.3 0.2 2.4 0.1 2.4-0.3 2.6-0.4 2.4-0.7 2.6-0.9 2.4-1.2 2.6-1.3 2.3-1.6 2.3-1.8 2.2-2 2.1-2 1.9-2.2 1.7-2.3 1.6-2.3 1.4-2.5 1.1-2.7 1-2.5 0.7-2.6 0.5-2.5 0.3-2.5 0-2.4-0.2-2.3-0.5-2.4-0.7-2-0.9z" fill="#5dba13"/><path d="M479.9 232.9l-1.8-1.4-1.5-1.6-1.3-1.6-1.1-1.9-0.9-2-0.6-2.1-0.4-2.4-0.2-2.3 0.1-2.5 0.4-2.4 0.6-2.4 0.8-2.6 1.1-2.3 1.3-2.4 1.6-2.2 1.7-2.2 1.9-2 2-1.9 2.2-1.6 2.3-1.5 2.5-1.3 2.3-1.1 2.5-0.8 2.5-0.6 2.5-0.3 2.5-0.1 2.4 0.1 2.3 0.4 2.1 0.7 2 0.8 2 1.2 1.8 1.3 1.4 1.4 1.3 1.6 1.2 1.9 0.8 1.8 0.7 2 0.5 2.1 0.2 2.2 0 2.2-0.2 2.3-0.4 2.4-0.7 2.3-0.8 2.1-1.1 2.4-1.2 2.1-1.5 2.2-1.6 2-1.7 1.9-2 1.8-2 1.5-2.1 1.5-2.2 1.2-2.4 1.1-2.3 0.9-2.3 0.6-2.4 0.5-2.3 0.2-2.3 0-2.2-0.2-2.1-0.4-2-0.7-2-0.8z" fill="#5fbe13"/><path d="M480.8 230l-1.5-1.1-1.5-1.5-1.2-1.6-0.9-1.7-0.8-1.9-0.5-1.9-0.4-2.1-0.1-2.1 0.2-2.2 0.3-2.1 0.6-2.2 0.8-2.2 1-2.1 1.1-2.1 1.5-2.1 1.5-1.9 1.7-1.8 1.9-1.6 1.9-1.6 2.1-1.3 2.1-1.1 2.2-0.9 2.1-0.7 2.4-0.5 2.3-0.3 2.1-0.1 2.2 0.1 2 0.4 2 0.6 1.9 0.8 1.7 1.1 1.5 1.1 1.4 1.4 1.1 1.4 1 1.6 0.8 1.7 0.5 1.8 0.4 1.9 0.2 2.1 0 1.9-0.2 2.1-0.4 2.1-0.6 2.2-0.8 2-1 2-1.2 2-1.3 1.8-1.5 1.9-1.6 1.6-1.6 1.5-1.8 1.4-2 1.3-2 1.1-2.1 1-2 0.7-2.2 0.6-2.2 0.4-2 0.2-2.1-0.1-2-0.2-1.9-0.4-1.8-0.6-1.7-0.7z" fill="#60c113"/><path d="M482.2 227.2l-1.3-1.1-1.2-1.2-1-1.3-1-1.5-0.7-1.7-0.4-1.6-0.4-1.9-0.1-1.8 0.1-2 0.3-1.9 0.5-1.9 0.7-1.9 0.8-1.8 1.1-1.9 1.1-1.7 1.4-1.7 1.5-1.6 1.5-1.3 1.6-1.3 1.9-1.2 1.8-1 1.9-0.8 2-0.7 2-0.5 2-0.3 2-0.1 1.8 0.2 1.8 0.3 1.7 0.5 1.6 0.7 1.5 0.9 1.4 1 1.1 1.1 1 1.2 0.8 1.4 0.8 1.4 0.5 1.6 0.3 1.6 0.2 1.7 0 1.8-0.1 1.9-0.4 1.8-0.5 1.8-0.7 1.9-1.8 3.4-2.4 3.2-2.9 2.9-3.2 2.3-3.5 1.8-1.9 0.7-1.8 0.5-1.9 0.4-1.8 0.1-1.8 0-1.7-0.1-1.6-0.4-1.7-0.5-1.5-0.7z" fill="#62c414"/><path d="M483.9 223.6l-1.1-0.9-1-0.9-0.9-1.2-0.6-1.2-0.6-1.3-0.4-1.4-0.3-1.4-0.1-1.6 0.1-1.4 0.3-1.7 0.9-3.2 1.5-3 2.1-2.8 2.6-2.5 2.8-2 3-1.5 3.2-0.9 3.2-0.3 1.5 0.1 1.5 0.2 1.5 0.4 1.3 0.6 1.2 0.7 1.1 0.9 1 0.9 0.8 1.1 1.3 2.3 0.7 2.6 0.2 2.9-0.5 2.9-0.9 2.9-1.5 2.9-2 2.6-2.3 2.4-2.7 1.9-2.9 1.5-3 1-3 0.4-2.8-0.1-2.7-0.6-1.3-0.6z" fill="#64c714"/><path d="M486.6 219.2l-1.5-1.2-1.2-1.6-0.7-1.8-0.4-2.2 0.2-2.1 0.6-2.4 1.1-2.1 1.4-2.1 1.7-1.8 2.1-1.5 2.2-1.1 2.3-0.7 2.2-0.3 2.1 0.2 2 0.7 1.8 1.1 1.2 1.3 1 1.6 0.5 1.9 0.2 2-0.3 2.1-0.6 2.1-1 1.9-1.4 2-1.7 1.7-1.8 1.4-2 1.1-2.2 0.8-2.1 0.3-2 0-2-0.5z" fill="#65ca14"/><circle cx="508.29" cy="222.22" r="9.27" fill="url(#H1)" style="mix-blend-mode:plus-lighter"/></g><clipPath id="S2"><path d="M123.92 310.54l-2.32-0.46-2.18-0.54-2.34-0.71-2.16-0.78-2.17-0.92-2-0.96-2-1.1-2-1.24-1.83-1.27-1.84-1.43-1.66-1.45-1.67-1.61-1.54-1.65-1.46-1.76-1.33-1.8-1.28-1.94-1.17-2-1.02-2-0.88-2-0.82-2.17-0.69-2.17-0.56-2.16-0.43-2.17-0.34-2.33-0.19-2.17-0.09-2.33 0.05-2.34 0.17-2.33 0.3-2.33 0.39-2.17 0.55-2.33 0.63-2.17 0.75-2.17 0.87-2.16 1.01-2.17 1.08-2.04 1.17-1.97 1.33-2.02 1.45-1.97 1.5-1.83 1.65-1.84 1.66-1.66 1.74-1.6 1.83-1.52 1.84-1.38 2-1.37 2.12-1.3 2.13-1.17 2.08-1.01 2.28-0.99 2.22-0.83 2.33-0.75 2.34-0.63 2.33-0.51 2.5-0.41 2.33-0.28 2.34-0.16 2.5-0.04 2.33 0.07 2.33 0.19 2.34 0.3 2.33 0.43 2.33 0.55 2.17 0.63 2 0.68 2 0.79 3.76 1.81 1.75 1 1.83 1.16 1.66 1.17 1.7 1.33 1.63 1.42 1.47 1.42 2.71 3 1.29 1.66 1.2 1.73 1.1 1.77 1.02 1.84 0.89 1.83 0.82 1.91 0.72 1.92 0.63 2 0.52 2 0.41 2 0.32 2 0.23 2.17 0.11 2 0.01 2.17-0.09 2.16-0.19 2-0.3 2.17-0.38 2-0.48 2-0.63 2.17-1.48 4-0.91 2-0.99 1.93-1.08 1.9-1.16 1.83-2.57 3.5-2.85 3.25-3.17 3.02-3.43 2.73-3.74 2.48-3.83 2.07-4.1 1.79-4.07 1.36-4.33 1.04-4.33 0.64-4.34 0.25-4.33-0.14-2.17-0.21z"/></clipPath><g clip-path="url(#S2)"><rect x="84" y="214" width="103" height="104" fill="#1a1403"/><path d="M84.1 317.9l-0.1-103.8 88.6 0-5.7 7.1-5.6 7.4 0.2 0.3 1.3 1 1 1 0.9 1.2 0.8 1.3 1.3 3 0.7 3.7 0.3 4.1-0.4 4.6-0.9 4.8-1.4 5-1.3 3.6-1.6 3.7-1.8 3.8-2 3.7-2.1 3.6-2.5 3.6-2.6 3.5-2.5 3.1-2.5 2.9-2.6 2.6-2.7 2.5-2.5 2.2-2.6 2.1-2.7 1.8-2.7 1.6-2.6 1.4-2.6 1.1-2.4 0.9-2.6 0.6-2.3 0.3-2.2 0.1-1.9-0.3-1.9-0.4-2-0.8-7 12.1z" fill="#1b1603"/><path d="M84.1 317.9l-0.1-103.8 87 0-10.5 14 0.1 0.1 1.5 1.2 1 1 1.7 2.4 0.7 1.4 0.6 1.6 0.8 3.4 0.3 4.1-0.3 4.3-0.8 4.6-1.3 5.1-1.3 3.6-1.4 3.7-1.8 3.8-2 3.7-2.1 3.6-2.4 3.7-2.6 3.5-2.6 3.4-2.5 2.8-2.7 2.8-2.6 2.5-2.7 2.4-2.7 2.1-2.6 1.9-2.7 1.6-2.9 1.5-2.6 1.2-2.5 0.8-2.5 0.6-2.3 0.4-2.1 0-1.9-0.2-2-0.5-2.1-0.8-0.2 0-7.5 12.5z" fill="#1f1903"/><path d="M84.1 317.9l-0.1-103.8 85 0-9.5 13.5 2.5 2 0.9 1 0.9 1.3 0.7 1.4 0.7 1.4 0.8 3.4 0.4 3.8-0.1 4.4-0.7 4.4-1.2 4.9-1.2 3.6-1.4 3.9-1.7 3.7-1.9 3.8-2.2 3.8-2.4 3.7-2.5 3.6-2.7 3.4-2.6 3-2.6 2.8-2.7 2.7-2.8 2.4-2.8 2.2-2.8 2-2.7 1.7-2.8 1.5-2.7 1.2-2.7 0.9-2.4 0.6-2.4 0.3-2.3 0.1-2-0.3-1.7-0.5-2.3-1-8.4 13.2z" fill="#231c04"/><path d="M84.1 317.9l-0.1-103.8 83.2 0-8.7 13 2.5 1.8 0.9 1 0.9 1.2 0.8 1.3 0.7 1.5 0.9 3.2 0.4 3.6 0 4.2-0.6 4.5-1.1 4.7-1.1 3.6-1.4 3.9-1.6 3.8-2 3.9-2.1 3.7-2.3 3.7-2.5 3.7-2.6 3.5-2.7 3.1-2.7 2.9-2.8 2.9-2.8 2.5-2.9 2.3-2.8 2-2.9 1.8-2.8 1.5-2.8 1.3-2.7 0.9-2.5 0.6-2.5 0.3-2.2 0-2.1-0.3-2-0.6-2-1-9.3 13.8z" fill="#271f04"/><path d="M84.1 317.9l-0.1-103.8 81.4 0-7.9 12.5 2.4 1.6 1.8 2.1 0.9 1.3 0.7 1.3 1 3.2 0.5 3.6 0 4.1-0.4 4.3-1 4.5-1 3.6-1.4 3.9-1.6 3.8-1.8 3.9-2.1 3.8-2.2 3.7-2.6 3.7-2.6 3.6-2.4 3-2.6 2.8-2.6 2.7-2.6 2.5-2.8 2.3-2.6 2-2.7 1.9-2.7 1.6-3 1.5-3 1.2-2.8 0.9-2.9 0.4-2.5 0.1-2.3-0.2-2.3-0.7-2.2-1.1-10.2 14.4z" fill="#2b2204"/><path d="M84.1 317.9l-0.1-103.8 79.7 0-7.2 12 2.5 1.6 1.1 1.1 0.8 0.9 1.4 2.6 1.1 2.9 0.6 3.6 0.1 3.8-0.4 4.1-0.8 4.6-1 3.6-1.3 3.9-1.6 3.8-1.8 3.8-2 3.9-2.3 3.8-2.4 3.6-2.6 3.6-2.5 3.1-2.4 2.9-2.6 2.6-2.6 2.6-2.7 2.3-2.7 2.1-2.8 2-2.7 1.7-3.2 1.6-3.1 1.3-3 0.9-2.8 0.5-2.7 0.1-2.3-0.3-2.2-0.6-2.2-1.2-0.3 0-11.1 15z" fill="#2f2505"/><path d="M84.1 317.9l-0.1-103.8 78 0-6.5 11.5 0.1 0.2 1.2 0.6 1.2 0.9 1.9 1.8 0.8 1.1 0.7 1.4 1.1 2.8 0.6 3.4 0.2 3.8-0.3 4-0.7 4.3-1 3.7-1.2 3.8-1.5 3.9-1.7 3.8-2 3.8-2.2 3.9-2.4 3.7-2.6 3.6-2.4 3.1-2.5 2.9-2.6 2.7-2.6 2.6-2.6 2.4-2.8 2.1-2.7 2-2.8 1.8-3.3 1.8-3.3 1.4-3.2 1-3 0.5-2.8 0.1-2.5-0.4-2-0.7-2.4-1.3-12.3 15.8z" fill="#332905"/><path d="M84.1 317.9l-0.1-103.8 76.3 0-5.9 11.1 0.7 0.3 1.7 1.1 1 0.8 1 1 1.6 2.4 1.1 2.8 0.7 3.1 0.3 3.7-0.2 4-0.7 4.2-0.9 3.6-1.1 3.7-1.4 3.9-1.7 3.8-1.9 3.9-2.2 3.8-2.4 3.8-2.5 3.6-2.4 3.2-2.4 2.9-2.6 2.8-2.7 2.6-2.6 2.5-2.7 2.2-2.7 2-2.8 1.9-3.5 1.9-3.3 1.5-3.3 1-3.1 0.6-2.8 0.1-2.7-0.3-2.3-0.9-2.3-1.3-6.8 8.2-6.7 8.3z" fill="#372c05"/><path d="M84.1 317.9l-0.1-103.8 74.7 0-5.3 10.6 2.6 1.6 1.8 1.6 1.6 2.2 1.1 2.6 0.8 3.2 0.3 3.5-0.1 3.9-0.6 3.9-0.8 3.7-1 3.7-1.4 3.8-1.6 3.9-1.9 3.8-2.1 3.9-2.3 3.8-2.6 3.6-2.3 3.2-2.5 3-2.5 2.8-2.6 2.7-2.7 2.5-2.7 2.3-2.6 2-2.7 1.8-3.7 2.2-3.5 1.6-3.3 1.1-3.3 0.6-3.1 0.2-2.8-0.5-2.2-0.8-2.3-1.5-7.4 8.5-7.4 8.8z" fill="#3a2f06"/><path d="M84.1 317.9l-0.1-103.8 73.1 0-4.8 10.3 2.6 1.4 1.8 1.4 1.6 2.2 1.2 2.5 0.8 3 0.4 3.4 0 3.6-0.5 4-0.7 3.5-1 3.7-1.2 3.8-1.6 3.9-1.8 3.8-2.1 4-2.3 3.8-2.5 3.7-2.3 3.1-2.4 3-5 5.5-2.6 2.5-2.7 2.4-2.7 2.1-2.6 1.9-3.8 2.3-3.7 1.8-3.4 1.2-3.4 0.7-3 0.2-2.8-0.4-2.4-0.8-2.7-1.7-8.1 8.9-8.1 9.1z" fill="#3e3206"/><path d="M84.1 316.6l-0.1-102.5 71.5 0-4.3 10 2.5 1.1 1.9 1.6 1.6 1.9 1.3 2.6 0.9 2.8 0.4 3.3 0 3.7-0.3 3.8-0.7 3.7-1 3.6-1.3 3.9-1.5 3.8-1.9 4-2 3.9-2.3 3.8-2.4 3.6-2.3 3.2-2.4 3-2.5 2.9-2.6 2.8-2.7 2.5-2.6 2.4-2.7 2.1-2.8 2-3.7 2.2-3.7 1.8-3.7 1.3-3.3 0.6-3 0.1-2.8-0.4-2.5-1-2.4-1.6-8.4 8.6z" fill="#423507"/><path d="M84.1 314.1l-0.1-100 70 0-3.9 9.6 0.3 0.1 2 0.9 2.1 1.6 1.7 1.9 1.3 2.6 0.9 2.8 0.5 3.1 0.1 3.7-0.4 3.9-0.7 3.6-0.9 3.7-1.3 3.8-1.5 3.9-1.9 4-2.1 3.9-2.3 3.9-2.5 3.8-2.3 3.2-2.5 3.1-2.6 2.9-2.7 2.8-2.7 2.6-2.8 2.4-2.8 2.2-2.8 1.9-3.6 2.1-3.7 1.6-3.5 1.2-3.2 0.5-2.9 0.1-2.9-0.6-2.3-1-2.3-1.6-7.9 7.8z" fill="#463807"/><path d="M84.1 311.6l-0.1-97.5 68.4 0-3.4 9.3 2.4 1 1.1 0.7 1 0.8 1.7 1.9 1.3 2.3 0.9 2.8 0.6 3.2 0.1 3.5-0.4 3.8-0.6 3.5-0.9 3.9-1.3 3.8-1.5 4-1.9 4-2.1 4-2.3 3.9-2.5 3.8-2.4 3.3-2.6 3.1-2.6 3-2.8 2.9-2.8 2.6-2.8 2.4-2.9 2.2-2.9 2-3.6 2-3.6 1.5-3.3 1-3.2 0.5-2.8 0-2.7-0.6-2.2-1-2.4-1.8z" fill="#4a3b07"/><path d="M84.1 309.3l-0.1-95.2 66.9 0-3.1 9 2.5 1 2 1.3 1.8 1.9 1.4 2.3 0.9 2.6 0.6 3.2 0.1 3.5-0.2 3.7-0.6 3.6-0.9 3.7-1.3 4-1.6 4-1.8 4-2.1 4.1-2.4 3.9-2.6 4-2.5 3.4-2.7 3.3-2.6 3-2.9 2.9-2.8 2.6-3 2.5-3 2.1-2.8 1.9-3.6 1.8-3.4 1.5-3.2 0.9-3.2 0.4-2.8-0.2-2.5-0.6-2-1-2.3-1.8-0.2 0z" fill="#4e3e08"/><path d="M84.1 307.1l-0.1-93 65.4 0-2.8 8.8 0.5 0.1 2 0.8 2.2 1.3 1.8 1.8 1.3 2.2 1 2.6 0.6 3.1 0.2 3.4-0.2 3.7-0.6 3.5-0.9 3.9-1.3 3.9-1.5 4.1-1.8 4-2.1 4-2.4 4-2.6 4-2.6 3.5-2.7 3.3-2.8 3-2.9 3-2.9 2.6-3.1 2.5-3 2.2-2.9 1.8-3.5 1.8-3.3 1.3-3.3 0.9-3.1 0.3-2.6-0.2-2.5-0.7-2.2-1.2-2-1.8z" fill="#524108"/><path d="M84.1 304.9l-0.1-90.8 63.9 0-2.4 8.5 0.2 0.2 0.6 0 2 0.8 1.9 1.1 1.7 1.7 1.4 2.2 1 2.5 0.7 3 0.2 3.3-0.2 3.7-0.5 3.6-0.9 3.9-1.2 4-1.6 4-1.9 4.1-2 4-2.4 4-2.7 4-2.6 3.5-2.7 3.4-2.8 3.1-3 3-3 2.7-3.1 2.5-3 2.1-3 1.8-3.3 1.7-3.4 1.2-3.2 0.8-2.9 0.2-2.7-0.2-2.3-0.7-2.1-1.2-1.9-1.9-0.2 0z" fill="#564509"/><path d="M84.1 302.8l0-88.7 62.3 0-2.1 8.3 2.6 0.9 2.1 1.1 1.8 1.7 1.4 2 1.1 2.5 0.7 3 0.2 3.3-0.1 3.5-0.5 3.7-0.9 3.8-1.2 4-1.5 4-1.9 4.2-2.1 4-2.4 4-2.6 4-2.6 3.5-2.9 3.5-2.8 3.1-3 3-3.1 2.8-3.1 2.4-3.1 2.2-3 1.7-3.3 1.7-3.3 1.1-3.2 0.7-2.8 0.2-2.7-0.4-2.3-0.8-2.1-1.3-1.8-1.8z" fill="#5a4809"/><path d="M84.1 300.8l0-86.7 60.8 0-1.9 8.1 2.9 0.9 1.9 1 1.8 1.5 1.4 2 1.2 2.5 0.7 2.8 0.3 3.4-0.1 3.4-0.5 3.7-0.8 3.9-1.2 3.9-1.5 4-1.9 4.1-2.1 4.1-2.4 4-2.6 4-2.7 3.7-2.8 3.4-2.9 3.2-3.1 3-3 2.8-3.2 2.4-3.1 2.2-3.1 1.7-3.4 1.6-3.2 1.1-3 0.6-2.8 0.1-2.6-0.4-2.3-0.9-1.7-1.1-1.8-1.9-0.3-0.2z" fill="#5d4b09"/><path d="M84.1 298.9l0-84.8 59.3 0-1.6 8 2.6 0.6 2.1 1.1 1.9 1.4 1.6 2.1 1.1 2.3 0.7 2.8 0.4 3.2-0.1 3.5-0.4 3.5-0.8 3.8-1.2 4-1.5 4-1.8 4.2-2.1 4.1-2.4 4-2.7 4-2.7 3.7-2.8 3.5-3.1 3.4-3 2.9-3.2 2.8-3.1 2.4-3.2 2.2-3 1.7-3.3 1.5-3.1 1-2.9 0.5-2.9 0.1-2.5-0.5-2.2-0.8-1.8-1.3-1.7-1.9-0.3-0.2z" fill="#614e0a"/><path d="M84.1 296.9l0-82.8 57.7 0-1.3 8 1.1 0.1 1.6 0.4 2 0.8 1 0.7 1 0.8 1.5 1.9 1.2 2.3 0.8 2.8 0.4 3.2 0 3.3-0.4 3.5-0.8 3.9-1.2 3.9-1.4 4.1-1.8 3.9-2.1 4.2-2.3 4-2.7 4.1-2.8 3.8-2.8 3.5-3.1 3.3-3 3-3.3 2.8-3.2 2.4-3.1 2.1-3.2 1.8-3.2 1.4-3.1 0.9-3 0.5-2.7 0-2.3-0.5-2.2-0.9-1.8-1.4-1.7-2 0-0.1-0.1 0z" fill="#65510a"/><path d="M84.1 295.1l0-81 56.2 0-1.1 7.8 2.7 0.5 2.1 0.9 1.9 1.3 1.6 1.8 1.3 2.4 0.8 2.6 0.4 3 0 3.4-0.3 3.4-0.8 3.8-1.1 3.9-1.4 4-1.8 4.2-2 4-2.5 4.1-2.6 4-2.7 3.7-2.9 3.6-3 3.3-3.1 3.1-3.3 2.9-3.2 2.4-3.2 2.1-3.2 1.7-3.3 1.4-3 0.9-2.8 0.4-2.7-0.1-2.3-0.5-2.2-1.1-1.7-1.3-1.7-2.2-0.1 0z" fill="#69540b"/><path d="M84.1 293.2l0-79.1 54.7 0-0.9 7.8 2.5 0.4 2.4 0.8 2 1.3 1.5 1.7 1.2 2.1 0.9 2.7 0.5 2.9 0 3.3-0.3 3.5-0.7 3.6-1.1 4.1-1.4 3.9-1.7 4.1-2.1 4.1-2.3 4-2.6 4-2.8 3.8-2.9 3.5-3 3.4-3.2 3.1-3.3 2.9-3.2 2.4-3.2 2.1-3.2 1.7-3.2 1.3-3.1 0.9-2.8 0.3-2.7-0.1-2.3-0.7-2.1-1.1-1.6-1.5-1.5-2.1z" fill="#6d570b"/><path d="M84.1 291.4l0-77.3 53.1 0-0.6 7.8 2.8 0.4 2.1 0.6 1.9 1.2 1.6 1.6 1.3 2.2 0.9 2.5 0.5 2.9 0.1 3.1-0.3 3.5-0.6 3.7-1 3.8-1.4 4-1.8 4.1-2 4.1-2.3 4-2.5 4-2.8 3.8-3 3.7-3.1 3.3-3.2 3.2-3.3 2.8-3.2 2.5-3.3 2-3.2 1.7-3.2 1.2-3 0.8-2.8 0.3-2.6-0.2-2.1-0.7-2-1.1-1.5-1.4-1.5-2.2-0.2-0.1z" fill="#715a0b"/><path d="M84.1 289.6l0-75.5 51.5 0-0.4 7.8 3.1 0.4 1.7 0.4 2.1 1.2 1.6 1.5 1.3 2 0.9 2.4 0.6 2.8 0.2 3.1-0.2 3.4-0.6 3.6-1 3.9-1.4 4-1.6 4-2.1 4.1-2.2 4-2.6 4-2.8 3.9-2.9 3.6-3.1 3.4-3.2 3.1-3.3 2.9-3.3 2.4-3.2 2.1-3.3 1.6-3.2 1.3-2.9 0.7-2.9 0.2-2.5-0.2-2.2-0.8-1.9-1.2-1.6-1.6-1.3-2.2z" fill="#755d0c"/><path d="M84.1 287.9l0-73.8 49.8 0-0.1 7.8 3.3 0.4 1.8 0.4 1.9 1.1 1.7 1.4 1.3 2.1 0.9 2.2 0.6 2.8 0.2 2.9-0.2 3.4-0.5 3.5-1 3.8-1.2 3.9-1.7 3.9-1.9 4.1-2.2 4-2.6 4-2.8 3.9-3 3.7-3 3.4-3.3 3.2-3.3 2.8-3.3 2.5-3.2 2-3.3 1.6-3.1 1.2-3 0.7-2.7 0.2-2.4-0.3-2.2-0.8-1-0.6-1-0.8-1.5-1.7-1.1-1.9-0.1-0.3z" fill="#79600c"/><path d="M84.1 286.1l0-72 48.2 0 0.1 8 3.2 0.1 1.6 0.4 2.1 1 1.7 1.3 1.4 1.9 1 2.1 0.7 2.7 0.2 3-0.1 3.3-0.5 3.5-0.9 3.7-1.2 3.8-1.6 4-1.9 3.9-2.2 4-2.5 4-2.8 3.9-3 3.7-3.1 3.5-3.3 3.2-3.3 2.8-3.3 2.5-3.3 2.1-3.2 1.5-3.2 1.2-2.8 0.6-2.7 0.1-2.5-0.3-2.2-0.9-1.8-1.4-1.3-1.7-1.1-2-0.1-0.3z" fill="#7c640c"/><path d="M84.1 284.3l0-70.2 46.4 0 0.4 8.1 2.7 0.1 2.3 0.3 1.9 0.8 1.8 1.4 1.4 1.6 1.1 2.2 0.7 2.5 0.3 2.8-0.1 3.2-0.4 3.5-0.9 3.6-1.1 3.8-1.6 3.9-1.8 4-2.2 4-2.4 3.9-2.8 4-2.9 3.6-3.2 3.5-3.3 3.3-3.3 2.8-3.3 2.5-3.4 2-3.2 1.6-3.1 1.1-2.8 0.6-2.7 0.1-2.3-0.4-2.1-0.9-1.8-1.4-1.3-1.8-1.2-2.4z" fill="#80670d"/><path d="M84.1 282.6l0-68.5 44.7 0 0.6 8.3 3.4 0 1.8 0.3 1.8 0.7 1.8 1.2 1.4 1.6 1.1 2.1 0.7 2.3 0.4 2.8 0 3.2-0.4 3.3-0.8 3.7-1.1 3.6-1.5 3.9-1.8 3.8-2.1 4-2.4 3.8-2.6 3.9-3 3.8-3.2 3.5-3.3 3.3-3.3 2.9-3.4 2.4-3.3 2.1-3.2 1.5-2.5 0.9-2.5 0.6-2.3 0.2-2-0.1-1.3-0.3-1.2-0.5-1.2-0.6-1-0.8-0.8-0.9-0.8-1.2-1.1-2.3-0.1-0.4-0.2-0.1z" fill="#846a0d"/><path d="M84.1 280.8l0-66.7 42.8 0 1 8.6 3-0.1 2 0.1 2.1 0.7 1.6 1 1.5 1.5 1.1 1.9 0.8 2.3 0.5 2.6 0 3.1-0.3 3.1-0.6 3.5-1.1 3.7-1.4 3.8-1.7 3.9-2 3.8-2.3 3.8-2.8 4-2.9 3.9-3.2 3.5-3.3 3.3-3.3 2.9-3.3 2.5-3.4 2-3.2 1.6-2.6 0.9-2.5 0.5-2.3 0.2-2.1-0.2-1.3-0.4-1.2-0.5-0.9-0.7-1.1-0.8-0.8-1-0.7-1.1-1.1-2.9z" fill="#886d0e"/><path d="M94.1 284.8l-1.8-1.1-1.6-1.6-1.1-2-0.8-2.5-4.7 1.4 0-64.9 40.9 0 1.3 9 2.8-0.3 1.8 0 2 0.4 1.5 0.7 1.4 1 1.2 1.4 1 1.6 0.6 1.9 0.5 1.9 0.1 2.4 0 2.5-0.3 2.6-0.6 2.9-0.8 2.8-1 3-1.2 3-1.9 3.9-2 3.6-2.3 3.7-2.5 3.5-2.7 3.4-2.8 3.1-2.8 2.9-3 2.6-3.1 2.3-2.9 1.9-2.9 1.5-2.8 1.2-2.7 0.7-2.5 0.3-2.3-0.1z" fill="#8c700e"/><path d="M93.8 283.6l-1.9-1.1-1.5-1.6-1.2-2.2-0.8-2.7-4.3 1.2 0-63.1 38.9 0 1.7 9.3 2.6-0.3 2.1 0 1.9 0.3 1.5 0.5 1.4 1 1.3 1.2 0.9 1.5 0.8 1.8 0.5 2 0.2 2.2 0 2.3-0.3 2.5-0.5 2.7-0.7 2.6-0.9 2.9-1.1 3-1.7 3.6-2 3.7-2.2 3.7-2.4 3.5-2.7 3.4-2.8 3.2-2.8 2.9-3 2.6-3.1 2.4-2.9 2-2.9 1.5-2.8 1.2-2.7 0.7-2.5 0.3-2.2-0.1z" fill="#90730e"/><path d="M93.6 282.4l-1-0.5-1-0.7-1.5-1.7-0.7-1.1-0.5-1.3-0.6-2-0.1-0.8-4.1 1 0-61.2 36.8 0 2.1 9.8 2.8-0.5 1.6-0.1 1.8 0.2 1.7 0.4 1.5 0.8 1.3 1.1 1.1 1.4 0.8 1.7 0.5 1.9 0.3 1.9 0.1 2.2-0.2 2.5-0.3 2.5-0.7 2.7-0.8 2.8-1.1 2.9-1.5 3.4-1.9 3.7-2.2 3.7-2.3 3.5-2.5 3.3-2.8 3.2-2.8 3-3 2.7-2.8 2.3-3 2-2.8 1.6-2.9 1.2-2.7 0.8-2.4 0.3-2.2-0.1z" fill="#94760f"/><path d="M93.6 281.2l-1.2-0.5-1-0.7-0.8-0.8-0.8-1.1-0.7-1.3-0.5-1.4-0.4-1.8-0.1-1.1-4 0.8 0-59.2 34.5 0 2.7 10.3 0.4 0 2.1-0.5 1.9-0.2 1.9 0 1.6 0.4 1.5 0.6 1.4 1.1 1.1 1.3 0.8 1.5 0.6 1.6 0.3 1.9 0.2 2-0.1 2.3-0.3 2.4-0.5 2.4-0.7 2.7-0.9 2.7-1.5 3.5-1.7 3.6-2 3.6-2.3 3.5-2.5 3.4-2.7 3.2-2.8 3-2.8 2.7-2.9 2.4-2.8 2-2.8 1.6-2.9 1.3-2.5 0.9-2.5 0.4-2.3 0z" fill="#98790f"/><path d="M93.4 279.9l-1.2-0.5-0.9-0.7-0.9-0.8-0.8-1.1-0.7-1.4-0.5-1.5-0.5-3.2-3.8 0.6 0-57.2 32.1 0 3.3 11 0.2 0 0.2-0.1 2.2-0.6 2-0.3 1.8 0 1.7 0.3 1.5 0.5 1.3 0.9 1.1 1.1 0.9 1.5 0.6 1.5 0.4 1.7 0.2 1.8 0 2.2-0.2 2.1-0.4 2.4-0.6 2.5-0.8 2.5-1.3 3.5-1.7 3.5-1.9 3.5-2.2 3.5-2.3 3.3-2.6 3.2-2.7 3-2.9 2.8-2.8 2.4-2.9 2.1-2.7 1.7-2.8 1.4-2.7 0.9-2.5 0.4-2.2 0z" fill="#9b7c10"/><path d="M93.4 278.6l-1.2-0.5-1.1-0.8-0.8-0.8-0.9-1.2-0.7-1.4-0.4-1.8-0.4-3.4-3.8 0.5 0-55.1 29.4 0 4.1 11.7 0.5 0 2.6-0.9 1.6-0.3 1.6-0.1 1.7 0.1 1.6 0.5 1.2 0.6 1.2 1.1 1 1.3 0.6 1.3 0.5 1.5 0.3 1.7 0.1 2-0.1 2.1-0.3 2.2-1.2 4.7-1.1 3.3-1.6 3.5-1.8 3.5-2.1 3.5-2.3 3.4-2.4 3.1-2.7 3-2.8 2.8-2.8 2.5-2.8 2.1-2.8 1.8-2.7 1.3-2.7 1-2.3 0.5-2.2 0.1z" fill="#9f7f10"/><path d="M93.6 277.2l-1.3-0.5-1.2-0.7-1-1-0.8-1.3-0.7-1.6-0.3-1.3-0.4-4.2-3.8 0.4 0-52.9 26.6 0 4.9 12.6 2.8-0.9 1.8-0.5 1.9-0.3 1.7 0.1 1.6 0.3 1.3 0.6 1.2 0.9 1 1.2 0.6 1.1 0.5 1.6 0.4 1.4 0.1 1.7 0 1.9-0.2 1.9-0.8 4.2-1.1 3.4-1.4 3.3-1.6 3.3-2 3.5-2.2 3.4-2.3 3.1-2.5 3-2.7 2.8-2.6 2.4-2.8 2.3-2.9 1.9-2.7 1.4-2.6 1-2.3 0.6-2.2 0.2z" fill="#a38310"/><path d="M98.2 275.6l-2.1 0.3-1.8-0.1-1.7-0.4-1.5-0.9-0.8-0.7-0.7-0.9-0.5-0.9-0.5-1.4-0.5-2.7 0-3.5-4 0.2 0-50.5 23.4 0 3 7 3 6.6 0.2 0.1 3.2-1.4 2.3-0.6 2.2-0.2 2 0.2 1.8 0.7 1.5 1.2 1.1 1.7 0.8 2.2 0.3 2.5-0.1 2.8-0.5 3.2-0.9 3.3-1.3 3.5-1.7 3.6-1.9 3.6-2.3 3.5-2.4 3.3-2.7 3.2-2.8 2.9-3 2.6-2.9 2.2-2.8 1.7-2.7 1.3z" fill="#a78611"/><path d="M97.9 274l-2.2 0.3-1.8-0.1-1.7-0.5-1.4-1-0.7-0.7-0.7-1-0.8-2.2-0.4-2.7 0.2-4.2-4.3 0 0-47.8 19.7 0 3.7 7.6 3.8 7.4 3.5-1.7 2.4-0.8 2.4-0.4 2 0.2 1.8 0.6 1.5 1.1 1.2 1.6 0.8 2.2 0.3 2.5-0.1 2.7-0.5 3-0.9 3.1-1.2 3.4-1.5 3.3-1.9 3.4-2.2 3.4-2.3 3.2-2.6 3-2.7 2.9-2.7 2.4-2.8 2-2.7 1.8-2.7 1.2z" fill="#ab8911"/><path d="M97.8 272.3l-2.2 0.3-1.8-0.1-1.7-0.6-1.3-0.9-0.8-0.9-0.6-1-0.5-1.3-0.3-1.6-0.1-1.8 0.1-2.1 0.2-2.2 0.1-0.2 0-0.6 0.2-0.2-5-0.2 0-44.8 15.5 0 4.5 8.5 4.7 8 0.3 0 0.3-0.3 3.2-1.7 2.5-1 2.3-0.5 2.2-0.1 1 0.2 1 0.3 1.5 1.1 0.8 0.8 0.5 0.9 0.7 1.9 0.3 2.4-0.1 2.5-0.4 2.8-0.8 3-1.2 3.2-1.5 3.3-1.7 3.2-2.1 3.1-2.2 3.1-2.3 2.8-2.6 2.6-2.6 2.4-2.7 2-2.5 1.6-2.6 1.3z" fill="#af8c11"/><path d="M97.4 270.5l-2.2 0.2-1.8-0.1-1.5-0.6-1.3-1.1-0.7-0.9-0.5-1.2-0.4-1.5-0.2-1.5 0.1-3.1 1-4.9-5.8-0.5 0-41.2 10.4 0 5.7 9.6 5.8 9.1 3.2-2.2 2.9-1.5 2.8-1 2.3-0.3 1.2 0.1 1 0.2 1 0.5 0.7 0.5 0.7 0.6 0.6 0.9 0.5 1 0.4 1.1 0.3 2.2-0.1 2.4-0.4 2.6-0.8 2.9-1.1 2.9-1.3 3.1-1.8 3.1-1.9 3-2.1 2.9-2.3 2.8-2.4 2.4-2.5 2.2-2.4 1.9-2.4 1.5-2.5 1.1z" fill="#b38f12"/><path d="M97.4 268.5l-1.3 0.2-1.3 0.1-1.2-0.2-1-0.3-0.8-0.5-0.9-0.7-0.7-0.9-0.5-1.1-0.3-1.4-0.2-1.5 0-1.6 0.2-1.8 1-4 0.9-2.7 0.3-0.6-7.5-0.9 0-36.5 3.9 0 7.2 11.3 7.3 10.4 3.8-3.1 2.8-1.8 2.8-1.3 2.7-0.7 1.2-0.1 1.1 0.1 1 0.3 1 0.5 0.8 0.6 0.7 0.8 0.5 1 0.4 1.1 0.3 2.1-0.1 2.1-0.3 2.5-0.7 2.7-1 2.6-1.3 2.9-1.5 2.8-1.8 2.9-1.9 2.6-2.1 2.5-2.2 2.4-2.4 2.1-2.2 1.8-2.3 1.4-2.2 1.1z" fill="#b79212"/><path d="M90.8 242.1l-1.2 0.3-1.5 0.2-4 0.1 0-20.3 5.9 9.9 1.5 2.8 0.9 2.1 0.5 1.9-0.1 1.3-0.3 0.5-0.4 0.5zM92.1 265.8l-0.7-0.6-0.7-0.9-0.4-1-0.3-1-0.3-2.5 0.4-3.1 0.8-3.1 1.3-3.4 1.9-3.8 2-3.1 2.9-3.7 2.9-3.1 2.8-2.4 3.2-2.2 2.8-1.3 2.6-0.6 1.1-0.1 1 0.2 1 0.3 0.8 0.5 0.8 0.7 0.6 0.8 0.4 0.9 0.3 1.1 0.2 2.5-0.4 3-0.9 3.4-1.4 3.4-1.9 3.7-2.3 3.5-2.5 3.2-2.8 3-2.9 2.5-3 2-2.8 1.3-2.5 0.7-1.2 0-1-0.1-1-0.3z" fill="#bb9513"/><path d="M92.6 263.5l-0.7-0.5-0.5-0.7-0.4-0.9-0.3-1-0.2-2.3 0.3-2.7 0.8-3 1.3-3.3 1.7-3.1 2.3-3.6 1.8-2.3 3.1-3.2 2.7-2.3 2.6-1.7 2.5-1.1 2.2-0.5 0.9 0 1 0.1 1.5 0.7 0.7 0.6 0.5 0.7 0.7 1.9 0.1 2.3-0.3 2.6-0.8 3.1-1.3 3.1-1.7 3.2-2 3.1-2.3 3-2.6 2.6-2.6 2.4-2.6 1.7-2.4 1.2-2.3 0.6-2.1 0-0.8-0.2z" fill="#be9813"/><path d="M93.2 261l-0.9-1-0.7-1.6-0.2-2 0.2-2.1 0.7-2.6 1.1-3 1.5-2.8 1.7-2.6 2.2-2.8 2.1-2.3 2.2-2 2.4-1.6 2.2-1.1 2.1-0.5 1.8 0 1.3 0.6 0.6 0.5 0.5 0.6 0.6 1.7 0.1 2-0.3 2.4-0.7 2.4-1.1 2.9-1.5 2.8-1.7 2.7-2.1 2.6-2.2 2.3-2.2 1.9-2.3 1.6-2.2 1.1-2 0.5-1.7 0-0.8-0.2z" fill="#c29b13"/><path d="M94.2 258.1l-0.8-0.9-0.5-1.3-0.2-1.6 0.2-2.1 0.7-2.3 0.8-2 1.3-2.5 1.6-2.3 1.6-2.1 1.8-1.9 1.9-1.6 1.8-1.2 1.8-0.9 1.7-0.4 1.3 0 1.2 0.5 0.8 0.9 0.5 1.4 0.2 1.6-0.3 2-0.6 2.2-0.9 2.1-1.2 2.4-1.5 2.2-1.7 2.1-1.8 2-1.8 1.6-1.8 1.2-1.7 0.8-1.7 0.5-1.5 0z" fill="#c69f14"/><path d="M95.8 254.3l-0.7-0.7-0.3-0.9-0.1-1.1 0.1-1.4 0.4-1.5 0.7-1.6 0.8-1.6 1.1-1.6 1.1-1.5 1.3-1.4 1.4-1.2 1.3-0.9 1.3-0.7 1.2-0.3 1 0 0.9 0.4 0.6 0.6 0.3 1 0.1 1.2-0.1 1.3-0.5 1.5-0.6 1.6-0.8 1.6-1.1 1.6-1.2 1.6-1.2 1.3-1.4 1.2-1.3 0.9-1.3 0.6-1.2 0.3-1 0z" fill="#caa214"/><circle cx="115.66" cy="254.43" r="6.54" fill="url(#H2)" style="mix-blend-mode:plus-lighter"/></g></svg><svg style="left:0;top:0" width="300" height="761" viewBox="0 0 300 761"><g opacity=".66" fill="#55555c" stroke="none"><path d="M28 669h64v64h-64zM29.800 670.800v60.400h60.400v-60.400z" fill-rule="evenodd"/><rect x="60" y="673" width="28" height="28"/><rect x="32" y="701" width="28" height="28"/>
<path d="M123.190 692.790A13.650 13.650 0 1 0 123.190 714.010" fill="none" stroke="#55555c" stroke-width="5.900"/>
<path d="M123.700 688.100H130.100L138.750 707.600L147.500 688.100H154.100L138.200 724.500Q135.400 731 128.500 731Q126 731 124.200 730.300L125.300 725.600Q127 726.200 128.500 726.100Q131.500 726 133 722.500L135.700 715.300z"/>
<circle cx="170.900" cy="703.400" r="13.700" fill="none" stroke="#55555c" stroke-width="5.900"/>
<path d="M193.400 679.900H199.100V688.100H207.300V692.800H199.100V711.500Q199.100 715.600 203.500 715.600Q205.700 715.600 207.200 715.200L207.900 719.300Q205.500 720 202.500 720Q193.400 720 193.400 711.500V692.800H188.750V688.100H193.400z"/>
<path d="M236.900 703.500A12.900 13.700 0 1 0 235.170 710.350" fill="none" stroke="#55555c" stroke-width="5.700"/><rect x="213" y="701.600" width="26.300" height="4.500"/>
<path d="M245.200 673H250.200V699.800L263.200 688.100H269.600L254 701.400L271.100 719H263.700L250.200 704.500V719H245.200z"/>
</g></svg><div class="a" style="left:706px;top:85px;width:23px;height:21px;box-sizing:border-box;border:1px solid #99d1ff;background:#c3def5"></div><svg style="left:709px;top:88px" width="17" height="16" viewBox="0 0 17 16"><g fill="#fff" stroke="#5078b4"><rect x=".5" y=".5" width="6" height="6" rx="1"/><rect x=".5" y="9.500" width="6" height="6" rx="1"/></g><path d="M2 3.500h3M3.500 2v3M2 12.500h3M3.500 11v3" stroke="#000" stroke-width="1"/><path d="M8 2.500h4M8 13.500h4" stroke="#555"/><path d="M8 4.500h4M13 4.500h3M8 6.500h4M13 6.500h3M8 8.500h4M13 8.500h3M8 10.500h4M13 10.500h3M8 15.500h4M13 15.500h3" stroke="#a3abbd"/></svg><div class="a" style="left:731.500px;top:88px;font:bold 10.500px/8px 'Liberation Serif',serif;color:#2448b0">A</div><div class="a" style="left:732px;top:96px;font:bold 10.500px/8px 'Liberation Serif',serif;color:#9c2a3c">Z</div><svg style="left:741px;top:88px" width="8" height="16" viewBox="0 0 8 16"><path d="M3.500 0v14" stroke="#000"/><path d="M1.400 10.800L3.500 12.200L5.600 10.800L3.500 14.900z" fill="#000"/></svg><div class="a" style="left:754px;top:86px;width:1px;height:21px;background:#767676"></div><svg style="left:761px;top:88px" width="16" height="15" viewBox="0 0 16 15"><rect x=".5" y=".5" width="15" height="14" fill="#e4e4e4" stroke="#b4b4b4"/><rect x="1" y="1" width="14" height="2" fill="#c4c4c4"/><path d="M3.500 5.500h4v2h-4zM3.500 7.500h9v4h-9z" fill="#ececec" stroke="#b0b0b0"/><path d="M5 9.500h4" stroke="#b0b0b0"/></svg><div class="a" style="left:706px;top:445px;width:23px;height:21px;box-sizing:border-box;border:1px solid #99d1ff;background:#c3def5"></div><svg style="left:709px;top:448px" width="17" height="16" viewBox="0 0 17 16"><g fill="#fff" stroke="#5078b4"><rect x=".5" y=".5" width="6" height="6" rx="1"/><rect x=".5" y="9.500" width="6" height="6" rx="1"/></g><path d="M2 3.500h3M3.500 2v3M2 12.500h3M3.500 11v3" stroke="#000" stroke-width="1"/><path d="M8 2.500h4M8 13.500h4" stroke="#555"/><path d="M8 4.500h4M13 4.500h3M8 6.500h4M13 6.500h3M8 8.500h4M13 8.500h3M8 10.500h4M13 10.500h3M8 15.500h4M13 15.500h3" stroke="#a3abbd"/></svg><div class="a" style="left:731.500px;top:448px;font:bold 10.500px/8px 'Liberation Serif',serif;color:#2448b0">A</div><div class="a" style="left:732px;top:456px;font:bold 10.500px/8px 'Liberation Serif',serif;color:#9c2a3c">Z</div><svg style="left:741px;top:448px" width="8" height="16" viewBox="0 0 8 16"><path d="M3.500 0v14" stroke="#000"/><path d="M1.400 10.800L3.500 12.200L5.600 10.800L3.500 14.900z" fill="#000"/></svg><div class="a" style="left:754px;top:446px;width:1px;height:21px;background:#767676"></div><svg style="left:761px;top:448px" width="16" height="15" viewBox="0 0 16 15"><rect x=".5" y=".5" width="15" height="14" fill="#e4e4e4" stroke="#b4b4b4"/><rect x="1" y="1" width="14" height="2" fill="#c4c4c4"/><path d="M3.500 5.500h4v2h-4zM3.500 7.500h9v4h-9z" fill="#ececec" stroke="#b0b0b0"/><path d="M5 9.500h4" stroke="#b0b0b0"/></svg><div class="pg" style="top:109px;height:197px"><div class="a" style="left:0;top:0;width:21px;height:161px;background:#f4f7fc"></div><div class="a" style="left:0;top:0px;width:300px;height:17px;background:#f4f7fc"></div><svg style="left:5.3px;top:6px" width="9" height="6" viewBox="0 0 9 6"><path d="M.5 .6L4.500 4.600L8.500 .6" fill="none" stroke="#404040" stroke-width="1.850"/></svg><div class="g b" style="left:24.58px;top:2px;letter-spacing:0.49px;">Camera</div><div class="ln" style="top:32px;left:21px;width:279px"></div><div class="a" style="left:141px;top:17px;width:1px;height:15px;background:#f4f7fc"></div><div class="a" style="left:21px;top:17px;width:120px;height:15px;background:#f4f7fc"></div><div class="g" style="left:24.5px;top:18px;letter-spacing:-0.65px;color:#000">FOV</div><div class="g" style="left:145.13px;top:18px;letter-spacing:-0.01px;color:#000;max-width:168.9px;overflow:hidden">1.047</div><div class="ln" style="top:48px;left:21px;width:279px"></div><div class="a" style="left:141px;top:33px;width:1px;height:15px;background:#f4f7fc"></div><div class="g" style="left:24.5px;top:34px;letter-spacing:-0.65px;color:#000">From</div><div class="g" style="left:145.1px;top:34px;letter-spacing:-0.18px;color:#000;max-width:169.0px;overflow:hidden">0, 1.5, -5, 1</div><div class="ln" style="top:64px;left:21px;width:279px"></div><div class="a" style="left:141px;top:49px;width:1px;height:15px;background:#f4f7fc"></div><div class="g" style="left:24.5px;top:50px;letter-spacing:-0.21px;color:#000">Height</div><div class="g" style="left:144.93px;top:50px;letter-spacing:0.36px;color:#000;max-width:169.2px;overflow:hidden">50</div><div class="ln" style="top:80px;left:21px;width:279px"></div><div class="a" style="left:141px;top:65px;width:1px;height:15px;background:#f4f7fc"></div><div class="g" style="left:25.16px;top:66px;letter-spacing:0.38px;color:#000">To</div><div class="g" style="left:145.1px;top:66px;letter-spacing:-0.21px;color:#000;max-width:169.0px;overflow:hidden">0, 1, 0, 1</div><div class="ln" style="top:96px;left:21px;width:279px"></div><div class="a" style="left:141px;top:81px;width:1px;height:15px;background:#f4f7fc"></div><div class="g" style="left:24.47px;top:82px;letter-spacing:-0.19px;color:#000">Up</div><div class="g" style="left:145.1px;top:82px;letter-spacing:-0.11px;color:#000;max-width:169.0px;overflow:hidden">0, 1, 0, 0</div><div class="ln" style="top:112px;left:21px;width:279px"></div><div class="a" style="left:141px;top:97px;width:1px;height:15px;background:#f4f7fc"></div><div class="g" style="left:25.38px;top:98px;letter-spacing:-0.16px;color:#000">Width</div><div class="g" style="left:145.13px;top:98px;letter-spacing:-0.26px;color:#000;max-width:168.9px;overflow:hidden">100</div><div class="a" style="left:0;top:112px;width:300px;height:17px;background:#f4f7fc"></div><svg style="left:5.3px;top:118px" width="9" height="6" viewBox="0 0 9 6"><path d="M.5 .6L4.500 4.600L8.500 .6" fill="none" stroke="#404040" stroke-width="1.850"/></svg><div class="g b" style="left:24.8px;top:114px;letter-spacing:0.77px;">Light</div><div class="ln" style="top:144px;left:21px;width:279px"></div><div class="a" style="left:141px;top:129px;width:1px;height:15px;background:#f4f7fc"></div><div class="g" style="left:24.78px;top:130px;letter-spacing:-0.31px;color:#000">Intensity</div><div class="g" style="left:145.13px;top:130px;letter-spacing:-0.12px;color:#000;max-width:168.9px;overflow:hidden">1, 1, 1</div><div class="ln" style="top:160px;left:21px;width:279px"></div><div class="a" style="left:141px;top:145px;width:1px;height:15px;background:#f4f7fc"></div><div class="g" style="left:24.8px;top:146px;letter-spacing:-0.33px;color:#000">Position</div><div class="g" style="left:145.11px;top:146px;letter-spacing:-0.23px;color:#000;max-width:169.0px;overflow:hidden">-10, 10, -10, 1</div></div><div class="dp" style="top:309px;height:59px"><div class="g b" style="left:4.8px;top:2px;letter-spacing:0.69px;">FOV</div></div><div class="g" style="left:706.1px;top:382px;letter-spacing:-0.08px;">Preset:</div><div class="cb" style="left:747px;top:379px;width:175px;height:21px"><div class="g" style="left:2.5px;top:3px;letter-spacing:-0.2px;">Larger Rectangle (1000x500)</div></div><svg style="left:908.5px;top:387px" width="9" height="6" viewBox="0 0 9 6"><path d="M.5 .5L4.500 4.500L8.500 .5" fill="none" stroke="#404040" stroke-width="1.100"/></svg><div class="cb" style="left:929px;top:378px;width:73px;height:21px"><div class="g" style="left:22.2px;top:3px;letter-spacing:0.11px;">Load</div></div><div class="g" style="left:706.15px;top:419px;letter-spacing:0.05px;">Object:</div><div class="cb" style="left:751px;top:416px;width:202px;height:21px"><div class="g" style="left:2.4px;top:3px;letter-spacing:-0.35px;">Floor</div></div><svg style="left:939.7px;top:424px" width="9" height="6" viewBox="0 0 9 6"><path d="M.5 .5L4.500 4.500L8.500 .5" fill="none" stroke="#404040" stroke-width="1.100"/></svg><div class="cb" style="left:960px;top:415px;width:21px;height:21px"></div><svg style="left:963px;top:417px" width="16" height="16" viewBox="0 0 16 16"><g fill="#e8331c"><path d="M1.200 2.200Q1.800 .8 3.200 1.600L15 13.900L14.300 14.600L8 9.500z"/><path d="M14.800 2.200L15.200 2.900L4.600 14.600Q3 15.600 1.800 15.200Q.8 14.300 2 13z"/></g></svg><div class="cb" style="left:984px;top:415px;width:21px;height:21px"></div><svg style="left:987px;top:418px" width="15" height="15" viewBox="0 0 15 15"><defs><linearGradient id="pl" x1="0" y1="0" x2="0" y2="1"><stop offset="0" stop-color="#8fdc68"/><stop offset=".5" stop-color="#5cba3c"/><stop offset="1" stop-color="#58c038"/></linearGradient></defs><path d="M5 .5h5v4.500h4.500v5h-4.500v4.500h-5v-4.500h-4.500v-5h4.500z" fill="url(#pl)" stroke="#1f8a12"/><path d="M6 1.500h3M1.500 6h3.500M10 6h3.500" stroke="#b6ee98" stroke-width="1" fill="none"/></svg><div class="pg" style="top:469px;height:204px"><div class="a" style="left:0;top:0;width:21px;height:204px;background:#f4f7fc"></div><div class="a" style="left:0;top:0px;width:283px;height:17px;background:#f4f7fc"></div><svg style="left:5.3px;top:6px" width="9" height="6" viewBox="0 0 9 6"><path d="M.5 .6L4.500 4.600L8.500 .6" fill="none" stroke="#404040" stroke-width="1.850"/></svg><div class="g b" style="left:25.08px;top:2px;letter-spacing:0.95px;">Appearance</div><div class="ln" style="top:32px;left:21px;width:262px"></div><div class="a" style="left:141px;top:17px;width:1px;height:15px;background:#f4f7fc"></div><div class="g" style="left:24.18px;top:18px;letter-spacing:-0.33px;color:#000">CastsShadow</div><div class="g" style="left:145.36px;top:18px;letter-spacing:-0.25px;color:#000;max-width:150.1px;overflow:hidden">True</div><div class="ln" style="top:48px;left:21px;width:262px"></div><div class="a" style="left:141px;top:33px;width:1px;height:15px;background:#f4f7fc"></div><svg style="left:5.3px;top:38px" width="9" height="6" viewBox="0 0 9 6"><path d="M.5 .6L4.500 4.600L8.500 .6" fill="none" stroke="#404040" stroke-width="1.850"/></svg><div class="g" style="left:24.5px;top:34px;letter-spacing:-0.31px;color:#000">Material</div><div class="g b" style="left:144.24px;top:34px;letter-spacing:0.86px;color:#000;max-width:151.4px;overflow:hidden">lib.Material</div><div class="ln" style="top:64px;left:21px;width:262px"></div><div class="a" style="left:141px;top:49px;width:1px;height:15px;background:#f4f7fc"></div><div class="g" style="left:46.18px;top:50px;letter-spacing:-0.54px;color:#000">Ambient</div><div class="g" style="left:144.8px;top:50px;letter-spacing:-0.56px;color:#000;max-width:150.8px;overflow:hidden">0.1</div><div class="ln" style="top:80px;left:21px;width:262px"></div><div class="a" style="left:141px;top:65px;width:1px;height:15px;background:#f4f7fc"></div><div class="g" style="left:45.58px;top:66px;letter-spacing:-0.37px;color:#000">Color</div><div class="g b" style="left:145.33px;top:66px;letter-spacing:1.04px;color:#000;max-width:150.2px;overflow:hidden">1, 0.9, 0.9</div><div class="ln" style="top:96px;left:21px;width:262px"></div><div class="a" style="left:141px;top:81px;width:1px;height:15px;background:#f4f7fc"></div><div class="g" style="left:45.6px;top:82px;letter-spacing:-0.26px;color:#000">Diffuse</div><div class="g" style="left:144.8px;top:82px;letter-spacing:-0px;color:#000;max-width:150.8px;overflow:hidden">0.9</div><div class="ln" style="top:112px;left:21px;width:262px"></div><div class="a" style="left:141px;top:97px;width:1px;height:15px;background:#f4f7fc"></div><div class="g" style="left:45.58px;top:98px;letter-spacing:-0.41px;color:#000">Inherit</div><div class="g" style="left:144.7px;top:98px;letter-spacing:-0.51px;color:#000;max-width:150.9px;overflow:hidden">False</div><div class="ln" style="top:128px;left:21px;width:262px"></div><div class="a" style="left:141px;top:113px;width:1px;height:15px;background:#f4f7fc"></div><svg style="left:26.3px;top:118px" width="9" height="6" viewBox="0 0 9 6"><path d="M.5 .6L4.500 4.600L8.500 .6" fill="none" stroke="#404040" stroke-width="1.850"/></svg><div class="g" style="left:45.6px;top:114px;letter-spacing:-0.27px;color:#000">Pattern</div><div class="g b" style="left:144.24px;top:114px;letter-spacing:0.92px;color:#000;max-width:151.4px;overflow:hidden">lib.BlendedPattern</div><div class="ln" style="top:144px;left:21px;width:262px"></div><div class="a" style="left:141px;top:129px;width:1px;height:15px;background:#f4f7fc"></div><div class="a" style="left:21px;top:129px;width:120px;height:15px;background:#0078d7"></div><svg style="left:47.3px;top:134px" width="9" height="6" viewBox="0 0 9 6"><path d="M.5 .6L4.500 4.600L8.500 .6" fill="none" stroke="#1a1a1a" stroke-width="1.850"/></svg><div class="g" style="left:66.7px;top:130px;letter-spacing:-0.21px;color:#fff">Pattern1</div><div class="g b" style="left:144.24px;top:130px;letter-spacing:0.87px;color:#000;max-width:151.4px;overflow:hidden">lib.StripePattern</div><div class="ln" style="top:160px;left:21px;width:262px"></div><div class="a" style="left:141px;top:145px;width:1px;height:15px;background:#f4f7fc"></div><div class="g" style="left:87.18px;top:146px;letter-spacing:-0.5px;color:#000">Color1</div><div class="g b" style="left:145.33px;top:146px;letter-spacing:0.91px;color:#000;max-width:150.2px;overflow:hidden">1, 1, 1</div><div class="ln" style="top:176px;left:21px;width:262px"></div><div class="a" style="left:141px;top:161px;width:1px;height:15px;background:#f4f7fc"></div><div class="g" style="left:87.28px;top:162px;letter-spacing:-0.23px;color:#000">Color2</div><div class="g b" style="left:145.7px;top:162px;letter-spacing:0.97px;color:#000;max-width:149.8px;overflow:hidden">0.1803922, 0.5450981, 0.3411765</div><div class="ln" style="top:192px;left:21px;width:262px"></div><div class="a" style="left:141px;top:177px;width:1px;height:15px;background:#f4f7fc"></div><div class="g" style="left:88.86px;top:178px;letter-spacing:-0.48px;color:#6d6d6d">Transform</div><div class="g b" style="left:145.33px;top:178px;letter-spacing:0.98px;color:#6d6d6d;max-width:150.2px;overflow:hidden">1 0 0 00 1 0 00 0 1 00 0 0 1</div><div class="ln" style="top:208px;left:21px;width:262px"></div><div class="a" style="left:141px;top:193px;width:1px;height:15px;background:#f4f7fc"></div><svg style="left:49px;top:196px" width="6" height="9" viewBox="0 0 6 9"><path d="M.7 .5L4.700 4.500L.7 8.500" fill="none" stroke="#a0a0a0" stroke-width="1.300"/></svg><div class="g" style="left:66.3px;top:194px;letter-spacing:-0.1px;color:#000">Pattern2</div><div class="g b" style="left:144.24px;top:194px;letter-spacing:0.87px;color:#000;max-width:151.4px;overflow:hidden">lib.StripePattern</div><div class="a" style="left:283px;top:0;width:1px;height:202px;background:#fff"></div><div class="a" style="left:284px;top:0;width:16px;height:202px;background:#f0f0f0"></div><div class="a" style="left:284px;top:17px;width:15px;height:84px;background:#cdcdcd"></div><svg style="left:287.700px;top:6px" width="8" height="6" viewBox="0 0 8 6"><path d="M.9 5L3.700 2.100L6.500 5" fill="none" stroke="#505050" stroke-width="2.200"/></svg><svg style="left:287.700px;top:191px" width="8" height="6" viewBox="0 0 8 6"><path d="M.9 1L3.700 3.900L6.500 1" fill="none" stroke="#505050" stroke-width="2.200"/></svg></div><div class="dp" style="top:676px;height:59px"><div class="g b" style="left:4.7px;top:2px;letter-spacing:0.93px;">Pattern1</div></div><div class="a" style="left:1px;top:738px;width:1008px;height:1px;background:#dadada"></div><div class="a" style="left:1px;top:739px;width:1008px;height:1px;background:#ececec"></div><div class="a" style="left:1px;top:759px;width:1008px;height:1px;background:#fff"></div><div class="a" style="left:1px;top:738px;width:1px;height:22px;background:#fff"></div><div class="a" style="left:1008px;top:31px;width:1px;height:729px;background:#fafafa"></div><svg style="left:722px;top:743px" width="13" height="12" viewBox="0 0 13 12"><defs><linearGradient id="rz" x1="0" y1="0" x2="1" y2="1"><stop offset="0" stop-color="#fff"/><stop offset="1" stop-color="#d5e3f0"/></linearGradient></defs><g fill="#1e3a5f"><rect x="1" y="0" width="1" height="8"/><rect x="0" y="1" width="3" height="1"/><rect x="4" y="10" width="9" height="1"/><rect x="11" y="9" width="1" height="3"/></g><rect x="4.500" y=".5" width="8" height="7" fill="url(#rz)" stroke="#1e3a5f"/></svg><div class="t" style="left:739.5px;top:742px;letter-spacing:-0.63px;word-spacing:.9px">1000 x 500</div><svg style="left:798px;top:742px" width="14" height="14" viewBox="0 0 14 14"><circle cx="7" cy="7" r="6.300" fill="#e9f1f1" stroke="#9b9b9b" stroke-width="1"/><circle cx="7" cy="7" r="5.300" fill="none" stroke="#f6fafa" stroke-width=".8"/><rect x="6" y="2" width="1" height="7" fill="#333"/><rect x="5" y="7" width="7" height="1" fill="#333"/></svg><div class="t" style="left:815.9px;top:742px;letter-spacing:-0.37px;">00:00:21.2087455</div><svg style="left:908px;top:741px" width="16" height="16" viewBox="0 0 16 16"><rect x="1" y="0" width="15" height="15" fill="#f7f9fd"/><path d="M.5 0v15.500h15.500" fill="none" stroke="#3a6ea5"/><g fill="#d63a1e"><path d="M4.500 2.900l1.600 1.600l-1.600 1.600l-1.600 -1.600z"/><path d="M9.400 6l1.600 1.600l-1.600 1.600l-1.600 -1.600z"/><path d="M11.400 10.900l1.600 1.600l-1.600 1.600l-1.600 -1.600z"/></g><g fill="#4a86c8"><circle cx="9.500" cy="2.500" r="1.500"/><circle cx="13.500" cy="5.500" r="1.500"/><circle cx="3.500" cy="11.500" r="1.500"/></g></svg><div class="t" style="left:926.2px;top:742px;letter-spacing:-0.52px;">500000</div><svg style="left:966px;top:741px" width="17" height="16" viewBox="0 0 17 16"><defs><linearGradient id="sq" x1="0" y1="0" x2="1" y2="1"><stop offset="0" stop-color="#e4eefb"/><stop offset="1" stop-color="#b5cdef"/></linearGradient><linearGradient id="cy" x1="0" y1="0" x2="1" y2="0"><stop offset="0" stop-color="#fff"/><stop offset="1" stop-color="#c4daf6"/></linearGradient></defs><circle cx="11" cy="5" r="4.600" fill="#cfe0f6" stroke="#7fa6d6"/><rect x=".5" y="2.500" width="9" height="9" fill="url(#sq)" stroke="#7fa6d6"/><path d="M5.800 6.500v8a3.200 1.300 0 0 0 6.400 0v-8z" fill="url(#cy)" stroke="#7fa6d6"/><ellipse cx="9" cy="6.500" rx="3.200" ry="1.300" fill="#fff" stroke="#7fa6d6"/></svg><div class="t" style="left:984.85px;top:742px;letter-spacing:0px;">4</div><svg style="left:996px;top:747px" width="11" height="11" viewBox="0 0 11 11"><path d="M9 1h2v2h-2zM9 5h2v2h-2zM5 5h2v2h-2zM9 9h2v2h-2zM5 9h2v2h-2zM1 9h2v2h-2z" fill="#fff"/><path d="M8 0h2v2h-2zM8 4h2v2h-2zM4 4h2v2h-2zM8 8h2v2h-2zM4 8h2v2h-2zM0 8h2v2h-2z" fill="#a6a6a6"/></svg></body></html>
